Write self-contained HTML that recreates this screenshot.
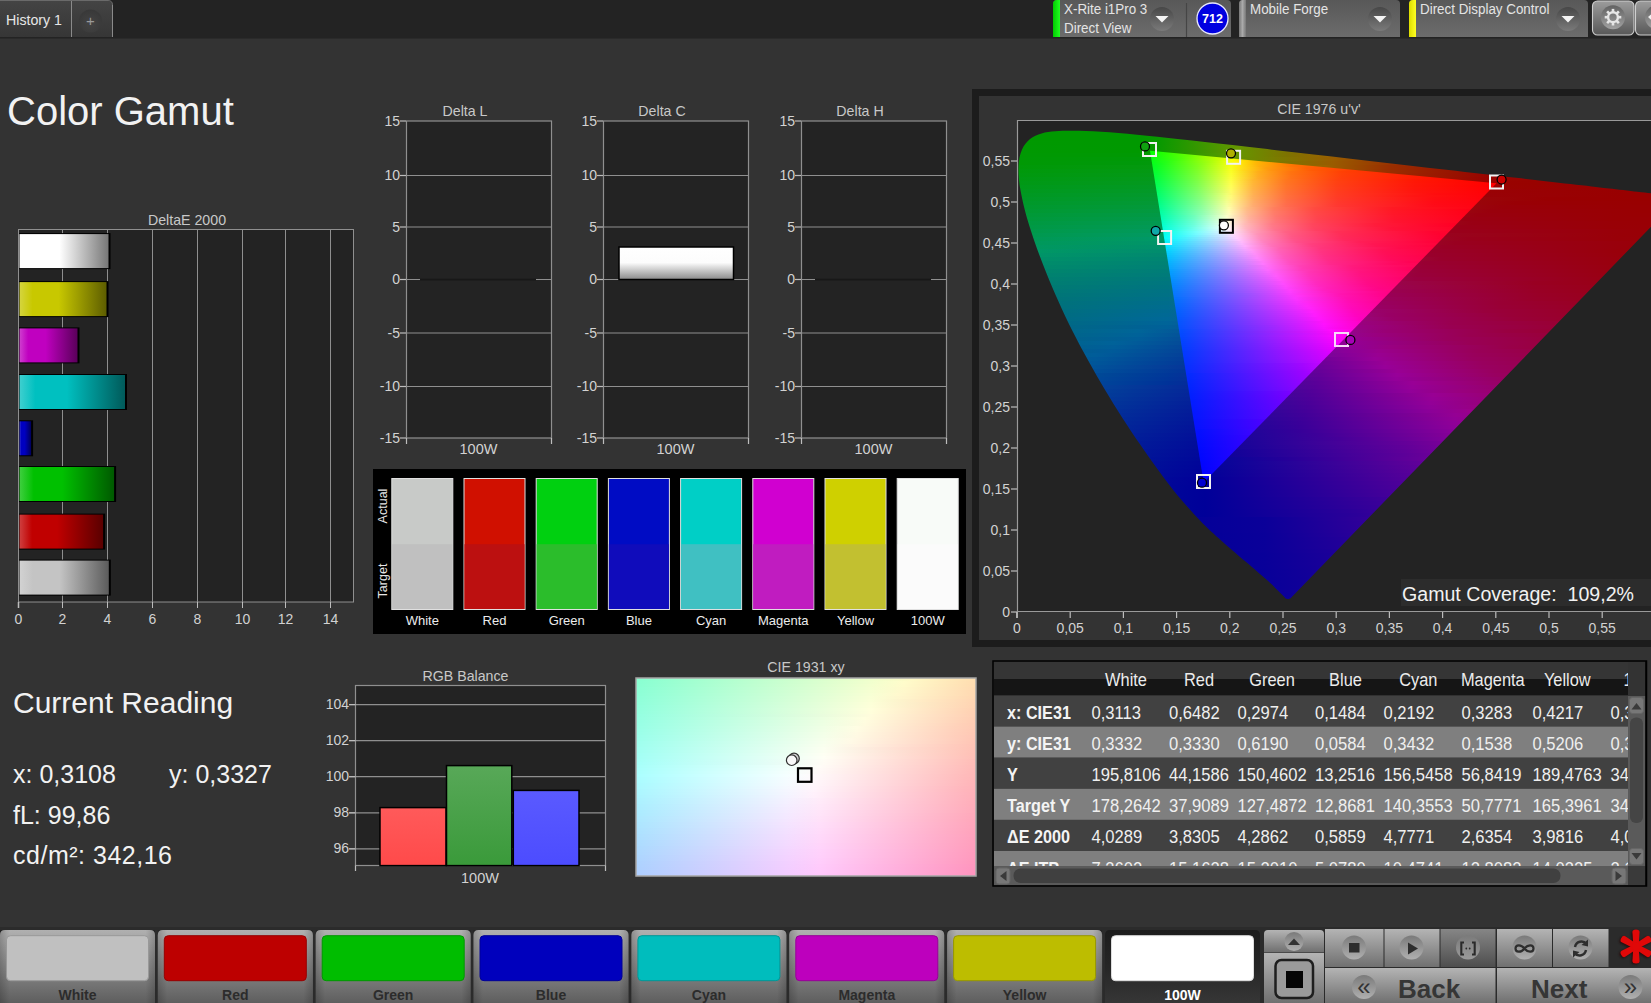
<!DOCTYPE html>
<html><head><meta charset="utf-8"><title>Color Gamut</title>
<style>
html,body{margin:0;padding:0;background:#333333;width:1651px;height:1003px;overflow:hidden;}
svg{display:block;font-family:"Liberation Sans", sans-serif;}
</style></head><body>
<svg width="1651" height="1003" viewBox="0 0 1651 1003">
<defs><linearGradient id="tabg" x1="0" y1="0" x2="0" y2="1"><stop offset="0" stop-color="#444"/><stop offset="1" stop-color="#363636"/></linearGradient><radialGradient id="plusg" cx="0.5" cy="0.6" r="0.6"><stop offset="0" stop-color="#444"/><stop offset="1" stop-color="#383838"/></radialGradient><linearGradient id="boxg" x1="0" y1="0" x2="0" y2="1"><stop offset="0" stop-color="#585858"/><stop offset="1" stop-color="#6c6c6c"/></linearGradient><linearGradient id="ddg" x1="0" y1="0" x2="0" y2="1"><stop offset="0" stop-color="#474747"/><stop offset="1" stop-color="#7a7a7a"/></linearGradient><linearGradient id="grs" x1="0" y1="0" x2="1" y2="0"><stop offset="0" stop-color="#0c0"/><stop offset="1" stop-color="#2f2"/></linearGradient><linearGradient id="gys" x1="0" y1="0" x2="1" y2="0"><stop offset="0" stop-color="#dd0"/><stop offset="1" stop-color="#ff2"/></linearGradient><linearGradient id="ggs" x1="0" y1="0" x2="1" y2="0"><stop offset="0" stop-color="#777"/><stop offset="0.5" stop-color="#aaa"/><stop offset="1" stop-color="#777"/></linearGradient><linearGradient id="gearg" x1="0" y1="0" x2="0" y2="1"><stop offset="0" stop-color="#9c9c9c"/><stop offset="1" stop-color="#585858"/></linearGradient><linearGradient id="gearc" x1="0" y1="0" x2="0" y2="1"><stop offset="0" stop-color="#626262"/><stop offset="1" stop-color="#a2a2a2"/></linearGradient><linearGradient id="db0" x1="0" y1="0" x2="1" y2="0"><stop offset="0" stop-color="#ffffff"/><stop offset="0.15" stop-color="#ffffff"/><stop offset="0.45" stop-color="#ffffff"/><stop offset="1" stop-color="#777777"/></linearGradient><linearGradient id="db1" x1="0" y1="0" x2="1" y2="0"><stop offset="0" stop-color="#d5d53f"/><stop offset="0.15" stop-color="#c8c800"/><stop offset="0.45" stop-color="#c8c800"/><stop offset="1" stop-color="#5e5e00"/></linearGradient><linearGradient id="db2" x1="0" y1="0" x2="1" y2="0"><stop offset="0" stop-color="#cf3fcf"/><stop offset="0.15" stop-color="#c000c0"/><stop offset="0.45" stop-color="#c000c0"/><stop offset="1" stop-color="#5a005a"/></linearGradient><linearGradient id="db3" x1="0" y1="0" x2="1" y2="0"><stop offset="0" stop-color="#3fcfcf"/><stop offset="0.15" stop-color="#00c0c0"/><stop offset="0.45" stop-color="#00c0c0"/><stop offset="1" stop-color="#005a5a"/></linearGradient><linearGradient id="db4" x1="0" y1="0" x2="1" y2="0"><stop offset="0" stop-color="#3f3fcf"/><stop offset="0.15" stop-color="#0000c0"/><stop offset="0.45" stop-color="#0000c0"/><stop offset="1" stop-color="#00005a"/></linearGradient><linearGradient id="db5" x1="0" y1="0" x2="1" y2="0"><stop offset="0" stop-color="#3fcf3f"/><stop offset="0.15" stop-color="#00c000"/><stop offset="0.45" stop-color="#00c000"/><stop offset="1" stop-color="#005a00"/></linearGradient><linearGradient id="db6" x1="0" y1="0" x2="1" y2="0"><stop offset="0" stop-color="#cf3f3f"/><stop offset="0.15" stop-color="#c00000"/><stop offset="0.45" stop-color="#c00000"/><stop offset="1" stop-color="#5a0000"/></linearGradient><linearGradient id="db7" x1="0" y1="0" x2="1" y2="0"><stop offset="0" stop-color="#d2d2d2"/><stop offset="0.15" stop-color="#c4c4c4"/><stop offset="0.45" stop-color="#c4c4c4"/><stop offset="1" stop-color="#5c5c5c"/></linearGradient><linearGradient id="cbar" x1="0" y1="0" x2="0" y2="1"><stop offset="0" stop-color="#ffffff"/><stop offset="0.48" stop-color="#fcfcfc"/><stop offset="1" stop-color="#8a8a8a"/></linearGradient><linearGradient id="rbR" x1="0" y1="0" x2="0" y2="1"><stop offset="0" stop-color="#ff5a5a"/><stop offset="1" stop-color="#ff4a4a"/></linearGradient><linearGradient id="rbG" x1="0" y1="0" x2="0" y2="1"><stop offset="0" stop-color="#58a858"/><stop offset="1" stop-color="#3a9a3a"/></linearGradient><linearGradient id="rbB" x1="0" y1="0" x2="0" y2="1"><stop offset="0" stop-color="#5a5aff"/><stop offset="1" stop-color="#4c4cff"/></linearGradient><linearGradient id="btng" x1="0" y1="0" x2="0" y2="1"><stop offset="0" stop-color="#b0b0b0"/><stop offset="0.55" stop-color="#858585"/><stop offset="1" stop-color="#5e5e5e"/></linearGradient><linearGradient id="btnsel" x1="0" y1="0" x2="0" y2="1"><stop offset="0" stop-color="#1c1c1c"/><stop offset="0.5" stop-color="#262626"/><stop offset="1" stop-color="#363636"/></linearGradient><linearGradient id="btnside" x1="0" y1="0" x2="1" y2="0"><stop offset="0" stop-color="#000" stop-opacity="0.18"/><stop offset="0.06" stop-color="#000" stop-opacity="0"/><stop offset="0.94" stop-color="#000" stop-opacity="0"/><stop offset="1" stop-color="#000" stop-opacity="0.18"/></linearGradient><linearGradient id="cbg" x1="0" y1="0" x2="0" y2="1"><stop offset="0" stop-color="#b4b4b4"/><stop offset="1" stop-color="#707070"/></linearGradient><linearGradient id="cbd" x1="0" y1="0" x2="0" y2="1"><stop offset="0" stop-color="#868686"/><stop offset="1" stop-color="#4e4e4e"/></linearGradient><linearGradient id="icg" x1="0" y1="0" x2="0" y2="1"><stop offset="0" stop-color="#7a7a7a"/><stop offset="1" stop-color="#b0b0b0"/></linearGradient><filter id="ash" x="-50%" y="-50%" width="200%" height="200%"><feGaussianBlur stdDeviation="1.2"/></filter></defs>
<rect x="0" y="0" width="1651" height="38.5" fill="#232323"/>
<path d="M0,1 H108 Q113,1 113,6 V37 H0 Z" fill="url(#tabg)"/>
<path d="M0,0.5 H108 Q112.5,0.5 112.5,5" fill="none" stroke="#6a6a6a" stroke-width="1"/>
<line x1="112.5" y1="5" x2="112.5" y2="37" stroke="#8a8a8a" stroke-width="1"/>
<line x1="71.5" y1="1" x2="71.5" y2="37" stroke="#8a8a8a" stroke-width="1"/>
<circle cx="90.5" cy="21" r="11.5" fill="url(#plusg)"/>
<text x="90.5" y="26.0" font-size="15" fill="#9a9a9a" text-anchor="middle" font-weight="normal" >+</text>
<text transform="translate(6.0,25.2) scale(1,1.08)" font-size="14.2" fill="#e6e6e6" text-anchor="start" font-weight="normal" >History 1</text>
<path d="M1053,37 V4 Q1053,0 1057,0 H1227 Q1231,0 1231,4 V37 Z" fill="url(#boxg)"/>
<path d="M1053,37 V4 Q1053,0 1057,0 H1060 V37 Z" fill="url(#grs)"/>
<text transform="translate(1064.0,13.5) scale(1,1.05)" font-size="13.4" fill="#e4e4e4" text-anchor="start" font-weight="normal" >X-Rite i1Pro 3</text>
<text transform="translate(1064.0,32.5) scale(1,1.05)" font-size="13.4" fill="#e4e4e4" text-anchor="start" font-weight="normal" >Direct View</text>
<line x1="1186.5" y1="3" x2="1186.5" y2="37" stroke="#454545" stroke-width="1.2"/>
<circle cx="1162" cy="19" r="12" fill="url(#ddg)"/>
<path d="M1155.5,16 L1168.5,16 L1162.0,22.5 Z" fill="#f4f4f4"/>
<circle cx="1212.5" cy="18.5" r="15.5" fill="#0000e0" stroke="#e8e8ff" stroke-width="1.3"/>
<text x="1212.5" y="23.0" font-size="12.5" fill="#ffffff" text-anchor="middle" font-weight="bold" >712</text>
<path d="M1239,37 V4 Q1239,0 1243,0 H1396 Q1400,0 1400,4 V37 Z" fill="url(#boxg)"/>
<path d="M1239,37 V4 Q1239,0 1243,0 H1246 V37 Z" fill="url(#ggs)"/>
<text transform="translate(1250.0,14.0) scale(1,1.05)" font-size="13.4" fill="#e4e4e4" text-anchor="start" font-weight="normal" >Mobile Forge</text>
<circle cx="1380" cy="19" r="12" fill="url(#ddg)"/>
<path d="M1373.5,16 L1386.5,16 L1380.0,22.5 Z" fill="#f4f4f4"/>
<path d="M1409,37 V4 Q1409,0 1413,0 H1584 Q1588,0 1588,4 V37 Z" fill="url(#boxg)"/>
<path d="M1409,37 V4 Q1409,0 1413,0 H1416 V37 Z" fill="url(#gys)"/>
<text transform="translate(1420.0,14.0) scale(1,1.05)" font-size="13.4" fill="#e4e4e4" text-anchor="start" font-weight="normal" >Direct Display Control</text>
<circle cx="1568" cy="19" r="12" fill="url(#ddg)"/>
<path d="M1561.5,16 L1574.5,16 L1568.0,22.5 Z" fill="#f4f4f4"/>
<rect x="1592.5" y="1" width="41.5" height="34" rx="5" fill="url(#gearg)" stroke="#cfcfcf" stroke-width="1.1"/>
<circle cx="1613" cy="17.3" r="12" fill="url(#gearc)"/>
<g transform="translate(1613,17.2)" fill="#e6e6e6"><rect x="-1.3" y="-8.3" width="2.6" height="3.5" transform="rotate(0)"/><rect x="-1.3" y="-8.3" width="2.6" height="3.5" transform="rotate(45)"/><rect x="-1.3" y="-8.3" width="2.6" height="3.5" transform="rotate(90)"/><rect x="-1.3" y="-8.3" width="2.6" height="3.5" transform="rotate(135)"/><rect x="-1.3" y="-8.3" width="2.6" height="3.5" transform="rotate(180)"/><rect x="-1.3" y="-8.3" width="2.6" height="3.5" transform="rotate(225)"/><rect x="-1.3" y="-8.3" width="2.6" height="3.5" transform="rotate(270)"/><rect x="-1.3" y="-8.3" width="2.6" height="3.5" transform="rotate(315)"/><circle r="4.9" fill="none" stroke="#e6e6e6" stroke-width="2.4"/></g>
<rect x="1635.5" y="1" width="30" height="34" rx="5" fill="url(#gearg)" stroke="#cfcfcf" stroke-width="1.1"/>
<circle cx="1657" cy="17.3" r="12" fill="url(#gearc)"/>
<path d="M1648,17 L1652,13.5 L1652,20.5 Z" fill="#f0f0f0"/>
<text x="7.0" y="124.5" font-size="40" fill="#f2f2f2" text-anchor="start" font-weight="normal" >Color Gamut</text>
<text x="187.0" y="224.5" font-size="14.2" fill="#c8c8c8" text-anchor="middle" font-weight="normal" >DeltaE 2000</text>
<rect x="18.5" y="229.5" width="335" height="372.5" fill="#232323" stroke="#8f8f8f" stroke-width="1"/>
<line x1="62.5" y1="230" x2="62.5" y2="602" stroke="#8f8f8f" stroke-width="1"/>
<line x1="107.5" y1="230" x2="107.5" y2="602" stroke="#8f8f8f" stroke-width="1"/>
<line x1="152.5" y1="230" x2="152.5" y2="602" stroke="#8f8f8f" stroke-width="1"/>
<line x1="197.5" y1="230" x2="197.5" y2="602" stroke="#8f8f8f" stroke-width="1"/>
<line x1="242.5" y1="230" x2="242.5" y2="602" stroke="#8f8f8f" stroke-width="1"/>
<line x1="285.5" y1="230" x2="285.5" y2="602" stroke="#8f8f8f" stroke-width="1"/>
<line x1="330.5" y1="230" x2="330.5" y2="602" stroke="#8f8f8f" stroke-width="1"/>
<line x1="18.5" y1="602" x2="18.5" y2="608" stroke="#bdbdbd" stroke-width="1.5"/>
<text x="18.5" y="624.0" font-size="14" fill="#d2d2d2" text-anchor="middle" font-weight="normal" >0</text>
<line x1="62.5" y1="602" x2="62.5" y2="608" stroke="#bdbdbd" stroke-width="1"/>
<text x="62.5" y="624.0" font-size="14" fill="#d2d2d2" text-anchor="middle" font-weight="normal" >2</text>
<line x1="107.5" y1="602" x2="107.5" y2="608" stroke="#bdbdbd" stroke-width="1"/>
<text x="107.5" y="624.0" font-size="14" fill="#d2d2d2" text-anchor="middle" font-weight="normal" >4</text>
<line x1="152.5" y1="602" x2="152.5" y2="608" stroke="#bdbdbd" stroke-width="1"/>
<text x="152.5" y="624.0" font-size="14" fill="#d2d2d2" text-anchor="middle" font-weight="normal" >6</text>
<line x1="197.5" y1="602" x2="197.5" y2="608" stroke="#bdbdbd" stroke-width="1"/>
<text x="197.5" y="624.0" font-size="14" fill="#d2d2d2" text-anchor="middle" font-weight="normal" >8</text>
<line x1="242.5" y1="602" x2="242.5" y2="608" stroke="#bdbdbd" stroke-width="1"/>
<text x="242.5" y="624.0" font-size="14" fill="#d2d2d2" text-anchor="middle" font-weight="normal" >10</text>
<line x1="285.5" y1="602" x2="285.5" y2="608" stroke="#bdbdbd" stroke-width="1"/>
<text x="285.5" y="624.0" font-size="14" fill="#d2d2d2" text-anchor="middle" font-weight="normal" >12</text>
<line x1="330.5" y1="602" x2="330.5" y2="608" stroke="#bdbdbd" stroke-width="1"/>
<text x="330.5" y="624.0" font-size="14" fill="#d2d2d2" text-anchor="middle" font-weight="normal" >14</text>
<rect x="19" y="233.1" width="91.5" height="36" fill="#000"/>
<rect x="19.5" y="234.1" width="89.0" height="34" fill="url(#db0)"/>
<rect x="19" y="281.1" width="89.5" height="36" fill="#000"/>
<rect x="19.5" y="282.1" width="87.0" height="34" fill="url(#db1)"/>
<rect x="19" y="327.4" width="60.5" height="36" fill="#000"/>
<rect x="19.5" y="328.4" width="58.0" height="34" fill="url(#db2)"/>
<rect x="19" y="374.0" width="108.0" height="36" fill="#000"/>
<rect x="19.5" y="375.0" width="105.5" height="34" fill="url(#db3)"/>
<rect x="19" y="420.3" width="14.1" height="36" fill="#000"/>
<rect x="19.5" y="421.3" width="11.6" height="34" fill="url(#db4)"/>
<rect x="19" y="466.0" width="97.1" height="36" fill="#000"/>
<rect x="19.5" y="467.0" width="94.6" height="34" fill="url(#db5)"/>
<rect x="19" y="513.6" width="86.1" height="36" fill="#000"/>
<rect x="19.5" y="514.6" width="83.6" height="34" fill="url(#db6)"/>
<rect x="19" y="559.6" width="91.8" height="36" fill="#000"/>
<rect x="19.5" y="560.6" width="89.3" height="34" fill="url(#db7)"/>
<text x="465.0" y="115.5" font-size="14.2" fill="#c8c8c8" text-anchor="middle" font-weight="normal" >Delta L</text>
<rect x="406.5" y="121" width="145" height="317" fill="#232323" stroke="#8f8f8f" stroke-width="1.2"/>
<line x1="400.0" y1="121.0" x2="406.0" y2="121.0" stroke="#bdbdbd" stroke-width="1.2"/>
<text x="400.0" y="125.6" font-size="14" fill="#d2d2d2" text-anchor="end" font-weight="normal" >15</text>
<line x1="406.0" y1="175.5" x2="551.0" y2="175.5" stroke="#8f8f8f" stroke-width="1.2"/>
<line x1="400.0" y1="175.5" x2="406.0" y2="175.5" stroke="#bdbdbd" stroke-width="1.2"/>
<text x="400.0" y="180.1" font-size="14" fill="#d2d2d2" text-anchor="end" font-weight="normal" >10</text>
<line x1="406.0" y1="227.0" x2="551.0" y2="227.0" stroke="#8f8f8f" stroke-width="1.2"/>
<line x1="400.0" y1="227.0" x2="406.0" y2="227.0" stroke="#bdbdbd" stroke-width="1.2"/>
<text x="400.0" y="231.6" font-size="14" fill="#d2d2d2" text-anchor="end" font-weight="normal" >5</text>
<line x1="406.0" y1="279.5" x2="551.0" y2="279.5" stroke="#8f8f8f" stroke-width="1.2"/>
<line x1="400.0" y1="279.5" x2="406.0" y2="279.5" stroke="#bdbdbd" stroke-width="1.2"/>
<text x="400.0" y="284.1" font-size="14" fill="#d2d2d2" text-anchor="end" font-weight="normal" >0</text>
<line x1="406.0" y1="333.0" x2="551.0" y2="333.0" stroke="#8f8f8f" stroke-width="1.2"/>
<line x1="400.0" y1="333.0" x2="406.0" y2="333.0" stroke="#bdbdbd" stroke-width="1.2"/>
<text x="400.0" y="337.6" font-size="14" fill="#d2d2d2" text-anchor="end" font-weight="normal" >-5</text>
<line x1="406.0" y1="386.5" x2="551.0" y2="386.5" stroke="#8f8f8f" stroke-width="1.2"/>
<line x1="400.0" y1="386.5" x2="406.0" y2="386.5" stroke="#bdbdbd" stroke-width="1.2"/>
<text x="400.0" y="391.1" font-size="14" fill="#d2d2d2" text-anchor="end" font-weight="normal" >-10</text>
<line x1="400.0" y1="438.0" x2="406.0" y2="438.0" stroke="#bdbdbd" stroke-width="1.2"/>
<text x="400.0" y="442.6" font-size="14" fill="#d2d2d2" text-anchor="end" font-weight="normal" >-15</text>
<line x1="406.5" y1="438" x2="406.5" y2="444" stroke="#bdbdbd" stroke-width="1.2"/>
<line x1="551.5" y1="438" x2="551.5" y2="444" stroke="#bdbdbd" stroke-width="1.2"/>
<text x="478.5" y="454.0" font-size="14.5" fill="#d2d2d2" text-anchor="middle" font-weight="normal" >100W</text>
<rect x="420.0" y="278.7" width="116" height="1.8" fill="#181818"/>
<text x="662.0" y="115.5" font-size="14.2" fill="#c8c8c8" text-anchor="middle" font-weight="normal" >Delta C</text>
<rect x="603.5" y="121" width="145" height="317" fill="#232323" stroke="#8f8f8f" stroke-width="1.2"/>
<line x1="597.0" y1="121.0" x2="603.0" y2="121.0" stroke="#bdbdbd" stroke-width="1.2"/>
<text x="597.0" y="125.6" font-size="14" fill="#d2d2d2" text-anchor="end" font-weight="normal" >15</text>
<line x1="603.0" y1="175.5" x2="748.0" y2="175.5" stroke="#8f8f8f" stroke-width="1.2"/>
<line x1="597.0" y1="175.5" x2="603.0" y2="175.5" stroke="#bdbdbd" stroke-width="1.2"/>
<text x="597.0" y="180.1" font-size="14" fill="#d2d2d2" text-anchor="end" font-weight="normal" >10</text>
<line x1="603.0" y1="227.0" x2="748.0" y2="227.0" stroke="#8f8f8f" stroke-width="1.2"/>
<line x1="597.0" y1="227.0" x2="603.0" y2="227.0" stroke="#bdbdbd" stroke-width="1.2"/>
<text x="597.0" y="231.6" font-size="14" fill="#d2d2d2" text-anchor="end" font-weight="normal" >5</text>
<line x1="603.0" y1="279.5" x2="748.0" y2="279.5" stroke="#8f8f8f" stroke-width="1.2"/>
<line x1="597.0" y1="279.5" x2="603.0" y2="279.5" stroke="#bdbdbd" stroke-width="1.2"/>
<text x="597.0" y="284.1" font-size="14" fill="#d2d2d2" text-anchor="end" font-weight="normal" >0</text>
<line x1="603.0" y1="333.0" x2="748.0" y2="333.0" stroke="#8f8f8f" stroke-width="1.2"/>
<line x1="597.0" y1="333.0" x2="603.0" y2="333.0" stroke="#bdbdbd" stroke-width="1.2"/>
<text x="597.0" y="337.6" font-size="14" fill="#d2d2d2" text-anchor="end" font-weight="normal" >-5</text>
<line x1="603.0" y1="386.5" x2="748.0" y2="386.5" stroke="#8f8f8f" stroke-width="1.2"/>
<line x1="597.0" y1="386.5" x2="603.0" y2="386.5" stroke="#bdbdbd" stroke-width="1.2"/>
<text x="597.0" y="391.1" font-size="14" fill="#d2d2d2" text-anchor="end" font-weight="normal" >-10</text>
<line x1="597.0" y1="438.0" x2="603.0" y2="438.0" stroke="#bdbdbd" stroke-width="1.2"/>
<text x="597.0" y="442.6" font-size="14" fill="#d2d2d2" text-anchor="end" font-weight="normal" >-15</text>
<line x1="603.5" y1="438" x2="603.5" y2="444" stroke="#bdbdbd" stroke-width="1.2"/>
<line x1="748.5" y1="438" x2="748.5" y2="444" stroke="#bdbdbd" stroke-width="1.2"/>
<text x="675.5" y="454.0" font-size="14.5" fill="#d2d2d2" text-anchor="middle" font-weight="normal" >100W</text>
<rect x="619" y="247" width="114.5" height="32.5" fill="url(#cbar)" stroke="#000" stroke-width="1.5"/>
<text x="860.0" y="115.5" font-size="14.2" fill="#c8c8c8" text-anchor="middle" font-weight="normal" >Delta H</text>
<rect x="801.5" y="121" width="145" height="317" fill="#232323" stroke="#8f8f8f" stroke-width="1.2"/>
<line x1="795.0" y1="121.0" x2="801.0" y2="121.0" stroke="#bdbdbd" stroke-width="1.2"/>
<text x="795.0" y="125.6" font-size="14" fill="#d2d2d2" text-anchor="end" font-weight="normal" >15</text>
<line x1="801.0" y1="175.5" x2="946.0" y2="175.5" stroke="#8f8f8f" stroke-width="1.2"/>
<line x1="795.0" y1="175.5" x2="801.0" y2="175.5" stroke="#bdbdbd" stroke-width="1.2"/>
<text x="795.0" y="180.1" font-size="14" fill="#d2d2d2" text-anchor="end" font-weight="normal" >10</text>
<line x1="801.0" y1="227.0" x2="946.0" y2="227.0" stroke="#8f8f8f" stroke-width="1.2"/>
<line x1="795.0" y1="227.0" x2="801.0" y2="227.0" stroke="#bdbdbd" stroke-width="1.2"/>
<text x="795.0" y="231.6" font-size="14" fill="#d2d2d2" text-anchor="end" font-weight="normal" >5</text>
<line x1="801.0" y1="279.5" x2="946.0" y2="279.5" stroke="#8f8f8f" stroke-width="1.2"/>
<line x1="795.0" y1="279.5" x2="801.0" y2="279.5" stroke="#bdbdbd" stroke-width="1.2"/>
<text x="795.0" y="284.1" font-size="14" fill="#d2d2d2" text-anchor="end" font-weight="normal" >0</text>
<line x1="801.0" y1="333.0" x2="946.0" y2="333.0" stroke="#8f8f8f" stroke-width="1.2"/>
<line x1="795.0" y1="333.0" x2="801.0" y2="333.0" stroke="#bdbdbd" stroke-width="1.2"/>
<text x="795.0" y="337.6" font-size="14" fill="#d2d2d2" text-anchor="end" font-weight="normal" >-5</text>
<line x1="801.0" y1="386.5" x2="946.0" y2="386.5" stroke="#8f8f8f" stroke-width="1.2"/>
<line x1="795.0" y1="386.5" x2="801.0" y2="386.5" stroke="#bdbdbd" stroke-width="1.2"/>
<text x="795.0" y="391.1" font-size="14" fill="#d2d2d2" text-anchor="end" font-weight="normal" >-10</text>
<line x1="795.0" y1="438.0" x2="801.0" y2="438.0" stroke="#bdbdbd" stroke-width="1.2"/>
<text x="795.0" y="442.6" font-size="14" fill="#d2d2d2" text-anchor="end" font-weight="normal" >-15</text>
<line x1="801.5" y1="438" x2="801.5" y2="444" stroke="#bdbdbd" stroke-width="1.2"/>
<line x1="946.5" y1="438" x2="946.5" y2="444" stroke="#bdbdbd" stroke-width="1.2"/>
<text x="873.5" y="454.0" font-size="14.5" fill="#d2d2d2" text-anchor="middle" font-weight="normal" >100W</text>
<rect x="815.0" y="278.7" width="116" height="1.8" fill="#181818"/>
<rect x="373" y="469" width="593" height="165" fill="#000"/>
<rect x="391.8" y="478.5" width="61" height="131" fill="#c8cac8" stroke="#e0e0e0" stroke-width="1"/>
<rect x="392.3" y="544.2" width="60" height="64.8" fill="#c0c0c0"/>
<text x="422.3" y="625.0" font-size="13" fill="#ececec" text-anchor="middle" font-weight="normal" >White</text>
<rect x="464.0" y="478.5" width="61" height="131" fill="#d01000" stroke="#e0e0e0" stroke-width="1"/>
<rect x="464.5" y="544.2" width="60" height="64.8" fill="#bc1010"/>
<text x="494.5" y="625.0" font-size="13" fill="#ececec" text-anchor="middle" font-weight="normal" >Red</text>
<rect x="536.2" y="478.5" width="61" height="131" fill="#00d010" stroke="#e0e0e0" stroke-width="1"/>
<rect x="536.7" y="544.2" width="60" height="64.8" fill="#2bbd2b"/>
<text x="566.7" y="625.0" font-size="13" fill="#ececec" text-anchor="middle" font-weight="normal" >Green</text>
<rect x="608.4" y="478.5" width="61" height="131" fill="#000cc4" stroke="#e0e0e0" stroke-width="1"/>
<rect x="608.9" y="544.2" width="60" height="64.8" fill="#100cbb"/>
<text x="638.9" y="625.0" font-size="13" fill="#ececec" text-anchor="middle" font-weight="normal" >Blue</text>
<rect x="680.6" y="478.5" width="61" height="131" fill="#00cfc6" stroke="#e0e0e0" stroke-width="1"/>
<rect x="681.1" y="544.2" width="60" height="64.8" fill="#40c0c2"/>
<text x="711.1" y="625.0" font-size="13" fill="#ececec" text-anchor="middle" font-weight="normal" >Cyan</text>
<rect x="752.8" y="478.5" width="61" height="131" fill="#d000d0" stroke="#e0e0e0" stroke-width="1"/>
<rect x="753.3" y="544.2" width="60" height="64.8" fill="#c01cc0"/>
<text x="783.3" y="625.0" font-size="13" fill="#ececec" text-anchor="middle" font-weight="normal" >Magenta</text>
<rect x="825.0" y="478.5" width="61" height="131" fill="#cfd000" stroke="#e0e0e0" stroke-width="1"/>
<rect x="825.5" y="544.2" width="60" height="64.8" fill="#c2c030"/>
<text x="855.5" y="625.0" font-size="13" fill="#ececec" text-anchor="middle" font-weight="normal" >Yellow</text>
<rect x="897.2" y="478.5" width="61" height="131" fill="#f8fbf8" stroke="#e0e0e0" stroke-width="1"/>
<rect x="897.7" y="544.2" width="60" height="64.8" fill="#fbfbfb"/>
<text x="927.7" y="625.0" font-size="13" fill="#ececec" text-anchor="middle" font-weight="normal" >100W</text>
<text transform="translate(387,506) rotate(-90)" font-size="12.5" fill="#e6e6e6" text-anchor="middle">Actual</text>
<text transform="translate(387,581) rotate(-90)" font-size="12.5" fill="#e6e6e6" text-anchor="middle">Target</text>
<rect x="972" y="89" width="690" height="558" fill="#1c1c1c"/>
<rect x="979" y="96" width="680" height="544" fill="#333333"/>
<text x="1319.0" y="113.5" font-size="14.2" fill="#c8c8c8" text-anchor="middle" font-weight="normal" >CIE 1976 u'v'</text>
<rect x="1017" y="120" width="650" height="492" fill="#232323"/>
<defs><clipPath id="loc"><path d="M1290.31,598.50 C1290.27,598.49 1290.19,598.43 1290.10,598.45 C1290.02,598.47 1289.93,598.58 1289.80,598.61 C1289.68,598.64 1289.49,598.56 1289.38,598.61 C1289.27,598.67 1289.27,598.87 1289.13,598.93 C1289.00,599.00 1288.82,598.99 1288.59,598.99 C1288.37,598.99 1288.07,598.96 1287.79,598.94 C1287.51,598.92 1287.29,599.00 1286.89,598.87 C1286.48,598.73 1285.91,598.57 1285.37,598.15 C1284.82,597.73 1284.36,597.13 1283.60,596.34 C1282.85,595.56 1282.01,594.64 1280.84,593.45 C1279.66,592.26 1278.22,590.89 1276.55,589.21 C1274.87,587.53 1273.09,585.56 1270.77,583.39 C1268.45,581.22 1265.78,578.95 1262.64,576.21 C1259.51,573.47 1256.01,570.39 1251.95,566.94 C1247.90,563.49 1243.43,559.91 1238.30,555.51 C1233.17,551.12 1227.59,546.45 1221.17,540.57 C1214.75,534.69 1208.02,528.97 1199.79,520.24 C1191.57,511.51 1181.79,500.84 1171.82,488.19 C1161.86,475.54 1151.13,460.74 1140.01,444.36 C1128.89,427.98 1116.36,408.82 1105.11,389.92 C1093.85,371.03 1082.17,350.23 1072.48,330.98 C1062.78,311.73 1054.10,291.81 1046.96,274.43 C1039.81,257.06 1034.01,240.59 1029.63,226.73 C1025.25,212.87 1022.53,201.30 1020.68,191.28 C1018.83,181.26 1018.31,173.55 1018.51,166.61 C1018.72,159.67 1020.01,154.27 1021.93,149.65 C1023.85,145.03 1026.78,141.60 1030.05,138.89 C1033.33,136.18 1037.39,134.65 1041.60,133.39 C1045.80,132.14 1050.52,131.79 1055.30,131.37 C1060.08,130.94 1065.25,130.92 1070.27,130.87 C1075.30,130.81 1080.27,130.90 1085.44,131.05 C1090.61,131.20 1095.81,131.46 1101.30,131.79 C1106.79,132.12 1112.42,132.54 1118.36,133.03 C1124.29,133.51 1130.42,134.08 1136.91,134.70 C1143.41,135.33 1150.17,136.02 1157.33,136.77 C1164.50,137.52 1171.98,138.33 1179.91,139.20 C1187.84,140.07 1196.13,141.00 1204.91,141.99 C1213.68,142.97 1222.86,144.02 1232.54,145.12 C1242.21,146.23 1252.35,147.40 1262.95,148.62 C1273.55,149.84 1284.64,151.12 1296.13,152.44 C1307.62,153.77 1319.62,155.15 1331.88,156.56 C1344.14,157.97 1356.90,159.43 1369.69,160.90 C1382.48,162.38 1395.86,163.93 1408.64,165.40 C1421.41,166.88 1433.94,168.32 1446.34,169.74 C1458.73,171.17 1471.37,172.63 1483.01,173.97 C1494.64,175.30 1505.74,176.57 1516.15,177.76 C1526.56,178.96 1536.42,180.09 1545.48,181.14 C1554.54,182.18 1562.84,183.15 1570.50,184.03 C1578.17,184.91 1585.05,185.70 1591.49,186.44 C1597.92,187.18 1601.46,187.58 1609.10,188.46 C1616.74,189.34 1629.54,190.82 1637.34,191.72 C1645.14,192.62 1650.77,193.27 1655.90,193.86 C1661.03,194.45 1664.03,194.80 1668.09,195.27 C1672.15,195.74 1678.23,196.44 1680.26,196.67 Z"/></clipPath><clipPath id="tri"><polygon points="1496.54,183.22 1150.00,150.75 1203.63,482.52"/></clipPath><clipPath id="plotclip"><rect x="1018" y="121" width="640" height="490"/></clipPath></defs><g clip-path="url(#plotclip)"><g clip-path="url(#loc)"><defs><linearGradient id="co0" gradientUnits="userSpaceOnUse" x1="1017" y1="0" x2="1651" y2="0"><stop offset="0.0000" stop-color="#009900"/><stop offset="0.1909" stop-color="#009900"/><stop offset="0.2256" stop-color="#089900"/><stop offset="0.3249" stop-color="#4f9900"/><stop offset="0.3596" stop-color="#689200"/><stop offset="0.4590" stop-color="#856c00"/><stop offset="0.5110" stop-color="#996000"/><stop offset="0.6341" stop-color="#992900"/><stop offset="0.8249" stop-color="#990200"/><stop offset="0.9779" stop-color="#990000"/><stop offset="0.9968" stop-color="#990000"/><stop offset="1.0000" stop-color="#990000"/></linearGradient><linearGradient id="co1" gradientUnits="userSpaceOnUse" x1="1017" y1="0" x2="1651" y2="0"><stop offset="0.0000" stop-color="#009900"/><stop offset="0.1909" stop-color="#009900"/><stop offset="0.2256" stop-color="#089900"/><stop offset="0.3249" stop-color="#509900"/><stop offset="0.3533" stop-color="#679500"/><stop offset="0.4338" stop-color="#7d7200"/><stop offset="0.5142" stop-color="#995c00"/><stop offset="0.6372" stop-color="#992700"/><stop offset="0.8281" stop-color="#990100"/><stop offset="0.9811" stop-color="#990000"/><stop offset="1.0000" stop-color="#990000"/></linearGradient><linearGradient id="co2" gradientUnits="userSpaceOnUse" x1="1017" y1="0" x2="1651" y2="0"><stop offset="0.0000" stop-color="#009900"/><stop offset="0.1909" stop-color="#009900"/><stop offset="0.2256" stop-color="#099900"/><stop offset="0.3249" stop-color="#519900"/><stop offset="0.3533" stop-color="#679500"/><stop offset="0.4338" stop-color="#7d7200"/><stop offset="0.5142" stop-color="#995b00"/><stop offset="0.6372" stop-color="#992600"/><stop offset="0.8281" stop-color="#990000"/><stop offset="0.9811" stop-color="#990000"/><stop offset="1.0000" stop-color="#990000"/></linearGradient><linearGradient id="co3" gradientUnits="userSpaceOnUse" x1="1017" y1="0" x2="1651" y2="0"><stop offset="0.0000" stop-color="#009900"/><stop offset="0.1909" stop-color="#009900"/><stop offset="0.2256" stop-color="#099900"/><stop offset="0.3249" stop-color="#519900"/><stop offset="0.3533" stop-color="#679400"/><stop offset="0.4338" stop-color="#7e7100"/><stop offset="0.4984" stop-color="#996300"/><stop offset="0.6215" stop-color="#992a00"/><stop offset="0.8123" stop-color="#990100"/><stop offset="0.9653" stop-color="#990000"/><stop offset="1.0000" stop-color="#990000"/></linearGradient><linearGradient id="co4" gradientUnits="userSpaceOnUse" x1="1017" y1="0" x2="1651" y2="0"><stop offset="0.0000" stop-color="#009901"/><stop offset="0.1909" stop-color="#009900"/><stop offset="0.2256" stop-color="#099900"/><stop offset="0.3486" stop-color="#669700"/><stop offset="0.4290" stop-color="#7d7200"/><stop offset="0.5095" stop-color="#995b00"/><stop offset="0.6325" stop-color="#992600"/><stop offset="0.7855" stop-color="#990400"/><stop offset="0.9763" stop-color="#990000"/><stop offset="1.0000" stop-color="#990000"/></linearGradient><linearGradient id="co5" gradientUnits="userSpaceOnUse" x1="1017" y1="0" x2="1651" y2="0"><stop offset="0.0000" stop-color="#009902"/><stop offset="0.1909" stop-color="#009900"/><stop offset="0.2256" stop-color="#0a9900"/><stop offset="0.3486" stop-color="#669600"/><stop offset="0.4290" stop-color="#7d7200"/><stop offset="0.4937" stop-color="#996400"/><stop offset="0.5931" stop-color="#993200"/><stop offset="0.7461" stop-color="#990900"/><stop offset="0.8691" stop-color="#990000"/><stop offset="0.9921" stop-color="#990000"/><stop offset="1.0000" stop-color="#990000"/></linearGradient><linearGradient id="co6" gradientUnits="userSpaceOnUse" x1="1017" y1="0" x2="1651" y2="0"><stop offset="0.0000" stop-color="#009902"/><stop offset="0.1909" stop-color="#009900"/><stop offset="0.2256" stop-color="#0a9900"/><stop offset="0.3486" stop-color="#669500"/><stop offset="0.4290" stop-color="#7e7200"/><stop offset="0.4937" stop-color="#996300"/><stop offset="0.5931" stop-color="#993100"/><stop offset="0.7461" stop-color="#990800"/><stop offset="0.8691" stop-color="#990000"/><stop offset="0.9921" stop-color="#990000"/><stop offset="1.0000" stop-color="#990000"/></linearGradient><linearGradient id="co7" gradientUnits="userSpaceOnUse" x1="1017" y1="0" x2="1651" y2="0"><stop offset="0.0000" stop-color="#009903"/><stop offset="0.1909" stop-color="#009903"/><stop offset="0.2192" stop-color="#069901"/><stop offset="0.3186" stop-color="#4f9900"/><stop offset="0.3470" stop-color="#669600"/><stop offset="0.4274" stop-color="#7e7200"/><stop offset="0.4921" stop-color="#996200"/><stop offset="0.5915" stop-color="#993100"/><stop offset="0.7445" stop-color="#990800"/><stop offset="0.8675" stop-color="#990000"/><stop offset="0.9905" stop-color="#990000"/><stop offset="1.0000" stop-color="#990000"/></linearGradient><linearGradient id="co8" gradientUnits="userSpaceOnUse" x1="1017" y1="0" x2="1651" y2="0"><stop offset="0.0000" stop-color="#009904"/><stop offset="0.1909" stop-color="#009907"/><stop offset="0.2256" stop-color="#029908"/><stop offset="0.2287" stop-color="#0c9902"/><stop offset="0.3281" stop-color="#589900"/><stop offset="0.3565" stop-color="#698f00"/><stop offset="0.4558" stop-color="#8a6b00"/><stop offset="0.4984" stop-color="#995d00"/><stop offset="0.6215" stop-color="#992500"/><stop offset="0.7744" stop-color="#990200"/><stop offset="0.9653" stop-color="#990000"/><stop offset="1.0000" stop-color="#990000"/></linearGradient><linearGradient id="co9" gradientUnits="userSpaceOnUse" x1="1017" y1="0" x2="1651" y2="0"><stop offset="0.0000" stop-color="#009904"/><stop offset="0.1909" stop-color="#00990a"/><stop offset="0.2334" stop-color="#03990c"/><stop offset="0.2350" stop-color="#119903"/><stop offset="0.3344" stop-color="#5f9902"/><stop offset="0.4338" stop-color="#827000"/><stop offset="0.4984" stop-color="#995b00"/><stop offset="0.6215" stop-color="#992400"/><stop offset="0.7744" stop-color="#990200"/><stop offset="0.9653" stop-color="#990000"/><stop offset="1.0000" stop-color="#990000"/></linearGradient><linearGradient id="co10" gradientUnits="userSpaceOnUse" x1="1017" y1="0" x2="1651" y2="0"><stop offset="0.0000" stop-color="#009907"/><stop offset="0.2382" stop-color="#049910"/><stop offset="0.2413" stop-color="#059910"/><stop offset="0.2429" stop-color="#169904"/><stop offset="0.3423" stop-color="#659703"/><stop offset="0.4227" stop-color="#7e7201"/><stop offset="0.4874" stop-color="#996100"/><stop offset="0.5868" stop-color="#992f00"/><stop offset="0.7397" stop-color="#990600"/><stop offset="0.9306" stop-color="#990000"/><stop offset="0.9953" stop-color="#990000"/><stop offset="1.0000" stop-color="#990000"/></linearGradient><linearGradient id="co11" gradientUnits="userSpaceOnUse" x1="1017" y1="0" x2="1651" y2="0"><stop offset="0.0000" stop-color="#00990b"/><stop offset="0.2382" stop-color="#049914"/><stop offset="0.2492" stop-color="#069914"/><stop offset="0.2508" stop-color="#1c9905"/><stop offset="0.3312" stop-color="#5e9904"/><stop offset="0.4306" stop-color="#827003"/><stop offset="0.4826" stop-color="#996302"/><stop offset="0.5820" stop-color="#993000"/><stop offset="0.7350" stop-color="#990600"/><stop offset="0.8880" stop-color="#990000"/><stop offset="0.9874" stop-color="#990000"/><stop offset="1.0000" stop-color="#990000"/></linearGradient><linearGradient id="co12" gradientUnits="userSpaceOnUse" x1="1017" y1="0" x2="1651" y2="0"><stop offset="0.0000" stop-color="#00990e"/><stop offset="0.2382" stop-color="#049918"/><stop offset="0.2571" stop-color="#079919"/><stop offset="0.2587" stop-color="#079919"/><stop offset="0.2603" stop-color="#239906"/><stop offset="0.3407" stop-color="#659705"/><stop offset="0.4211" stop-color="#7f7205"/><stop offset="0.4858" stop-color="#996004"/><stop offset="0.5852" stop-color="#992d01"/><stop offset="0.7382" stop-color="#990500"/><stop offset="0.9763" stop-color="#990000"/><stop offset="1.0000" stop-color="#990000"/></linearGradient><linearGradient id="co13" gradientUnits="userSpaceOnUse" x1="1017" y1="0" x2="1651" y2="0"><stop offset="0.0000" stop-color="#009912"/><stop offset="0.2382" stop-color="#04991c"/><stop offset="0.2666" stop-color="#09991d"/><stop offset="0.2681" stop-color="#299907"/><stop offset="0.3328" stop-color="#619907"/><stop offset="0.4322" stop-color="#846f06"/><stop offset="0.4842" stop-color="#995f06"/><stop offset="0.5836" stop-color="#992d02"/><stop offset="0.7366" stop-color="#990400"/><stop offset="0.9748" stop-color="#990000"/><stop offset="0.9984" stop-color="#990000"/><stop offset="1.0000" stop-color="#990000"/></linearGradient><linearGradient id="co14" gradientUnits="userSpaceOnUse" x1="1017" y1="0" x2="1651" y2="0"><stop offset="0.0000" stop-color="#009915"/><stop offset="0.2382" stop-color="#049920"/><stop offset="0.2729" stop-color="#0a9922"/><stop offset="0.2744" stop-color="#0a9922"/><stop offset="0.2760" stop-color="#309908"/><stop offset="0.3407" stop-color="#669508"/><stop offset="0.4211" stop-color="#807208"/><stop offset="0.4858" stop-color="#995d07"/><stop offset="0.5852" stop-color="#992b03"/><stop offset="0.7382" stop-color="#990300"/><stop offset="0.9763" stop-color="#990000"/><stop offset="1.0000" stop-color="#990000"/></linearGradient><linearGradient id="co15" gradientUnits="userSpaceOnUse" x1="1017" y1="0" x2="1651" y2="0"><stop offset="0.0000" stop-color="#009919"/><stop offset="0.2382" stop-color="#039925"/><stop offset="0.2808" stop-color="#0b9927"/><stop offset="0.2823" stop-color="#0c9927"/><stop offset="0.2839" stop-color="#37990a"/><stop offset="0.3360" stop-color="#65980a"/><stop offset="0.4164" stop-color="#7f730a"/><stop offset="0.4811" stop-color="#995e0a"/><stop offset="0.5804" stop-color="#992c05"/><stop offset="0.7334" stop-color="#990301"/><stop offset="0.9716" stop-color="#990000"/><stop offset="1.0000" stop-color="#990000"/></linearGradient><linearGradient id="co16" gradientUnits="userSpaceOnUse" x1="1017" y1="0" x2="1651" y2="0"><stop offset="0.0000" stop-color="#00991d"/><stop offset="0.2382" stop-color="#039929"/><stop offset="0.2902" stop-color="#0d992c"/><stop offset="0.2918" stop-color="#3e990b"/><stop offset="0.3344" stop-color="#64980b"/><stop offset="0.4148" stop-color="#7f730c"/><stop offset="0.4795" stop-color="#995e0c"/><stop offset="0.5789" stop-color="#992b06"/><stop offset="0.7319" stop-color="#990205"/><stop offset="0.9700" stop-color="#990000"/><stop offset="0.9984" stop-color="#990000"/><stop offset="1.0000" stop-color="#990000"/></linearGradient><linearGradient id="co17" gradientUnits="userSpaceOnUse" x1="1017" y1="0" x2="1651" y2="0"><stop offset="0.0000" stop-color="#009921"/><stop offset="0.2382" stop-color="#03992e"/><stop offset="0.2902" stop-color="#0d9931"/><stop offset="0.2997" stop-color="#0f9931"/><stop offset="0.3013" stop-color="#46990d"/><stop offset="0.3360" stop-color="#65960d"/><stop offset="0.4164" stop-color="#80720e"/><stop offset="0.4685" stop-color="#99650f"/><stop offset="0.5678" stop-color="#992e08"/><stop offset="0.7208" stop-color="#990207"/><stop offset="0.9590" stop-color="#990000"/><stop offset="0.9937" stop-color="#990000"/><stop offset="1.0000" stop-color="#990000"/></linearGradient><linearGradient id="co18" gradientUnits="userSpaceOnUse" x1="1017" y1="0" x2="1651" y2="0"><stop offset="0.0000" stop-color="#009925"/><stop offset="0.2382" stop-color="#039932"/><stop offset="0.3028" stop-color="#109937"/><stop offset="0.3076" stop-color="#119937"/><stop offset="0.3091" stop-color="#4e990e"/><stop offset="0.3375" stop-color="#66950f"/><stop offset="0.4180" stop-color="#827110"/><stop offset="0.4700" stop-color="#996211"/><stop offset="0.5694" stop-color="#992c0a"/><stop offset="0.6688" stop-color="#990e06"/><stop offset="0.6782" stop-color="#990c06"/><stop offset="0.6830" stop-color="#99070c"/><stop offset="0.8360" stop-color="#990002"/><stop offset="0.9890" stop-color="#990000"/><stop offset="1.0000" stop-color="#990000"/></linearGradient><linearGradient id="co19" gradientUnits="userSpaceOnUse" x1="1017" y1="0" x2="1651" y2="0"><stop offset="0.0000" stop-color="#009929"/><stop offset="0.2382" stop-color="#039937"/><stop offset="0.3028" stop-color="#10993c"/><stop offset="0.3155" stop-color="#13993d"/><stop offset="0.3170" stop-color="#569910"/><stop offset="0.3454" stop-color="#688f10"/><stop offset="0.4685" stop-color="#996113"/><stop offset="0.5678" stop-color="#992b0b"/><stop offset="0.6483" stop-color="#991208"/><stop offset="0.6593" stop-color="#990f07"/><stop offset="0.6625" stop-color="#990a10"/><stop offset="0.7855" stop-color="#990005"/><stop offset="0.9763" stop-color="#990001"/><stop offset="1.0000" stop-color="#990001"/></linearGradient><linearGradient id="co20" gradientUnits="userSpaceOnUse" x1="1017" y1="0" x2="1651" y2="0"><stop offset="0.0000" stop-color="#00992d"/><stop offset="0.2382" stop-color="#03993c"/><stop offset="0.3186" stop-color="#149942"/><stop offset="0.3233" stop-color="#169943"/><stop offset="0.3249" stop-color="#5f9912"/><stop offset="0.4243" stop-color="#866f15"/><stop offset="0.4669" stop-color="#996115"/><stop offset="0.5662" stop-color="#992b0d"/><stop offset="0.6309" stop-color="#99160a"/><stop offset="0.6404" stop-color="#991309"/><stop offset="0.6420" stop-color="#990d14"/><stop offset="0.7650" stop-color="#990009"/><stop offset="0.9558" stop-color="#990002"/><stop offset="0.9984" stop-color="#990002"/><stop offset="1.0000" stop-color="#990002"/></linearGradient><linearGradient id="co21" gradientUnits="userSpaceOnUse" x1="1017" y1="0" x2="1651" y2="0"><stop offset="0.0000" stop-color="#009931"/><stop offset="0.2382" stop-color="#039941"/><stop offset="0.3186" stop-color="#149948"/><stop offset="0.3312" stop-color="#189949"/><stop offset="0.3328" stop-color="#659614"/><stop offset="0.4132" stop-color="#827217"/><stop offset="0.4653" stop-color="#996018"/><stop offset="0.5647" stop-color="#992a0f"/><stop offset="0.6167" stop-color="#99190c"/><stop offset="0.6215" stop-color="#99170b"/><stop offset="0.6230" stop-color="#991019"/><stop offset="0.7461" stop-color="#99000c"/><stop offset="0.9842" stop-color="#990002"/><stop offset="1.0000" stop-color="#990002"/></linearGradient><linearGradient id="co22" gradientUnits="userSpaceOnUse" x1="1017" y1="0" x2="1651" y2="0"><stop offset="0.0000" stop-color="#009936"/><stop offset="0.2382" stop-color="#029947"/><stop offset="0.3375" stop-color="#1a994f"/><stop offset="0.3407" stop-color="#1b9950"/><stop offset="0.3423" stop-color="#688f16"/><stop offset="0.4653" stop-color="#995f1a"/><stop offset="0.5647" stop-color="#992910"/><stop offset="0.5994" stop-color="#991d0e"/><stop offset="0.6025" stop-color="#991c0e"/><stop offset="0.6041" stop-color="#99131d"/><stop offset="0.7271" stop-color="#99000f"/><stop offset="0.9653" stop-color="#990003"/><stop offset="1.0000" stop-color="#990003"/></linearGradient><linearGradient id="co23" gradientUnits="userSpaceOnUse" x1="1017" y1="0" x2="1651" y2="0"><stop offset="0.0000" stop-color="#00993a"/><stop offset="0.2382" stop-color="#02994c"/><stop offset="0.3375" stop-color="#1a9955"/><stop offset="0.3486" stop-color="#1e9957"/><stop offset="0.3502" stop-color="#6a8a18"/><stop offset="0.4495" stop-color="#98691e"/><stop offset="0.5489" stop-color="#992e13"/><stop offset="0.5773" stop-color="#992311"/><stop offset="0.5820" stop-color="#992110"/><stop offset="0.5836" stop-color="#991722"/><stop offset="0.7066" stop-color="#990013"/><stop offset="0.9448" stop-color="#990004"/><stop offset="0.9968" stop-color="#990004"/><stop offset="1.0000" stop-color="#990003"/></linearGradient><linearGradient id="co24" gradientUnits="userSpaceOnUse" x1="1017" y1="0" x2="1651" y2="0"><stop offset="0.0000" stop-color="#00993f"/><stop offset="0.2382" stop-color="#029952"/><stop offset="0.3375" stop-color="#1a995c"/><stop offset="0.3565" stop-color="#21995e"/><stop offset="0.3580" stop-color="#6d851a"/><stop offset="0.4574" stop-color="#996220"/><stop offset="0.5568" stop-color="#992914"/><stop offset="0.5631" stop-color="#992713"/><stop offset="0.5647" stop-color="#991b28"/><stop offset="0.7177" stop-color="#990014"/><stop offset="0.9558" stop-color="#990005"/><stop offset="0.9984" stop-color="#990004"/><stop offset="1.0000" stop-color="#990004"/></linearGradient><linearGradient id="co25" gradientUnits="userSpaceOnUse" x1="1017" y1="0" x2="1651" y2="0"><stop offset="0.0000" stop-color="#009943"/><stop offset="0.2382" stop-color="#029957"/><stop offset="0.3612" stop-color="#239965"/><stop offset="0.3644" stop-color="#249966"/><stop offset="0.3659" stop-color="#71811d"/><stop offset="0.4464" stop-color="#996924"/><stop offset="0.5268" stop-color="#993518"/><stop offset="0.5426" stop-color="#992e17"/><stop offset="0.5442" stop-color="#992d17"/><stop offset="0.5457" stop-color="#991f2e"/><stop offset="0.6987" stop-color="#990018"/><stop offset="0.9369" stop-color="#990006"/><stop offset="0.9890" stop-color="#990005"/><stop offset="1.0000" stop-color="#990005"/></linearGradient><linearGradient id="co26" gradientUnits="userSpaceOnUse" x1="1017" y1="0" x2="1651" y2="0"><stop offset="0.0000" stop-color="#009948"/><stop offset="0.2382" stop-color="#02995d"/><stop offset="0.3612" stop-color="#23996c"/><stop offset="0.3722" stop-color="#27986c"/><stop offset="0.3738" stop-color="#747e20"/><stop offset="0.4543" stop-color="#996125"/><stop offset="0.5189" stop-color="#99381b"/><stop offset="0.5252" stop-color="#99341a"/><stop offset="0.5268" stop-color="#992435"/><stop offset="0.6798" stop-color="#99001c"/><stop offset="0.9763" stop-color="#990006"/><stop offset="1.0000" stop-color="#990005"/></linearGradient><linearGradient id="co27" gradientUnits="userSpaceOnUse" x1="1017" y1="0" x2="1651" y2="0"><stop offset="0.0000" stop-color="#00994d"/><stop offset="0.2382" stop-color="#029963"/><stop offset="0.3612" stop-color="#23946e"/><stop offset="0.3801" stop-color="#2b9370"/><stop offset="0.3817" stop-color="#2c9370"/><stop offset="0.3833" stop-color="#797a23"/><stop offset="0.4479" stop-color="#996429"/><stop offset="0.5000" stop-color="#99401f"/><stop offset="0.5047" stop-color="#993d1f"/><stop offset="0.5063" stop-color="#992a3c"/><stop offset="0.6593" stop-color="#990320"/><stop offset="0.9558" stop-color="#990007"/><stop offset="0.9984" stop-color="#990006"/><stop offset="1.0000" stop-color="#990006"/></linearGradient><linearGradient id="co28" gradientUnits="userSpaceOnUse" x1="1017" y1="0" x2="1651" y2="0"><stop offset="0.0000" stop-color="#009952"/><stop offset="0.2382" stop-color="#019869"/><stop offset="0.3612" stop-color="#249070"/><stop offset="0.3896" stop-color="#308e73"/><stop offset="0.3912" stop-color="#7d7727"/><stop offset="0.4432" stop-color="#99662c"/><stop offset="0.4858" stop-color="#994724"/><stop offset="0.4874" stop-color="#993145"/><stop offset="0.6104" stop-color="#990b2a"/><stop offset="0.7098" stop-color="#99001c"/><stop offset="0.9479" stop-color="#990008"/><stop offset="1.0000" stop-color="#990007"/></linearGradient><linearGradient id="co29" gradientUnits="userSpaceOnUse" x1="1017" y1="0" x2="1651" y2="0"><stop offset="0.0000" stop-color="#009958"/><stop offset="0.2382" stop-color="#01946a"/><stop offset="0.3612" stop-color="#248c73"/><stop offset="0.3959" stop-color="#348a77"/><stop offset="0.3975" stop-color="#358a77"/><stop offset="0.3991" stop-color="#82742b"/><stop offset="0.4416" stop-color="#99662f"/><stop offset="0.4653" stop-color="#99532a"/><stop offset="0.4669" stop-color="#995229"/><stop offset="0.4685" stop-color="#99394e"/><stop offset="0.5915" stop-color="#990e30"/><stop offset="0.6909" stop-color="#990020"/><stop offset="0.9874" stop-color="#990008"/><stop offset="1.0000" stop-color="#990007"/></linearGradient><linearGradient id="co30" gradientUnits="userSpaceOnUse" x1="1017" y1="0" x2="1651" y2="0"><stop offset="0.0000" stop-color="#00995d"/><stop offset="0.2382" stop-color="#01906c"/><stop offset="0.3612" stop-color="#258976"/><stop offset="0.4038" stop-color="#39877b"/><stop offset="0.4054" stop-color="#3a877b"/><stop offset="0.4069" stop-color="#87712f"/><stop offset="0.4416" stop-color="#996432"/><stop offset="0.4479" stop-color="#995f30"/><stop offset="0.4495" stop-color="#994259"/><stop offset="0.5489" stop-color="#99183b"/><stop offset="0.6719" stop-color="#990025"/><stop offset="0.9685" stop-color="#990009"/><stop offset="0.9968" stop-color="#990008"/><stop offset="1.0000" stop-color="#990008"/></linearGradient><linearGradient id="co31" gradientUnits="userSpaceOnUse" x1="1017" y1="0" x2="1651" y2="0"><stop offset="0.0000" stop-color="#009963"/><stop offset="0.2382" stop-color="#018c6e"/><stop offset="0.3612" stop-color="#258678"/><stop offset="0.4132" stop-color="#408380"/><stop offset="0.4148" stop-color="#8d6f34"/><stop offset="0.4274" stop-color="#966c37"/><stop offset="0.4290" stop-color="#976b37"/><stop offset="0.4306" stop-color="#984d64"/><stop offset="0.5300" stop-color="#991c43"/><stop offset="0.6530" stop-color="#99002a"/><stop offset="0.9495" stop-color="#99000a"/><stop offset="0.9921" stop-color="#990009"/><stop offset="1.0000" stop-color="#990009"/></linearGradient><linearGradient id="co32" gradientUnits="userSpaceOnUse" x1="1017" y1="0" x2="1651" y2="0"><stop offset="0.0000" stop-color="#009666"/><stop offset="0.2382" stop-color="#018870"/><stop offset="0.3612" stop-color="#26837b"/><stop offset="0.4132" stop-color="#418084"/><stop offset="0.4180" stop-color="#448085"/><stop offset="0.4196" stop-color="#924d6a"/><stop offset="0.4543" stop-color="#993c5f"/><stop offset="0.5536" stop-color="#991440"/><stop offset="0.6530" stop-color="#99002c"/><stop offset="0.9495" stop-color="#99000b"/><stop offset="0.9921" stop-color="#99000a"/><stop offset="1.0000" stop-color="#990009"/></linearGradient><linearGradient id="co33" gradientUnits="userSpaceOnUse" x1="1017" y1="0" x2="1651" y2="0"><stop offset="0.0000" stop-color="#009267"/><stop offset="0.2382" stop-color="#008572"/><stop offset="0.3612" stop-color="#26807e"/><stop offset="0.4132" stop-color="#437e88"/><stop offset="0.4148" stop-color="#447e88"/><stop offset="0.4164" stop-color="#914d6f"/><stop offset="0.4448" stop-color="#994067"/><stop offset="0.5442" stop-color="#991545"/><stop offset="0.6672" stop-color="#99002c"/><stop offset="0.9637" stop-color="#99000b"/><stop offset="0.9984" stop-color="#99000a"/><stop offset="1.0000" stop-color="#99000a"/></linearGradient><linearGradient id="co34" gradientUnits="userSpaceOnUse" x1="1017" y1="0" x2="1651" y2="0"><stop offset="0.0000" stop-color="#008e68"/><stop offset="0.2382" stop-color="#008274"/><stop offset="0.3612" stop-color="#277d82"/><stop offset="0.4132" stop-color="#447b8c"/><stop offset="0.4148" stop-color="#924d75"/><stop offset="0.4432" stop-color="#99406d"/><stop offset="0.5426" stop-color="#991449"/><stop offset="0.6420" stop-color="#990033"/><stop offset="0.9385" stop-color="#99000e"/><stop offset="0.9905" stop-color="#99000b"/><stop offset="1.0000" stop-color="#99000b"/></linearGradient><linearGradient id="co35" gradientUnits="userSpaceOnUse" x1="1017" y1="0" x2="1651" y2="0"><stop offset="0.0000" stop-color="#008b69"/><stop offset="0.2382" stop-color="#008076"/><stop offset="0.3612" stop-color="#277b85"/><stop offset="0.4038" stop-color="#3f798e"/><stop offset="0.4101" stop-color="#437990"/><stop offset="0.4117" stop-color="#914d7b"/><stop offset="0.4401" stop-color="#994073"/><stop offset="0.5394" stop-color="#99144d"/><stop offset="0.6388" stop-color="#990036"/><stop offset="0.9353" stop-color="#990010"/><stop offset="1.0000" stop-color="#99000b"/></linearGradient><linearGradient id="co36" gradientUnits="userSpaceOnUse" x1="1017" y1="0" x2="1651" y2="0"><stop offset="0.0000" stop-color="#00876a"/><stop offset="0.2382" stop-color="#007d78"/><stop offset="0.3612" stop-color="#287989"/><stop offset="0.4038" stop-color="#407793"/><stop offset="0.4085" stop-color="#447794"/><stop offset="0.4101" stop-color="#914d82"/><stop offset="0.4385" stop-color="#993f78"/><stop offset="0.5379" stop-color="#991351"/><stop offset="0.6372" stop-color="#990039"/><stop offset="0.9338" stop-color="#990011"/><stop offset="0.9984" stop-color="#99000c"/><stop offset="1.0000" stop-color="#99000c"/></linearGradient><linearGradient id="co37" gradientUnits="userSpaceOnUse" x1="1017" y1="0" x2="1651" y2="0"><stop offset="0.0000" stop-color="#00846c"/><stop offset="0.2382" stop-color="#007b7a"/><stop offset="0.3612" stop-color="#29768c"/><stop offset="0.4038" stop-color="#427597"/><stop offset="0.4069" stop-color="#447598"/><stop offset="0.4085" stop-color="#924d88"/><stop offset="0.4511" stop-color="#993576"/><stop offset="0.5505" stop-color="#990e50"/><stop offset="0.6309" stop-color="#99003c"/><stop offset="0.9274" stop-color="#990013"/><stop offset="0.9921" stop-color="#99000e"/><stop offset="1.0000" stop-color="#99000d"/></linearGradient><linearGradient id="co38" gradientUnits="userSpaceOnUse" x1="1017" y1="0" x2="1651" y2="0"><stop offset="0.0000" stop-color="#00816d"/><stop offset="0.2382" stop-color="#00787c"/><stop offset="0.3612" stop-color="#297490"/><stop offset="0.4038" stop-color="#417099"/><stop offset="0.4054" stop-color="#8e498b"/><stop offset="0.4479" stop-color="#99367c"/><stop offset="0.5473" stop-color="#990e54"/><stop offset="0.6278" stop-color="#990040"/><stop offset="0.9243" stop-color="#990015"/><stop offset="0.9890" stop-color="#99000f"/><stop offset="1.0000" stop-color="#99000e"/></linearGradient><linearGradient id="co39" gradientUnits="userSpaceOnUse" x1="1017" y1="0" x2="1651" y2="0"><stop offset="0.0000" stop-color="#007f6e"/><stop offset="0.2382" stop-color="#00767f"/><stop offset="0.3612" stop-color="#2a7394"/><stop offset="0.3959" stop-color="#3b6c99"/><stop offset="0.4022" stop-color="#3d6a99"/><stop offset="0.4038" stop-color="#8a458e"/><stop offset="0.4558" stop-color="#992f7d"/><stop offset="0.5789" stop-color="#99054e"/><stop offset="0.8170" stop-color="#990022"/><stop offset="0.9700" stop-color="#990012"/><stop offset="0.9984" stop-color="#990010"/><stop offset="1.0000" stop-color="#990010"/></linearGradient><linearGradient id="co40" gradientUnits="userSpaceOnUse" x1="1017" y1="0" x2="1651" y2="0"><stop offset="0.0000" stop-color="#007c6f"/><stop offset="0.2382" stop-color="#007481"/><stop offset="0.3375" stop-color="#1f7192"/><stop offset="0.3896" stop-color="#366899"/><stop offset="0.3991" stop-color="#3a6599"/><stop offset="0.4006" stop-color="#874190"/><stop offset="0.4527" stop-color="#992f83"/><stop offset="0.5757" stop-color="#990452"/><stop offset="0.8139" stop-color="#990025"/><stop offset="0.9669" stop-color="#990014"/><stop offset="0.9953" stop-color="#990011"/><stop offset="1.0000" stop-color="#990011"/></linearGradient><linearGradient id="co41" gradientUnits="userSpaceOnUse" x1="1017" y1="0" x2="1651" y2="0"><stop offset="0.0000" stop-color="#007a71"/><stop offset="0.2382" stop-color="#007284"/><stop offset="0.3612" stop-color="#296b99"/><stop offset="0.3959" stop-color="#366099"/><stop offset="0.3975" stop-color="#376099"/><stop offset="0.3991" stop-color="#843e93"/><stop offset="0.4637" stop-color="#992882"/><stop offset="0.5868" stop-color="#990152"/><stop offset="0.8249" stop-color="#990025"/><stop offset="0.9779" stop-color="#990014"/><stop offset="0.9968" stop-color="#990013"/><stop offset="1.0000" stop-color="#990012"/></linearGradient><linearGradient id="co42" gradientUnits="userSpaceOnUse" x1="1017" y1="0" x2="1651" y2="0"><stop offset="0.0000" stop-color="#007772"/><stop offset="0.2382" stop-color="#007186"/><stop offset="0.3375" stop-color="#1f6d99"/><stop offset="0.3896" stop-color="#325d99"/><stop offset="0.3959" stop-color="#345b99"/><stop offset="0.3975" stop-color="#813a96"/><stop offset="0.4621" stop-color="#992787"/><stop offset="0.5852" stop-color="#990056"/><stop offset="0.8233" stop-color="#990027"/><stop offset="0.9763" stop-color="#990016"/><stop offset="1.0000" stop-color="#990014"/></linearGradient><linearGradient id="co43" gradientUnits="userSpaceOnUse" x1="1017" y1="0" x2="1651" y2="0"><stop offset="0.0000" stop-color="#007573"/><stop offset="0.2382" stop-color="#006f89"/><stop offset="0.3375" stop-color="#1e6799"/><stop offset="0.3896" stop-color="#305899"/><stop offset="0.3927" stop-color="#315799"/><stop offset="0.3943" stop-color="#7e3899"/><stop offset="0.4748" stop-color="#991f85"/><stop offset="0.5741" stop-color="#99015c"/><stop offset="0.8123" stop-color="#99002a"/><stop offset="0.9653" stop-color="#990018"/><stop offset="1.0000" stop-color="#990015"/></linearGradient><linearGradient id="co44" gradientUnits="userSpaceOnUse" x1="1017" y1="0" x2="1651" y2="0"><stop offset="0.0000" stop-color="#007375"/><stop offset="0.2382" stop-color="#006d8c"/><stop offset="0.3186" stop-color="#176799"/><stop offset="0.3833" stop-color="#2c5599"/><stop offset="0.3912" stop-color="#2f5299"/><stop offset="0.3927" stop-color="#793599"/><stop offset="0.4732" stop-color="#991e8a"/><stop offset="0.5726" stop-color="#990060"/><stop offset="0.7634" stop-color="#990034"/><stop offset="0.9543" stop-color="#99001b"/><stop offset="0.9968" stop-color="#990017"/><stop offset="1.0000" stop-color="#990016"/></linearGradient><linearGradient id="co45" gradientUnits="userSpaceOnUse" x1="1017" y1="0" x2="1651" y2="0"><stop offset="0.0000" stop-color="#007276"/><stop offset="0.2382" stop-color="#006c8f"/><stop offset="0.3186" stop-color="#166299"/><stop offset="0.3833" stop-color="#2b5099"/><stop offset="0.3880" stop-color="#2c4f99"/><stop offset="0.3896" stop-color="#733299"/><stop offset="0.4700" stop-color="#951c8d"/><stop offset="0.5694" stop-color="#990064"/><stop offset="0.7603" stop-color="#990036"/><stop offset="0.9984" stop-color="#990018"/><stop offset="1.0000" stop-color="#990018"/></linearGradient><linearGradient id="co46" gradientUnits="userSpaceOnUse" x1="1017" y1="0" x2="1651" y2="0"><stop offset="0.0000" stop-color="#007078"/><stop offset="0.2382" stop-color="#006a92"/><stop offset="0.3186" stop-color="#155d99"/><stop offset="0.3833" stop-color="#294c99"/><stop offset="0.3864" stop-color="#2a4b99"/><stop offset="0.3880" stop-color="#6e3099"/><stop offset="0.4685" stop-color="#931a90"/><stop offset="0.5489" stop-color="#99026f"/><stop offset="0.7397" stop-color="#99003c"/><stop offset="0.9779" stop-color="#99001b"/><stop offset="0.9968" stop-color="#990019"/><stop offset="1.0000" stop-color="#990019"/></linearGradient><linearGradient id="co47" gradientUnits="userSpaceOnUse" x1="1017" y1="0" x2="1651" y2="0"><stop offset="0.0000" stop-color="#006e79"/><stop offset="0.2382" stop-color="#006995"/><stop offset="0.3612" stop-color="#214d99"/><stop offset="0.3849" stop-color="#294799"/><stop offset="0.3864" stop-color="#6a2d99"/><stop offset="0.4669" stop-color="#901893"/><stop offset="0.5189" stop-color="#990980"/><stop offset="0.5836" stop-color="#990066"/><stop offset="0.7744" stop-color="#990038"/><stop offset="0.9653" stop-color="#99001e"/><stop offset="1.0000" stop-color="#99001a"/></linearGradient><linearGradient id="co48" gradientUnits="userSpaceOnUse" x1="1017" y1="0" x2="1651" y2="0"><stop offset="0.0000" stop-color="#006d7b"/><stop offset="0.2382" stop-color="#006898"/><stop offset="0.3612" stop-color="#204999"/><stop offset="0.3801" stop-color="#264499"/><stop offset="0.3817" stop-color="#264499"/><stop offset="0.3833" stop-color="#652b99"/><stop offset="0.4637" stop-color="#8d1796"/><stop offset="0.5158" stop-color="#990886"/><stop offset="0.5962" stop-color="#990065"/><stop offset="0.7871" stop-color="#990038"/><stop offset="0.9779" stop-color="#99001e"/><stop offset="0.9968" stop-color="#99001c"/><stop offset="1.0000" stop-color="#99001c"/></linearGradient><linearGradient id="co49" gradientUnits="userSpaceOnUse" x1="1017" y1="0" x2="1651" y2="0"><stop offset="0.0000" stop-color="#006b7c"/><stop offset="0.2382" stop-color="#006499"/><stop offset="0.3612" stop-color="#1f4599"/><stop offset="0.3801" stop-color="#244199"/><stop offset="0.3817" stop-color="#602999"/><stop offset="0.4811" stop-color="#901094"/><stop offset="0.5331" stop-color="#990282"/><stop offset="0.6861" stop-color="#99004f"/><stop offset="0.9826" stop-color="#99001f"/><stop offset="0.9984" stop-color="#99001d"/><stop offset="1.0000" stop-color="#99001d"/></linearGradient><linearGradient id="co50" gradientUnits="userSpaceOnUse" x1="1017" y1="0" x2="1651" y2="0"><stop offset="0.0000" stop-color="#006a7e"/><stop offset="0.2382" stop-color="#006099"/><stop offset="0.3612" stop-color="#1e4299"/><stop offset="0.3770" stop-color="#223e99"/><stop offset="0.3785" stop-color="#233d99"/><stop offset="0.3801" stop-color="#5c2799"/><stop offset="0.4795" stop-color="#8e0e97"/><stop offset="0.5315" stop-color="#990187"/><stop offset="0.6845" stop-color="#990052"/><stop offset="0.9811" stop-color="#990021"/><stop offset="1.0000" stop-color="#99001f"/></linearGradient><linearGradient id="co51" gradientUnits="userSpaceOnUse" x1="1017" y1="0" x2="1651" y2="0"><stop offset="0.0000" stop-color="#006880"/><stop offset="0.1909" stop-color="#006598"/><stop offset="0.2713" stop-color="#045499"/><stop offset="0.3707" stop-color="#203c99"/><stop offset="0.3754" stop-color="#213b99"/><stop offset="0.3770" stop-color="#582599"/><stop offset="0.5000" stop-color="#920795"/><stop offset="0.5804" stop-color="#990075"/><stop offset="0.7713" stop-color="#990041"/><stop offset="0.9621" stop-color="#990024"/><stop offset="0.9968" stop-color="#990020"/><stop offset="1.0000" stop-color="#990020"/></linearGradient><linearGradient id="co52" gradientUnits="userSpaceOnUse" x1="1017" y1="0" x2="1651" y2="0"><stop offset="0.0000" stop-color="#006781"/><stop offset="0.1909" stop-color="#006299"/><stop offset="0.2713" stop-color="#045099"/><stop offset="0.3707" stop-color="#1f3899"/><stop offset="0.3738" stop-color="#1f3899"/><stop offset="0.3754" stop-color="#542399"/><stop offset="0.4984" stop-color="#900698"/><stop offset="0.5631" stop-color="#990080"/><stop offset="0.7161" stop-color="#990050"/><stop offset="0.9543" stop-color="#990027"/><stop offset="0.9968" stop-color="#990022"/><stop offset="1.0000" stop-color="#990022"/></linearGradient><linearGradient id="co53" gradientUnits="userSpaceOnUse" x1="1017" y1="0" x2="1651" y2="0"><stop offset="0.0000" stop-color="#006683"/><stop offset="0.1909" stop-color="#005e99"/><stop offset="0.2713" stop-color="#044c99"/><stop offset="0.3707" stop-color="#1e3599"/><stop offset="0.3722" stop-color="#502299"/><stop offset="0.5252" stop-color="#960094"/><stop offset="0.6782" stop-color="#99005c"/><stop offset="0.9164" stop-color="#99002e"/><stop offset="0.9968" stop-color="#990023"/><stop offset="1.0000" stop-color="#990023"/></linearGradient><linearGradient id="co54" gradientUnits="userSpaceOnUse" x1="1017" y1="0" x2="1651" y2="0"><stop offset="0.0000" stop-color="#006585"/><stop offset="0.1530" stop-color="#006299"/><stop offset="0.2760" stop-color="#044899"/><stop offset="0.3565" stop-color="#193599"/><stop offset="0.3691" stop-color="#1c3299"/><stop offset="0.3707" stop-color="#4d2099"/><stop offset="0.5237" stop-color="#940097"/><stop offset="0.7145" stop-color="#990055"/><stop offset="0.9527" stop-color="#99002a"/><stop offset="0.9953" stop-color="#990025"/><stop offset="1.0000" stop-color="#990025"/></linearGradient><linearGradient id="co55" gradientUnits="userSpaceOnUse" x1="1017" y1="0" x2="1651" y2="0"><stop offset="0.0000" stop-color="#006486"/><stop offset="0.1530" stop-color="#005e99"/><stop offset="0.2760" stop-color="#044499"/><stop offset="0.3565" stop-color="#183299"/><stop offset="0.3675" stop-color="#1b3099"/><stop offset="0.3691" stop-color="#491e99"/><stop offset="0.5221" stop-color="#900099"/><stop offset="0.5868" stop-color="#990082"/><stop offset="0.7776" stop-color="#990049"/><stop offset="0.9685" stop-color="#99002a"/><stop offset="0.9968" stop-color="#990026"/><stop offset="1.0000" stop-color="#990026"/></linearGradient><linearGradient id="co56" gradientUnits="userSpaceOnUse" x1="1017" y1="0" x2="1651" y2="0"><stop offset="0.0000" stop-color="#006288"/><stop offset="0.1530" stop-color="#005a99"/><stop offset="0.2760" stop-color="#044199"/><stop offset="0.3565" stop-color="#172f99"/><stop offset="0.3644" stop-color="#192e99"/><stop offset="0.3659" stop-color="#451d99"/><stop offset="0.5189" stop-color="#8a0099"/><stop offset="0.5710" stop-color="#99008d"/><stop offset="0.7240" stop-color="#990058"/><stop offset="0.9621" stop-color="#99002c"/><stop offset="0.9968" stop-color="#990028"/><stop offset="1.0000" stop-color="#990028"/></linearGradient><linearGradient id="co57" gradientUnits="userSpaceOnUse" x1="1017" y1="0" x2="1651" y2="0"><stop offset="0.0000" stop-color="#00618a"/><stop offset="0.1230" stop-color="#005d99"/><stop offset="0.2760" stop-color="#043e99"/><stop offset="0.3565" stop-color="#172d99"/><stop offset="0.3628" stop-color="#182b99"/><stop offset="0.3644" stop-color="#421b99"/><stop offset="0.5174" stop-color="#860099"/><stop offset="0.5694" stop-color="#990092"/><stop offset="0.7224" stop-color="#99005b"/><stop offset="0.9606" stop-color="#99002e"/><stop offset="0.9953" stop-color="#99002a"/><stop offset="1.0000" stop-color="#990029"/></linearGradient><linearGradient id="co58" gradientUnits="userSpaceOnUse" x1="1017" y1="0" x2="1651" y2="0"><stop offset="0.0000" stop-color="#00608c"/><stop offset="0.1230" stop-color="#005999"/><stop offset="0.2760" stop-color="#033b99"/><stop offset="0.3565" stop-color="#162a99"/><stop offset="0.3596" stop-color="#172999"/><stop offset="0.3612" stop-color="#3f1a99"/><stop offset="0.4842" stop-color="#720099"/><stop offset="0.5647" stop-color="#980097"/><stop offset="0.7177" stop-color="#99005f"/><stop offset="0.9558" stop-color="#990031"/><stop offset="0.9984" stop-color="#99002b"/><stop offset="1.0000" stop-color="#99002b"/></linearGradient><linearGradient id="co59" gradientUnits="userSpaceOnUse" x1="1017" y1="0" x2="1651" y2="0"><stop offset="0.0000" stop-color="#005f8e"/><stop offset="0.1230" stop-color="#005699"/><stop offset="0.2760" stop-color="#033899"/><stop offset="0.3565" stop-color="#152799"/><stop offset="0.3580" stop-color="#162799"/><stop offset="0.3596" stop-color="#3c1899"/><stop offset="0.4826" stop-color="#6e0099"/><stop offset="0.5820" stop-color="#990095"/><stop offset="0.7350" stop-color="#99005e"/><stop offset="0.9732" stop-color="#990030"/><stop offset="0.9968" stop-color="#99002d"/><stop offset="1.0000" stop-color="#99002c"/></linearGradient><linearGradient id="co60" gradientUnits="userSpaceOnUse" x1="1017" y1="0" x2="1651" y2="0"><stop offset="0.0000" stop-color="#005f90"/><stop offset="0.0994" stop-color="#005799"/><stop offset="0.2902" stop-color="#063299"/><stop offset="0.3549" stop-color="#142599"/><stop offset="0.3565" stop-color="#152599"/><stop offset="0.3580" stop-color="#391799"/><stop offset="0.4811" stop-color="#6a0099"/><stop offset="0.5804" stop-color="#980099"/><stop offset="0.7334" stop-color="#990061"/><stop offset="0.9716" stop-color="#990032"/><stop offset="1.0000" stop-color="#99002e"/></linearGradient><linearGradient id="co61" gradientUnits="userSpaceOnUse" x1="1017" y1="0" x2="1651" y2="0"><stop offset="0.0000" stop-color="#005e92"/><stop offset="0.1230" stop-color="#004f99"/><stop offset="0.2760" stop-color="#023399"/><stop offset="0.3407" stop-color="#112699"/><stop offset="0.3533" stop-color="#132399"/><stop offset="0.3549" stop-color="#361699"/><stop offset="0.4779" stop-color="#660099"/><stop offset="0.6009" stop-color="#990094"/><stop offset="0.7539" stop-color="#99005e"/><stop offset="0.9921" stop-color="#990031"/><stop offset="1.0000" stop-color="#990030"/></linearGradient><linearGradient id="co62" gradientUnits="userSpaceOnUse" x1="1017" y1="0" x2="1651" y2="0"><stop offset="0.0000" stop-color="#005d94"/><stop offset="0.2382" stop-color="#003799"/><stop offset="0.3375" stop-color="#0f2499"/><stop offset="0.3502" stop-color="#122299"/><stop offset="0.3517" stop-color="#122199"/><stop offset="0.3533" stop-color="#341599"/><stop offset="0.4763" stop-color="#620099"/><stop offset="0.5994" stop-color="#980099"/><stop offset="0.7524" stop-color="#990061"/><stop offset="0.9905" stop-color="#990033"/><stop offset="1.0000" stop-color="#990031"/></linearGradient><linearGradient id="co63" gradientUnits="userSpaceOnUse" x1="1017" y1="0" x2="1651" y2="0"><stop offset="0.0000" stop-color="#005c97"/><stop offset="0.2382" stop-color="#003599"/><stop offset="0.3375" stop-color="#0f2299"/><stop offset="0.3502" stop-color="#121f99"/><stop offset="0.3517" stop-color="#311399"/><stop offset="0.4748" stop-color="#5e0099"/><stop offset="0.5978" stop-color="#940099"/><stop offset="0.7886" stop-color="#99005b"/><stop offset="0.9795" stop-color="#990036"/><stop offset="0.9984" stop-color="#990033"/><stop offset="1.0000" stop-color="#990033"/></linearGradient><linearGradient id="co64" gradientUnits="userSpaceOnUse" x1="1017" y1="0" x2="1651" y2="0"><stop offset="0.0000" stop-color="#005b99"/><stop offset="0.2382" stop-color="#003299"/><stop offset="0.3375" stop-color="#0e2099"/><stop offset="0.3470" stop-color="#101e99"/><stop offset="0.3486" stop-color="#2e1299"/><stop offset="0.4716" stop-color="#5a0099"/><stop offset="0.6246" stop-color="#990096"/><stop offset="0.7776" stop-color="#990060"/><stop offset="0.9685" stop-color="#990039"/><stop offset="0.9968" stop-color="#990035"/><stop offset="1.0000" stop-color="#990035"/></linearGradient><linearGradient id="co65" gradientUnits="userSpaceOnUse" x1="1017" y1="0" x2="1651" y2="0"><stop offset="0.0000" stop-color="#005899"/><stop offset="0.2965" stop-color="#062599"/><stop offset="0.3391" stop-color="#0e1d99"/><stop offset="0.3454" stop-color="#101c99"/><stop offset="0.3470" stop-color="#2c1199"/><stop offset="0.4700" stop-color="#570099"/><stop offset="0.6230" stop-color="#960098"/><stop offset="0.8139" stop-color="#99005a"/><stop offset="0.9669" stop-color="#99003c"/><stop offset="0.9953" stop-color="#990037"/><stop offset="1.0000" stop-color="#990036"/></linearGradient><linearGradient id="co66" gradientUnits="userSpaceOnUse" x1="1017" y1="0" x2="1651" y2="0"><stop offset="0.0000" stop-color="#005599"/><stop offset="0.2965" stop-color="#052399"/><stop offset="0.3391" stop-color="#0e1b99"/><stop offset="0.3423" stop-color="#0e1b99"/><stop offset="0.3438" stop-color="#291099"/><stop offset="0.4669" stop-color="#530099"/><stop offset="0.6199" stop-color="#920099"/><stop offset="0.7003" stop-color="#99007e"/><stop offset="0.8912" stop-color="#99004b"/><stop offset="0.9905" stop-color="#99003a"/><stop offset="1.0000" stop-color="#990038"/></linearGradient><linearGradient id="co67" gradientUnits="userSpaceOnUse" x1="1017" y1="0" x2="1651" y2="0"><stop offset="0.0000" stop-color="#005399"/><stop offset="0.2965" stop-color="#052199"/><stop offset="0.3391" stop-color="#0d1999"/><stop offset="0.3407" stop-color="#0e1999"/><stop offset="0.3423" stop-color="#270f99"/><stop offset="0.4653" stop-color="#500099"/><stop offset="0.6562" stop-color="#990094"/><stop offset="0.8091" stop-color="#990060"/><stop offset="1.0000" stop-color="#99003a"/></linearGradient><linearGradient id="co68" gradientUnits="userSpaceOnUse" x1="1017" y1="0" x2="1651" y2="0"><stop offset="0.0000" stop-color="#005099"/><stop offset="0.2965" stop-color="#051f99"/><stop offset="0.3391" stop-color="#0d1799"/><stop offset="0.3407" stop-color="#250e99"/><stop offset="0.4637" stop-color="#4d0099"/><stop offset="0.6546" stop-color="#960096"/><stop offset="0.8454" stop-color="#99005a"/><stop offset="0.9984" stop-color="#99003c"/><stop offset="1.0000" stop-color="#99003c"/></linearGradient><linearGradient id="co69" gradientUnits="userSpaceOnUse" x1="1017" y1="0" x2="1651" y2="0"><stop offset="0.0000" stop-color="#004d99"/><stop offset="0.2965" stop-color="#041d99"/><stop offset="0.3312" stop-color="#0b1799"/><stop offset="0.3360" stop-color="#0c1699"/><stop offset="0.3375" stop-color="#220e99"/><stop offset="0.4606" stop-color="#4a0099"/><stop offset="0.6514" stop-color="#930098"/><stop offset="0.7744" stop-color="#99006f"/><stop offset="0.9653" stop-color="#990043"/><stop offset="1.0000" stop-color="#99003e"/></linearGradient><linearGradient id="co70" gradientUnits="userSpaceOnUse" x1="1017" y1="0" x2="1651" y2="0"><stop offset="0.0000" stop-color="#004b99"/><stop offset="0.2965" stop-color="#041b99"/><stop offset="0.3312" stop-color="#0b1599"/><stop offset="0.3344" stop-color="#0b1499"/><stop offset="0.3360" stop-color="#200d99"/><stop offset="0.4590" stop-color="#470099"/><stop offset="0.6498" stop-color="#8f0099"/><stop offset="0.7303" stop-color="#990081"/><stop offset="0.9211" stop-color="#99004e"/><stop offset="0.9858" stop-color="#990042"/><stop offset="0.9984" stop-color="#990040"/><stop offset="1.0000" stop-color="#99003f"/></linearGradient><linearGradient id="co71" gradientUnits="userSpaceOnUse" x1="1017" y1="0" x2="1651" y2="0"><stop offset="0.0000" stop-color="#004899"/><stop offset="0.2965" stop-color="#041999"/><stop offset="0.3312" stop-color="#0a1399"/><stop offset="0.3328" stop-color="#1e0c99"/><stop offset="0.4558" stop-color="#440099"/><stop offset="0.6467" stop-color="#8a0099"/><stop offset="0.7114" stop-color="#99008c"/><stop offset="0.9022" stop-color="#990054"/><stop offset="0.9826" stop-color="#990044"/><stop offset="0.9984" stop-color="#990042"/><stop offset="1.0000" stop-color="#990041"/></linearGradient><linearGradient id="co72" gradientUnits="userSpaceOnUse" x1="1017" y1="0" x2="1651" y2="0"><stop offset="0.0000" stop-color="#004699"/><stop offset="0.2965" stop-color="#041799"/><stop offset="0.3249" stop-color="#091399"/><stop offset="0.3297" stop-color="#0a1299"/><stop offset="0.3312" stop-color="#1c0b99"/><stop offset="0.4543" stop-color="#410099"/><stop offset="0.6924" stop-color="#950094"/><stop offset="0.9306" stop-color="#990050"/><stop offset="0.9953" stop-color="#990044"/><stop offset="1.0000" stop-color="#990043"/></linearGradient><linearGradient id="co73" gradientUnits="userSpaceOnUse" x1="1017" y1="0" x2="1651" y2="0"><stop offset="0.0000" stop-color="#004399"/><stop offset="0.2965" stop-color="#031699"/><stop offset="0.3249" stop-color="#081199"/><stop offset="0.3281" stop-color="#091099"/><stop offset="0.3297" stop-color="#1a0a99"/><stop offset="0.4527" stop-color="#3e0099"/><stop offset="0.6909" stop-color="#920096"/><stop offset="0.7902" stop-color="#990077"/><stop offset="0.9811" stop-color="#990049"/><stop offset="1.0000" stop-color="#990045"/></linearGradient><linearGradient id="co74" gradientUnits="userSpaceOnUse" x1="1017" y1="0" x2="1651" y2="0"><stop offset="0.0000" stop-color="#004199"/><stop offset="0.2965" stop-color="#031499"/><stop offset="0.3249" stop-color="#080f99"/><stop offset="0.3265" stop-color="#180999"/><stop offset="0.4495" stop-color="#3b0099"/><stop offset="0.6877" stop-color="#8f0098"/><stop offset="0.7681" stop-color="#990082"/><stop offset="0.9590" stop-color="#99004f"/><stop offset="0.9937" stop-color="#990048"/><stop offset="1.0000" stop-color="#990047"/></linearGradient><linearGradient id="co75" gradientUnits="userSpaceOnUse" x1="1017" y1="0" x2="1651" y2="0"><stop offset="0.0000" stop-color="#003f99"/><stop offset="0.2965" stop-color="#031299"/><stop offset="0.3202" stop-color="#070e99"/><stop offset="0.3233" stop-color="#080e99"/><stop offset="0.3249" stop-color="#160899"/><stop offset="0.4479" stop-color="#390099"/><stop offset="0.6861" stop-color="#8c0099"/><stop offset="0.7666" stop-color="#990086"/><stop offset="0.9574" stop-color="#990052"/><stop offset="1.0000" stop-color="#990049"/></linearGradient><linearGradient id="co76" gradientUnits="userSpaceOnUse" x1="1017" y1="0" x2="1651" y2="0"><stop offset="0.0000" stop-color="#003d99"/><stop offset="0.2965" stop-color="#031199"/><stop offset="0.3202" stop-color="#070d99"/><stop offset="0.3218" stop-color="#140899"/><stop offset="0.4448" stop-color="#360099"/><stop offset="0.6830" stop-color="#870099"/><stop offset="0.7634" stop-color="#99008b"/><stop offset="0.9543" stop-color="#990054"/><stop offset="0.9968" stop-color="#99004c"/><stop offset="1.0000" stop-color="#99004b"/></linearGradient><linearGradient id="co77" gradientUnits="userSpaceOnUse" x1="1017" y1="0" x2="1651" y2="0"><stop offset="0.0000" stop-color="#003a99"/><stop offset="0.2965" stop-color="#030f99"/><stop offset="0.3155" stop-color="#060c99"/><stop offset="0.3186" stop-color="#060c99"/><stop offset="0.3202" stop-color="#120799"/><stop offset="0.4732" stop-color="#3d0099"/><stop offset="0.7114" stop-color="#8d0097"/><stop offset="0.7918" stop-color="#990084"/><stop offset="0.9826" stop-color="#990051"/><stop offset="0.9984" stop-color="#99004e"/><stop offset="1.0000" stop-color="#99004d"/></linearGradient><linearGradient id="co78" gradientUnits="userSpaceOnUse" x1="1017" y1="0" x2="1651" y2="0"><stop offset="0.0000" stop-color="#003899"/><stop offset="0.2965" stop-color="#020e99"/><stop offset="0.3155" stop-color="#050b99"/><stop offset="0.3170" stop-color="#060a99"/><stop offset="0.3186" stop-color="#110699"/><stop offset="0.5095" stop-color="#460099"/><stop offset="0.7003" stop-color="#870099"/><stop offset="0.7997" stop-color="#990085"/><stop offset="0.9905" stop-color="#990051"/><stop offset="1.0000" stop-color="#990050"/></linearGradient><linearGradient id="co79" gradientUnits="userSpaceOnUse" x1="1017" y1="0" x2="1651" y2="0"><stop offset="0.0000" stop-color="#003699"/><stop offset="0.2965" stop-color="#020c99"/><stop offset="0.3123" stop-color="#050a99"/><stop offset="0.3186" stop-color="#100599"/><stop offset="0.6151" stop-color="#650099"/><stop offset="0.7382" stop-color="#8e0095"/><stop offset="0.8186" stop-color="#990081"/><stop offset="0.9716" stop-color="#990058"/><stop offset="1.0000" stop-color="#990052"/></linearGradient><linearGradient id="co80" gradientUnits="userSpaceOnUse" x1="1017" y1="0" x2="1651" y2="0"><stop offset="0.0000" stop-color="#003599"/><stop offset="0.2965" stop-color="#020b99"/><stop offset="0.3123" stop-color="#040899"/><stop offset="0.3155" stop-color="#0e0599"/><stop offset="0.6120" stop-color="#610099"/><stop offset="0.7350" stop-color="#8b0097"/><stop offset="0.8155" stop-color="#990086"/><stop offset="0.9685" stop-color="#99005b"/><stop offset="0.9968" stop-color="#990055"/><stop offset="1.0000" stop-color="#990054"/></linearGradient><linearGradient id="co81" gradientUnits="userSpaceOnUse" x1="1017" y1="0" x2="1651" y2="0"><stop offset="0.0000" stop-color="#003399"/><stop offset="0.2965" stop-color="#020999"/><stop offset="0.3091" stop-color="#040799"/><stop offset="0.3186" stop-color="#0d0399"/><stop offset="0.6151" stop-color="#600099"/><stop offset="0.7382" stop-color="#8a0097"/><stop offset="0.8375" stop-color="#990082"/><stop offset="0.9905" stop-color="#990058"/><stop offset="1.0000" stop-color="#990056"/></linearGradient><linearGradient id="co82" gradientUnits="userSpaceOnUse" x1="1017" y1="0" x2="1651" y2="0"><stop offset="0.0000" stop-color="#003199"/><stop offset="0.2965" stop-color="#020899"/><stop offset="0.3076" stop-color="#030699"/><stop offset="0.3139" stop-color="#0b0399"/><stop offset="0.6104" stop-color="#5c0099"/><stop offset="0.7634" stop-color="#8d0094"/><stop offset="0.8438" stop-color="#990083"/><stop offset="0.9968" stop-color="#990059"/><stop offset="1.0000" stop-color="#990058"/></linearGradient><linearGradient id="co83" gradientUnits="userSpaceOnUse" x1="1017" y1="0" x2="1651" y2="0"><stop offset="0.0000" stop-color="#002f99"/><stop offset="0.2965" stop-color="#010799"/><stop offset="0.4196" stop-color="#240099"/><stop offset="0.7161" stop-color="#7d0099"/><stop offset="0.8391" stop-color="#990088"/><stop offset="0.9921" stop-color="#99005d"/><stop offset="1.0000" stop-color="#99005b"/></linearGradient><linearGradient id="co84" gradientUnits="userSpaceOnUse" x1="1017" y1="0" x2="1651" y2="0"><stop offset="0.0000" stop-color="#002d99"/><stop offset="0.2965" stop-color="#010599"/><stop offset="0.6672" stop-color="#690099"/><stop offset="0.7902" stop-color="#8e0092"/><stop offset="0.8707" stop-color="#990081"/><stop offset="0.9937" stop-color="#99005f"/><stop offset="1.0000" stop-color="#99005d"/></linearGradient><linearGradient id="co85" gradientUnits="userSpaceOnUse" x1="1017" y1="0" x2="1651" y2="0"><stop offset="0.0000" stop-color="#002c99"/><stop offset="0.2965" stop-color="#010499"/><stop offset="0.6672" stop-color="#660099"/><stop offset="0.7902" stop-color="#8b0093"/><stop offset="0.8707" stop-color="#990084"/><stop offset="0.9937" stop-color="#990061"/><stop offset="1.0000" stop-color="#990060"/></linearGradient><linearGradient id="co86" gradientUnits="userSpaceOnUse" x1="1017" y1="0" x2="1651" y2="0"><stop offset="0.0000" stop-color="#002a99"/><stop offset="0.2965" stop-color="#010399"/><stop offset="0.6672" stop-color="#640099"/><stop offset="0.7902" stop-color="#890095"/><stop offset="0.8896" stop-color="#990081"/><stop offset="0.9890" stop-color="#990065"/><stop offset="1.0000" stop-color="#990062"/></linearGradient><linearGradient id="co87" gradientUnits="userSpaceOnUse" x1="1017" y1="0" x2="1651" y2="0"><stop offset="0.0000" stop-color="#002899"/><stop offset="0.2965" stop-color="#010299"/><stop offset="0.6672" stop-color="#610099"/><stop offset="0.7902" stop-color="#870096"/><stop offset="0.8896" stop-color="#990084"/><stop offset="0.9890" stop-color="#990067"/><stop offset="1.0000" stop-color="#990065"/></linearGradient><linearGradient id="co88" gradientUnits="userSpaceOnUse" x1="1017" y1="0" x2="1651" y2="0"><stop offset="0.0000" stop-color="#002799"/><stop offset="0.2965" stop-color="#010099"/><stop offset="0.6672" stop-color="#5f0099"/><stop offset="0.8202" stop-color="#8b0092"/><stop offset="0.9196" stop-color="#99007e"/><stop offset="1.0000" stop-color="#990067"/></linearGradient><linearGradient id="co89" gradientUnits="userSpaceOnUse" x1="1017" y1="0" x2="1651" y2="0"><stop offset="0.0000" stop-color="#002599"/><stop offset="0.2965" stop-color="#010099"/><stop offset="0.6672" stop-color="#5c0099"/><stop offset="0.8202" stop-color="#890093"/><stop offset="0.9196" stop-color="#990081"/><stop offset="1.0000" stop-color="#99006a"/></linearGradient><linearGradient id="co90" gradientUnits="userSpaceOnUse" x1="1017" y1="0" x2="1651" y2="0"><stop offset="0.0000" stop-color="#002499"/><stop offset="0.2965" stop-color="#000099"/><stop offset="0.6672" stop-color="#5a0099"/><stop offset="0.8202" stop-color="#870094"/><stop offset="0.9196" stop-color="#990085"/><stop offset="1.0000" stop-color="#99006d"/></linearGradient><linearGradient id="co91" gradientUnits="userSpaceOnUse" x1="1017" y1="0" x2="1651" y2="0"><stop offset="0.0000" stop-color="#002299"/><stop offset="0.2965" stop-color="#000099"/><stop offset="0.6672" stop-color="#580099"/><stop offset="0.8202" stop-color="#850096"/><stop offset="0.9432" stop-color="#990080"/><stop offset="0.9953" stop-color="#990071"/><stop offset="1.0000" stop-color="#99006f"/></linearGradient><linearGradient id="co92" gradientUnits="userSpaceOnUse" x1="1017" y1="0" x2="1651" y2="0"><stop offset="0.0000" stop-color="#002199"/><stop offset="0.2965" stop-color="#000099"/><stop offset="0.6672" stop-color="#560099"/><stop offset="0.8202" stop-color="#830097"/><stop offset="0.9432" stop-color="#990083"/><stop offset="0.9953" stop-color="#990073"/><stop offset="1.0000" stop-color="#990072"/></linearGradient><linearGradient id="co93" gradientUnits="userSpaceOnUse" x1="1017" y1="0" x2="1651" y2="0"><stop offset="0.0000" stop-color="#001f99"/><stop offset="0.2965" stop-color="#000099"/><stop offset="0.5931" stop-color="#400099"/><stop offset="0.8312" stop-color="#830096"/><stop offset="0.9543" stop-color="#990083"/><stop offset="0.9968" stop-color="#990076"/><stop offset="1.0000" stop-color="#990075"/></linearGradient><linearGradient id="co94" gradientUnits="userSpaceOnUse" x1="1017" y1="0" x2="1651" y2="0"><stop offset="0.0000" stop-color="#001e99"/><stop offset="0.2965" stop-color="#000099"/><stop offset="0.5931" stop-color="#3e0099"/><stop offset="0.8312" stop-color="#810097"/><stop offset="0.9543" stop-color="#990086"/><stop offset="0.9968" stop-color="#990079"/><stop offset="1.0000" stop-color="#990078"/></linearGradient><linearGradient id="co95" gradientUnits="userSpaceOnUse" x1="1017" y1="0" x2="1651" y2="0"><stop offset="0.0000" stop-color="#001d99"/><stop offset="0.2965" stop-color="#000099"/><stop offset="0.5931" stop-color="#3c0099"/><stop offset="0.8312" stop-color="#7f0098"/><stop offset="0.9842" stop-color="#990080"/><stop offset="1.0000" stop-color="#99007b"/></linearGradient><linearGradient id="co96" gradientUnits="userSpaceOnUse" x1="1017" y1="0" x2="1651" y2="0"><stop offset="0.0000" stop-color="#001c99"/><stop offset="0.2965" stop-color="#000099"/><stop offset="0.5347" stop-color="#2d0099"/><stop offset="0.8312" stop-color="#7d0099"/><stop offset="0.9842" stop-color="#990083"/><stop offset="1.0000" stop-color="#99007e"/></linearGradient><linearGradient id="co97" gradientUnits="userSpaceOnUse" x1="1017" y1="0" x2="1651" y2="0"><stop offset="0.0000" stop-color="#001b99"/><stop offset="0.2965" stop-color="#000099"/><stop offset="0.5347" stop-color="#2b0099"/><stop offset="0.8312" stop-color="#7a0099"/><stop offset="0.9842" stop-color="#990087"/><stop offset="1.0000" stop-color="#990081"/></linearGradient><linearGradient id="co98" gradientUnits="userSpaceOnUse" x1="1017" y1="0" x2="1651" y2="0"><stop offset="0.0000" stop-color="#001a99"/><stop offset="0.2382" stop-color="#000099"/><stop offset="0.3912" stop-color="#0b0099"/><stop offset="0.7618" stop-color="#630099"/><stop offset="0.8849" stop-color="#830094"/><stop offset="0.9842" stop-color="#970088"/><stop offset="1.0000" stop-color="#990085"/></linearGradient><linearGradient id="co99" gradientUnits="userSpaceOnUse" x1="1017" y1="0" x2="1651" y2="0"><stop offset="0.0000" stop-color="#001999"/><stop offset="0.2382" stop-color="#000099"/><stop offset="0.3912" stop-color="#0b0099"/><stop offset="0.7618" stop-color="#600099"/><stop offset="0.9148" stop-color="#860091"/><stop offset="0.9953" stop-color="#970088"/><stop offset="1.0000" stop-color="#980087"/></linearGradient><linearGradient id="co100" gradientUnits="userSpaceOnUse" x1="1017" y1="0" x2="1651" y2="0"><stop offset="0.0000" stop-color="#001899"/><stop offset="0.2382" stop-color="#000099"/><stop offset="0.3912" stop-color="#0b0099"/><stop offset="0.7618" stop-color="#5e0099"/><stop offset="0.9148" stop-color="#840092"/><stop offset="0.9953" stop-color="#950089"/><stop offset="1.0000" stop-color="#960088"/></linearGradient><linearGradient id="co101" gradientUnits="userSpaceOnUse" x1="1017" y1="0" x2="1651" y2="0"><stop offset="0.0000" stop-color="#001799"/><stop offset="0.2382" stop-color="#000099"/><stop offset="0.3912" stop-color="#0b0099"/><stop offset="0.7618" stop-color="#5c0099"/><stop offset="0.9148" stop-color="#820093"/><stop offset="0.9953" stop-color="#920089"/><stop offset="1.0000" stop-color="#930089"/></linearGradient><linearGradient id="co102" gradientUnits="userSpaceOnUse" x1="1017" y1="0" x2="1651" y2="0"><stop offset="0.0000" stop-color="#001699"/><stop offset="0.2382" stop-color="#000099"/><stop offset="0.3912" stop-color="#0a0099"/><stop offset="0.7618" stop-color="#5a0099"/><stop offset="0.9148" stop-color="#800093"/><stop offset="0.9953" stop-color="#90008a"/><stop offset="1.0000" stop-color="#91008a"/></linearGradient><linearGradient id="co103" gradientUnits="userSpaceOnUse" x1="1017" y1="0" x2="1651" y2="0"><stop offset="0.0000" stop-color="#001699"/><stop offset="0.2382" stop-color="#000099"/><stop offset="0.3912" stop-color="#0a0099"/><stop offset="0.6877" stop-color="#450099"/><stop offset="0.9259" stop-color="#800093"/><stop offset="0.9905" stop-color="#8d008c"/><stop offset="1.0000" stop-color="#8e008b"/></linearGradient><linearGradient id="co104" gradientUnits="userSpaceOnUse" x1="1017" y1="0" x2="1651" y2="0"><stop offset="0.0000" stop-color="#001599"/><stop offset="0.2382" stop-color="#000099"/><stop offset="0.3912" stop-color="#0a0099"/><stop offset="0.6877" stop-color="#430099"/><stop offset="0.9259" stop-color="#7e0094"/><stop offset="0.9905" stop-color="#8a008c"/><stop offset="1.0000" stop-color="#8c008b"/></linearGradient><linearGradient id="co105" gradientUnits="userSpaceOnUse" x1="1017" y1="0" x2="1651" y2="0"><stop offset="0.0000" stop-color="#001499"/><stop offset="0.2382" stop-color="#000099"/><stop offset="0.3912" stop-color="#0a0099"/><stop offset="0.6877" stop-color="#420099"/><stop offset="0.9259" stop-color="#7d0095"/><stop offset="0.9905" stop-color="#88008d"/><stop offset="1.0000" stop-color="#8a008c"/></linearGradient><linearGradient id="co106" gradientUnits="userSpaceOnUse" x1="1017" y1="0" x2="1651" y2="0"><stop offset="0.0000" stop-color="#001399"/><stop offset="0.2382" stop-color="#000099"/><stop offset="0.3912" stop-color="#0a0099"/><stop offset="0.6293" stop-color="#330099"/><stop offset="0.9259" stop-color="#7b0096"/><stop offset="0.9905" stop-color="#86008e"/><stop offset="1.0000" stop-color="#88008d"/></linearGradient><linearGradient id="co107" gradientUnits="userSpaceOnUse" x1="1017" y1="0" x2="1651" y2="0"><stop offset="0.0000" stop-color="#001299"/><stop offset="0.2382" stop-color="#000099"/><stop offset="0.3912" stop-color="#090099"/><stop offset="0.6293" stop-color="#310099"/><stop offset="0.9259" stop-color="#790097"/><stop offset="0.9905" stop-color="#84008f"/><stop offset="1.0000" stop-color="#86008e"/></linearGradient><linearGradient id="co108" gradientUnits="userSpaceOnUse" x1="1017" y1="0" x2="1651" y2="0"><stop offset="0.0000" stop-color="#001299"/><stop offset="0.2382" stop-color="#000099"/><stop offset="0.3912" stop-color="#090099"/><stop offset="0.6293" stop-color="#300099"/><stop offset="0.9259" stop-color="#780098"/><stop offset="0.9905" stop-color="#820090"/><stop offset="1.0000" stop-color="#84008f"/></linearGradient><linearGradient id="co109" gradientUnits="userSpaceOnUse" x1="1017" y1="0" x2="1651" y2="0"><stop offset="0.0000" stop-color="#001199"/><stop offset="0.2382" stop-color="#000099"/><stop offset="0.3912" stop-color="#090099"/><stop offset="0.6293" stop-color="#2f0099"/><stop offset="0.9259" stop-color="#760099"/><stop offset="0.9905" stop-color="#800091"/><stop offset="1.0000" stop-color="#820090"/></linearGradient><linearGradient id="co110" gradientUnits="userSpaceOnUse" x1="1017" y1="0" x2="1651" y2="0"><stop offset="0.0000" stop-color="#001099"/><stop offset="0.2382" stop-color="#000099"/><stop offset="0.3912" stop-color="#090099"/><stop offset="0.6293" stop-color="#2d0099"/><stop offset="0.9259" stop-color="#740099"/><stop offset="0.9905" stop-color="#7e0092"/><stop offset="1.0000" stop-color="#800090"/></linearGradient><linearGradient id="co111" gradientUnits="userSpaceOnUse" x1="1017" y1="0" x2="1651" y2="0"><stop offset="0.0000" stop-color="#000f99"/><stop offset="0.1909" stop-color="#000099"/><stop offset="0.3817" stop-color="#070099"/><stop offset="0.6199" stop-color="#2a0099"/><stop offset="0.9164" stop-color="#6f0099"/><stop offset="0.9968" stop-color="#7e0092"/><stop offset="1.0000" stop-color="#7e0091"/></linearGradient><linearGradient id="co112" gradientUnits="userSpaceOnUse" x1="1017" y1="0" x2="1651" y2="0"><stop offset="0.0000" stop-color="#000f99"/><stop offset="0.1909" stop-color="#000099"/><stop offset="0.3817" stop-color="#070099"/><stop offset="0.6199" stop-color="#290099"/><stop offset="0.9164" stop-color="#6c0099"/><stop offset="0.9968" stop-color="#7c0092"/><stop offset="1.0000" stop-color="#7c0092"/></linearGradient><linearGradient id="co113" gradientUnits="userSpaceOnUse" x1="1017" y1="0" x2="1651" y2="0"><stop offset="0.0000" stop-color="#000e99"/><stop offset="0.1909" stop-color="#000099"/><stop offset="0.3817" stop-color="#070099"/><stop offset="0.6199" stop-color="#270099"/><stop offset="0.9905" stop-color="#790094"/><stop offset="1.0000" stop-color="#7b0093"/></linearGradient><linearGradient id="co114" gradientUnits="userSpaceOnUse" x1="1017" y1="0" x2="1651" y2="0"><stop offset="0.0000" stop-color="#000d99"/><stop offset="0.1909" stop-color="#000099"/><stop offset="0.3817" stop-color="#070099"/><stop offset="0.6199" stop-color="#260099"/><stop offset="0.9905" stop-color="#770095"/><stop offset="1.0000" stop-color="#790094"/></linearGradient><linearGradient id="co115" gradientUnits="userSpaceOnUse" x1="1017" y1="0" x2="1651" y2="0"><stop offset="0.0000" stop-color="#000c99"/><stop offset="0.1909" stop-color="#000099"/><stop offset="0.3817" stop-color="#070099"/><stop offset="0.6199" stop-color="#250099"/><stop offset="0.9905" stop-color="#760096"/><stop offset="1.0000" stop-color="#770095"/></linearGradient><linearGradient id="co116" gradientUnits="userSpaceOnUse" x1="1017" y1="0" x2="1651" y2="0"><stop offset="0.0000" stop-color="#000c99"/><stop offset="0.1909" stop-color="#000099"/><stop offset="0.3817" stop-color="#070099"/><stop offset="0.6782" stop-color="#2f0099"/><stop offset="0.9748" stop-color="#720099"/><stop offset="0.9984" stop-color="#750096"/><stop offset="1.0000" stop-color="#760096"/></linearGradient><linearGradient id="co117" gradientUnits="userSpaceOnUse" x1="1017" y1="0" x2="1651" y2="0"><stop offset="0.0000" stop-color="#000b99"/><stop offset="0.1909" stop-color="#000099"/><stop offset="0.3817" stop-color="#060099"/><stop offset="0.6782" stop-color="#2d0099"/><stop offset="0.9748" stop-color="#700099"/><stop offset="0.9984" stop-color="#740097"/><stop offset="1.0000" stop-color="#740096"/></linearGradient><linearGradient id="co118" gradientUnits="userSpaceOnUse" x1="1017" y1="0" x2="1651" y2="0"><stop offset="0.0000" stop-color="#000a99"/><stop offset="0.1909" stop-color="#000099"/><stop offset="0.3817" stop-color="#060099"/><stop offset="0.6782" stop-color="#2c0099"/><stop offset="0.9748" stop-color="#6e0099"/><stop offset="0.9984" stop-color="#720097"/><stop offset="1.0000" stop-color="#730097"/></linearGradient></defs><rect x="1017" y="125" width="634" height="4" fill="url(#co0)"/><rect x="1017" y="129" width="634" height="4" fill="url(#co1)"/><rect x="1017" y="133" width="634" height="4" fill="url(#co2)"/><rect x="1017" y="137" width="634" height="4" fill="url(#co3)"/><rect x="1017" y="141" width="634" height="4" fill="url(#co4)"/><rect x="1017" y="145" width="634" height="4" fill="url(#co5)"/><rect x="1017" y="149" width="634" height="4" fill="url(#co6)"/><rect x="1017" y="153" width="634" height="4" fill="url(#co7)"/><rect x="1017" y="157" width="634" height="4" fill="url(#co8)"/><rect x="1017" y="161" width="634" height="4" fill="url(#co9)"/><rect x="1017" y="165" width="634" height="4" fill="url(#co10)"/><rect x="1017" y="169" width="634" height="4" fill="url(#co11)"/><rect x="1017" y="173" width="634" height="4" fill="url(#co12)"/><rect x="1017" y="177" width="634" height="4" fill="url(#co13)"/><rect x="1017" y="181" width="634" height="4" fill="url(#co14)"/><rect x="1017" y="185" width="634" height="4" fill="url(#co15)"/><rect x="1017" y="189" width="634" height="4" fill="url(#co16)"/><rect x="1017" y="193" width="634" height="4" fill="url(#co17)"/><rect x="1017" y="197" width="634" height="4" fill="url(#co18)"/><rect x="1017" y="201" width="634" height="4" fill="url(#co19)"/><rect x="1017" y="205" width="634" height="4" fill="url(#co20)"/><rect x="1017" y="209" width="634" height="4" fill="url(#co21)"/><rect x="1017" y="213" width="634" height="4" fill="url(#co22)"/><rect x="1017" y="217" width="634" height="4" fill="url(#co23)"/><rect x="1017" y="221" width="634" height="4" fill="url(#co24)"/><rect x="1017" y="225" width="634" height="4" fill="url(#co25)"/><rect x="1017" y="229" width="634" height="4" fill="url(#co26)"/><rect x="1017" y="233" width="634" height="4" fill="url(#co27)"/><rect x="1017" y="237" width="634" height="4" fill="url(#co28)"/><rect x="1017" y="241" width="634" height="4" fill="url(#co29)"/><rect x="1017" y="245" width="634" height="4" fill="url(#co30)"/><rect x="1017" y="249" width="634" height="4" fill="url(#co31)"/><rect x="1017" y="253" width="634" height="4" fill="url(#co32)"/><rect x="1017" y="257" width="634" height="4" fill="url(#co33)"/><rect x="1017" y="261" width="634" height="4" fill="url(#co34)"/><rect x="1017" y="265" width="634" height="4" fill="url(#co35)"/><rect x="1017" y="269" width="634" height="4" fill="url(#co36)"/><rect x="1017" y="273" width="634" height="4" fill="url(#co37)"/><rect x="1017" y="277" width="634" height="4" fill="url(#co38)"/><rect x="1017" y="281" width="634" height="4" fill="url(#co39)"/><rect x="1017" y="285" width="634" height="4" fill="url(#co40)"/><rect x="1017" y="289" width="634" height="4" fill="url(#co41)"/><rect x="1017" y="293" width="634" height="4" fill="url(#co42)"/><rect x="1017" y="297" width="634" height="4" fill="url(#co43)"/><rect x="1017" y="301" width="634" height="4" fill="url(#co44)"/><rect x="1017" y="305" width="634" height="4" fill="url(#co45)"/><rect x="1017" y="309" width="634" height="4" fill="url(#co46)"/><rect x="1017" y="313" width="634" height="4" fill="url(#co47)"/><rect x="1017" y="317" width="634" height="4" fill="url(#co48)"/><rect x="1017" y="321" width="634" height="4" fill="url(#co49)"/><rect x="1017" y="325" width="634" height="4" fill="url(#co50)"/><rect x="1017" y="329" width="634" height="4" fill="url(#co51)"/><rect x="1017" y="333" width="634" height="4" fill="url(#co52)"/><rect x="1017" y="337" width="634" height="4" fill="url(#co53)"/><rect x="1017" y="341" width="634" height="4" fill="url(#co54)"/><rect x="1017" y="345" width="634" height="4" fill="url(#co55)"/><rect x="1017" y="349" width="634" height="4" fill="url(#co56)"/><rect x="1017" y="353" width="634" height="4" fill="url(#co57)"/><rect x="1017" y="357" width="634" height="4" fill="url(#co58)"/><rect x="1017" y="361" width="634" height="4" fill="url(#co59)"/><rect x="1017" y="365" width="634" height="4" fill="url(#co60)"/><rect x="1017" y="369" width="634" height="4" fill="url(#co61)"/><rect x="1017" y="373" width="634" height="4" fill="url(#co62)"/><rect x="1017" y="377" width="634" height="4" fill="url(#co63)"/><rect x="1017" y="381" width="634" height="4" fill="url(#co64)"/><rect x="1017" y="385" width="634" height="4" fill="url(#co65)"/><rect x="1017" y="389" width="634" height="4" fill="url(#co66)"/><rect x="1017" y="393" width="634" height="4" fill="url(#co67)"/><rect x="1017" y="397" width="634" height="4" fill="url(#co68)"/><rect x="1017" y="401" width="634" height="4" fill="url(#co69)"/><rect x="1017" y="405" width="634" height="4" fill="url(#co70)"/><rect x="1017" y="409" width="634" height="4" fill="url(#co71)"/><rect x="1017" y="413" width="634" height="4" fill="url(#co72)"/><rect x="1017" y="417" width="634" height="4" fill="url(#co73)"/><rect x="1017" y="421" width="634" height="4" fill="url(#co74)"/><rect x="1017" y="425" width="634" height="4" fill="url(#co75)"/><rect x="1017" y="429" width="634" height="4" fill="url(#co76)"/><rect x="1017" y="433" width="634" height="4" fill="url(#co77)"/><rect x="1017" y="437" width="634" height="4" fill="url(#co78)"/><rect x="1017" y="441" width="634" height="4" fill="url(#co79)"/><rect x="1017" y="445" width="634" height="4" fill="url(#co80)"/><rect x="1017" y="449" width="634" height="4" fill="url(#co81)"/><rect x="1017" y="453" width="634" height="4" fill="url(#co82)"/><rect x="1017" y="457" width="634" height="4" fill="url(#co83)"/><rect x="1017" y="461" width="634" height="4" fill="url(#co84)"/><rect x="1017" y="465" width="634" height="4" fill="url(#co85)"/><rect x="1017" y="469" width="634" height="4" fill="url(#co86)"/><rect x="1017" y="473" width="634" height="4" fill="url(#co87)"/><rect x="1017" y="477" width="634" height="4" fill="url(#co88)"/><rect x="1017" y="481" width="634" height="4" fill="url(#co89)"/><rect x="1017" y="485" width="634" height="4" fill="url(#co90)"/><rect x="1017" y="489" width="634" height="4" fill="url(#co91)"/><rect x="1017" y="493" width="634" height="4" fill="url(#co92)"/><rect x="1017" y="497" width="634" height="4" fill="url(#co93)"/><rect x="1017" y="501" width="634" height="4" fill="url(#co94)"/><rect x="1017" y="505" width="634" height="4" fill="url(#co95)"/><rect x="1017" y="509" width="634" height="4" fill="url(#co96)"/><rect x="1017" y="513" width="634" height="4" fill="url(#co97)"/><rect x="1017" y="517" width="634" height="4" fill="url(#co98)"/><rect x="1017" y="521" width="634" height="4" fill="url(#co99)"/><rect x="1017" y="525" width="634" height="4" fill="url(#co100)"/><rect x="1017" y="529" width="634" height="4" fill="url(#co101)"/><rect x="1017" y="533" width="634" height="4" fill="url(#co102)"/><rect x="1017" y="537" width="634" height="4" fill="url(#co103)"/><rect x="1017" y="541" width="634" height="4" fill="url(#co104)"/><rect x="1017" y="545" width="634" height="4" fill="url(#co105)"/><rect x="1017" y="549" width="634" height="4" fill="url(#co106)"/><rect x="1017" y="553" width="634" height="4" fill="url(#co107)"/><rect x="1017" y="557" width="634" height="4" fill="url(#co108)"/><rect x="1017" y="561" width="634" height="4" fill="url(#co109)"/><rect x="1017" y="565" width="634" height="4" fill="url(#co110)"/><rect x="1017" y="569" width="634" height="4" fill="url(#co111)"/><rect x="1017" y="573" width="634" height="4" fill="url(#co112)"/><rect x="1017" y="577" width="634" height="4" fill="url(#co113)"/><rect x="1017" y="581" width="634" height="4" fill="url(#co114)"/><rect x="1017" y="585" width="634" height="4" fill="url(#co115)"/><rect x="1017" y="589" width="634" height="4" fill="url(#co116)"/><rect x="1017" y="593" width="634" height="4" fill="url(#co117)"/><rect x="1017" y="597" width="634" height="3" fill="url(#co118)"/></g><g clip-path="url(#tri)"><defs><linearGradient id="ci0" gradientUnits="userSpaceOnUse" x1="1149" y1="0" x2="1498" y2="0"><stop offset="0.0000" stop-color="#00ff00"/><stop offset="0.1175" stop-color="#6aff00"/><stop offset="0.2350" stop-color="#f2ff00"/><stop offset="0.2493" stop-color="#fff900"/><stop offset="0.3123" stop-color="#ffb700"/><stop offset="0.4069" stop-color="#ff7b00"/><stop offset="0.5530" stop-color="#ff4700"/><stop offset="0.8309" stop-color="#ff1700"/><stop offset="0.9771" stop-color="#ff0800"/><stop offset="1.0000" stop-color="#ff0600"/></linearGradient><linearGradient id="ci1" gradientUnits="userSpaceOnUse" x1="1149" y1="0" x2="1498" y2="0"><stop offset="0.0000" stop-color="#00ff03"/><stop offset="0.1175" stop-color="#6aff00"/><stop offset="0.2350" stop-color="#f3ff00"/><stop offset="0.2493" stop-color="#fff800"/><stop offset="0.3123" stop-color="#ffb700"/><stop offset="0.4069" stop-color="#ff7b00"/><stop offset="0.5530" stop-color="#ff4700"/><stop offset="0.8309" stop-color="#ff1600"/><stop offset="0.9771" stop-color="#ff0800"/><stop offset="1.0000" stop-color="#ff0600"/></linearGradient><linearGradient id="ci2" gradientUnits="userSpaceOnUse" x1="1149" y1="0" x2="1498" y2="0"><stop offset="0.0000" stop-color="#00ff07"/><stop offset="0.1175" stop-color="#6aff00"/><stop offset="0.2350" stop-color="#f4ff00"/><stop offset="0.2493" stop-color="#fff700"/><stop offset="0.3123" stop-color="#ffb600"/><stop offset="0.4069" stop-color="#ff7a00"/><stop offset="0.5530" stop-color="#ff4600"/><stop offset="0.8309" stop-color="#ff1600"/><stop offset="0.9771" stop-color="#ff0800"/><stop offset="1.0000" stop-color="#ff0600"/></linearGradient><linearGradient id="ci3" gradientUnits="userSpaceOnUse" x1="1149" y1="0" x2="1498" y2="0"><stop offset="0.0000" stop-color="#00ff0c"/><stop offset="0.1175" stop-color="#69ff04"/><stop offset="0.2350" stop-color="#f4ff00"/><stop offset="0.2493" stop-color="#fff600"/><stop offset="0.3123" stop-color="#ffb500"/><stop offset="0.4069" stop-color="#ff7900"/><stop offset="0.5530" stop-color="#ff4500"/><stop offset="0.8309" stop-color="#ff1500"/><stop offset="0.9771" stop-color="#ff0700"/><stop offset="1.0000" stop-color="#ff0500"/></linearGradient><linearGradient id="ci4" gradientUnits="userSpaceOnUse" x1="1149" y1="0" x2="1498" y2="0"><stop offset="0.0000" stop-color="#00ff10"/><stop offset="0.0946" stop-color="#52ff0a"/><stop offset="0.2120" stop-color="#d7ff01"/><stop offset="0.2464" stop-color="#fff900"/><stop offset="0.3095" stop-color="#ffb700"/><stop offset="0.4040" stop-color="#ff7a00"/><stop offset="0.5501" stop-color="#ff4600"/><stop offset="0.8281" stop-color="#ff1500"/><stop offset="0.9742" stop-color="#ff0700"/><stop offset="0.9971" stop-color="#ff0500"/><stop offset="1.0000" stop-color="#ff0500"/></linearGradient><linearGradient id="ci5" gradientUnits="userSpaceOnUse" x1="1149" y1="0" x2="1498" y2="0"><stop offset="0.0000" stop-color="#00ff15"/><stop offset="0.0774" stop-color="#40ff10"/><stop offset="0.1948" stop-color="#c1ff08"/><stop offset="0.2378" stop-color="#faff04"/><stop offset="0.3009" stop-color="#ffbd00"/><stop offset="0.3954" stop-color="#ff7d00"/><stop offset="0.5415" stop-color="#ff4700"/><stop offset="0.7650" stop-color="#ff1d00"/><stop offset="0.9885" stop-color="#ff0500"/><stop offset="1.0000" stop-color="#ff0400"/></linearGradient><linearGradient id="ci6" gradientUnits="userSpaceOnUse" x1="1149" y1="0" x2="1498" y2="0"><stop offset="0.0000" stop-color="#00ff19"/><stop offset="0.0516" stop-color="#28ff17"/><stop offset="0.1691" stop-color="#a2ff0f"/><stop offset="0.2321" stop-color="#f2ff0b"/><stop offset="0.2464" stop-color="#fff809"/><stop offset="0.3095" stop-color="#ffb503"/><stop offset="0.4040" stop-color="#ff7800"/><stop offset="0.5501" stop-color="#ff4400"/><stop offset="0.8281" stop-color="#ff1400"/><stop offset="0.9742" stop-color="#ff0600"/><stop offset="0.9971" stop-color="#ff0400"/><stop offset="1.0000" stop-color="#ff0400"/></linearGradient><linearGradient id="ci7" gradientUnits="userSpaceOnUse" x1="1149" y1="0" x2="1498" y2="0"><stop offset="0.0000" stop-color="#00ff1e"/><stop offset="0.0344" stop-color="#17ff1c"/><stop offset="0.1519" stop-color="#8eff16"/><stop offset="0.2292" stop-color="#efff11"/><stop offset="0.2436" stop-color="#fffb0f"/><stop offset="0.3066" stop-color="#ffb707"/><stop offset="0.4011" stop-color="#ff7900"/><stop offset="0.5473" stop-color="#ff4400"/><stop offset="0.8252" stop-color="#ff1400"/><stop offset="0.9713" stop-color="#ff0600"/><stop offset="1.0000" stop-color="#ff0400"/></linearGradient><linearGradient id="ci8" gradientUnits="userSpaceOnUse" x1="1149" y1="0" x2="1498" y2="0"><stop offset="0.0000" stop-color="#00ff23"/><stop offset="0.0229" stop-color="#0cff22"/><stop offset="0.1404" stop-color="#81ff1c"/><stop offset="0.2350" stop-color="#f8ff16"/><stop offset="0.2521" stop-color="#ffef14"/><stop offset="0.3152" stop-color="#ffaf0b"/><stop offset="0.4097" stop-color="#ff7403"/><stop offset="0.5559" stop-color="#ff4100"/><stop offset="0.8338" stop-color="#ff1300"/><stop offset="0.9799" stop-color="#ff0500"/><stop offset="1.0000" stop-color="#ff0300"/></linearGradient><linearGradient id="ci9" gradientUnits="userSpaceOnUse" x1="1149" y1="0" x2="1498" y2="0"><stop offset="0.0000" stop-color="#00ff27"/><stop offset="0.0229" stop-color="#0cff26"/><stop offset="0.1404" stop-color="#81ff21"/><stop offset="0.2350" stop-color="#f8ff1c"/><stop offset="0.2579" stop-color="#ffe718"/><stop offset="0.3352" stop-color="#ff9f0d"/><stop offset="0.4527" stop-color="#ff6104"/><stop offset="0.6332" stop-color="#ff3000"/><stop offset="0.9799" stop-color="#ff0400"/><stop offset="1.0000" stop-color="#ff0300"/></linearGradient><linearGradient id="ci10" gradientUnits="userSpaceOnUse" x1="1149" y1="0" x2="1498" y2="0"><stop offset="0.0000" stop-color="#00ff2c"/><stop offset="0.0229" stop-color="#0bff2b"/><stop offset="0.1404" stop-color="#81ff27"/><stop offset="0.2350" stop-color="#f9ff22"/><stop offset="0.2693" stop-color="#ffd91b"/><stop offset="0.3467" stop-color="#ff9610"/><stop offset="0.4642" stop-color="#ff5c06"/><stop offset="0.6447" stop-color="#ff2d00"/><stop offset="0.9914" stop-color="#ff0300"/><stop offset="1.0000" stop-color="#ff0200"/></linearGradient><linearGradient id="ci11" gradientUnits="userSpaceOnUse" x1="1149" y1="0" x2="1498" y2="0"><stop offset="0.0000" stop-color="#00ff31"/><stop offset="0.0229" stop-color="#0aff30"/><stop offset="0.1404" stop-color="#81ff2c"/><stop offset="0.2350" stop-color="#faff28"/><stop offset="0.3123" stop-color="#ffae19"/><stop offset="0.4069" stop-color="#ff730e"/><stop offset="0.5530" stop-color="#ff4004"/><stop offset="0.8309" stop-color="#ff1200"/><stop offset="0.9771" stop-color="#ff0400"/><stop offset="1.0000" stop-color="#ff0200"/></linearGradient><linearGradient id="ci12" gradientUnits="userSpaceOnUse" x1="1149" y1="0" x2="1498" y2="0"><stop offset="0.0000" stop-color="#00ff36"/><stop offset="0.0229" stop-color="#09ff35"/><stop offset="0.1404" stop-color="#81ff32"/><stop offset="0.2350" stop-color="#fbff2f"/><stop offset="0.3123" stop-color="#ffae1e"/><stop offset="0.4069" stop-color="#ff7211"/><stop offset="0.5530" stop-color="#ff4007"/><stop offset="0.8309" stop-color="#ff1100"/><stop offset="0.9771" stop-color="#ff0300"/><stop offset="1.0000" stop-color="#ff0200"/></linearGradient><linearGradient id="ci13" gradientUnits="userSpaceOnUse" x1="1149" y1="0" x2="1498" y2="0"><stop offset="0.0000" stop-color="#00ff3b"/><stop offset="0.0229" stop-color="#09ff3a"/><stop offset="0.1404" stop-color="#81ff38"/><stop offset="0.2350" stop-color="#fbff35"/><stop offset="0.3123" stop-color="#ffad22"/><stop offset="0.4069" stop-color="#ff7215"/><stop offset="0.5530" stop-color="#ff3f09"/><stop offset="0.8309" stop-color="#ff1100"/><stop offset="0.9771" stop-color="#ff0300"/><stop offset="1.0000" stop-color="#ff0100"/></linearGradient><linearGradient id="ci14" gradientUnits="userSpaceOnUse" x1="1149" y1="0" x2="1498" y2="0"><stop offset="0.0000" stop-color="#00ff40"/><stop offset="0.0229" stop-color="#08ff3f"/><stop offset="0.1404" stop-color="#81ff3d"/><stop offset="0.2350" stop-color="#fcff3c"/><stop offset="0.3123" stop-color="#ffac27"/><stop offset="0.4069" stop-color="#ff7118"/><stop offset="0.5530" stop-color="#ff3e0c"/><stop offset="0.8309" stop-color="#ff1000"/><stop offset="0.9771" stop-color="#ff0200"/><stop offset="1.0000" stop-color="#ff0100"/></linearGradient><linearGradient id="ci15" gradientUnits="userSpaceOnUse" x1="1149" y1="0" x2="1498" y2="0"><stop offset="0.0000" stop-color="#00ff45"/><stop offset="0.0229" stop-color="#07ff44"/><stop offset="0.1404" stop-color="#80ff43"/><stop offset="0.2350" stop-color="#fdff42"/><stop offset="0.2980" stop-color="#ffb72f"/><stop offset="0.3926" stop-color="#ff771e"/><stop offset="0.5387" stop-color="#ff410f"/><stop offset="0.7622" stop-color="#ff1804"/><stop offset="0.9857" stop-color="#ff0100"/><stop offset="1.0000" stop-color="#ff0000"/></linearGradient><linearGradient id="ci16" gradientUnits="userSpaceOnUse" x1="1149" y1="0" x2="1498" y2="0"><stop offset="0.0000" stop-color="#00ff4a"/><stop offset="0.0229" stop-color="#06ff4a"/><stop offset="0.1404" stop-color="#80ff49"/><stop offset="0.2350" stop-color="#feff49"/><stop offset="0.2980" stop-color="#ffb734"/><stop offset="0.3926" stop-color="#ff7621"/><stop offset="0.5387" stop-color="#ff4112"/><stop offset="0.7622" stop-color="#ff1706"/><stop offset="0.9857" stop-color="#ff0100"/><stop offset="1.0000" stop-color="#ff0000"/></linearGradient><linearGradient id="ci17" gradientUnits="userSpaceOnUse" x1="1149" y1="0" x2="1498" y2="0"><stop offset="0.0000" stop-color="#00ff4f"/><stop offset="0.0229" stop-color="#06ff4f"/><stop offset="0.1404" stop-color="#80ff4f"/><stop offset="0.2350" stop-color="#feff50"/><stop offset="0.2980" stop-color="#ffb639"/><stop offset="0.3926" stop-color="#ff7525"/><stop offset="0.5387" stop-color="#ff4014"/><stop offset="0.7622" stop-color="#ff1708"/><stop offset="0.9857" stop-color="#ff0101"/><stop offset="1.0000" stop-color="#ff0000"/></linearGradient><linearGradient id="ci18" gradientUnits="userSpaceOnUse" x1="1149" y1="0" x2="1498" y2="0"><stop offset="0.0000" stop-color="#00ff54"/><stop offset="0.0229" stop-color="#05ff54"/><stop offset="0.1404" stop-color="#80ff55"/><stop offset="0.2350" stop-color="#ffff56"/><stop offset="0.2980" stop-color="#ffb53e"/><stop offset="0.3926" stop-color="#ff7529"/><stop offset="0.5387" stop-color="#ff3f17"/><stop offset="0.7622" stop-color="#ff1609"/><stop offset="0.9857" stop-color="#ff0002"/><stop offset="1.0000" stop-color="#ff0002"/></linearGradient><linearGradient id="ci19" gradientUnits="userSpaceOnUse" x1="1149" y1="0" x2="1498" y2="0"><stop offset="0.0000" stop-color="#00ff59"/><stop offset="0.0229" stop-color="#04ff5a"/><stop offset="0.1404" stop-color="#80ff5c"/><stop offset="0.2350" stop-color="#fffe5d"/><stop offset="0.2980" stop-color="#ffb443"/><stop offset="0.3926" stop-color="#ff742c"/><stop offset="0.5387" stop-color="#ff3f1a"/><stop offset="0.7622" stop-color="#ff160b"/><stop offset="0.9857" stop-color="#ff0004"/><stop offset="1.0000" stop-color="#ff0003"/></linearGradient><linearGradient id="ci20" gradientUnits="userSpaceOnUse" x1="1149" y1="0" x2="1498" y2="0"><stop offset="0.0000" stop-color="#00ff5f"/><stop offset="0.0229" stop-color="#03ff5f"/><stop offset="0.1404" stop-color="#80ff62"/><stop offset="0.2350" stop-color="#fffd64"/><stop offset="0.2980" stop-color="#ffb348"/><stop offset="0.3926" stop-color="#ff7330"/><stop offset="0.5387" stop-color="#ff3e1c"/><stop offset="0.7622" stop-color="#ff150d"/><stop offset="0.9857" stop-color="#ff0005"/><stop offset="1.0000" stop-color="#ff0005"/></linearGradient><linearGradient id="ci21" gradientUnits="userSpaceOnUse" x1="1149" y1="0" x2="1498" y2="0"><stop offset="0.0000" stop-color="#00ff64"/><stop offset="0.0229" stop-color="#02ff65"/><stop offset="0.1404" stop-color="#80ff68"/><stop offset="0.2350" stop-color="#fffc6a"/><stop offset="0.2980" stop-color="#ffb24d"/><stop offset="0.3926" stop-color="#ff7234"/><stop offset="0.5387" stop-color="#ff3d1f"/><stop offset="0.7622" stop-color="#ff150f"/><stop offset="0.9857" stop-color="#ff0006"/><stop offset="1.0000" stop-color="#ff0006"/></linearGradient><linearGradient id="ci22" gradientUnits="userSpaceOnUse" x1="1149" y1="0" x2="1498" y2="0"><stop offset="0.0000" stop-color="#00ff6a"/><stop offset="0.0287" stop-color="#07ff6b"/><stop offset="0.1461" stop-color="#87ff6f"/><stop offset="0.2235" stop-color="#f1ff72"/><stop offset="0.2378" stop-color="#fff76f"/><stop offset="0.3009" stop-color="#ffaf51"/><stop offset="0.3954" stop-color="#ff7037"/><stop offset="0.5415" stop-color="#ff3c21"/><stop offset="0.8195" stop-color="#ff0d0e"/><stop offset="1.0000" stop-color="#ff0007"/></linearGradient><linearGradient id="ci23" gradientUnits="userSpaceOnUse" x1="1149" y1="0" x2="1498" y2="0"><stop offset="0.0000" stop-color="#00ff6f"/><stop offset="0.0287" stop-color="#06ff70"/><stop offset="0.1461" stop-color="#87ff75"/><stop offset="0.2235" stop-color="#f2ff7a"/><stop offset="0.2350" stop-color="#fffb78"/><stop offset="0.2980" stop-color="#ffb058"/><stop offset="0.3926" stop-color="#ff713c"/><stop offset="0.5387" stop-color="#ff3c24"/><stop offset="0.7622" stop-color="#ff1413"/><stop offset="0.9857" stop-color="#ff0009"/><stop offset="1.0000" stop-color="#ff0009"/></linearGradient><linearGradient id="ci24" gradientUnits="userSpaceOnUse" x1="1149" y1="0" x2="1498" y2="0"><stop offset="0.0000" stop-color="#00ff75"/><stop offset="0.0287" stop-color="#05ff76"/><stop offset="0.1461" stop-color="#86ff7c"/><stop offset="0.2235" stop-color="#f2ff81"/><stop offset="0.2350" stop-color="#fffa7f"/><stop offset="0.2980" stop-color="#ffb05d"/><stop offset="0.3926" stop-color="#ff703f"/><stop offset="0.5387" stop-color="#ff3b27"/><stop offset="0.8166" stop-color="#ff0d12"/><stop offset="0.9971" stop-color="#ff000a"/><stop offset="1.0000" stop-color="#ff000a"/></linearGradient><linearGradient id="ci25" gradientUnits="userSpaceOnUse" x1="1149" y1="0" x2="1498" y2="0"><stop offset="0.0000" stop-color="#00ff7a"/><stop offset="0.0287" stop-color="#04ff7c"/><stop offset="0.1461" stop-color="#86ff83"/><stop offset="0.2235" stop-color="#f3ff88"/><stop offset="0.2378" stop-color="#fff584"/><stop offset="0.3009" stop-color="#ffac61"/><stop offset="0.3954" stop-color="#ff6d43"/><stop offset="0.5415" stop-color="#ff3a29"/><stop offset="0.8195" stop-color="#ff0c13"/><stop offset="1.0000" stop-color="#ff000c"/></linearGradient><linearGradient id="ci26" gradientUnits="userSpaceOnUse" x1="1149" y1="0" x2="1498" y2="0"><stop offset="0.0000" stop-color="#00ff80"/><stop offset="0.0287" stop-color="#03ff82"/><stop offset="0.1461" stop-color="#86ff8a"/><stop offset="0.2235" stop-color="#f4ff90"/><stop offset="0.2378" stop-color="#fff48b"/><stop offset="0.3009" stop-color="#ffab66"/><stop offset="0.3954" stop-color="#ff6d46"/><stop offset="0.5415" stop-color="#ff392c"/><stop offset="0.8195" stop-color="#ff0b15"/><stop offset="1.0000" stop-color="#ff000d"/></linearGradient><linearGradient id="ci27" gradientUnits="userSpaceOnUse" x1="1149" y1="0" x2="1498" y2="0"><stop offset="0.0000" stop-color="#00ff86"/><stop offset="0.0287" stop-color="#02ff88"/><stop offset="0.1461" stop-color="#86ff90"/><stop offset="0.2235" stop-color="#f5ff98"/><stop offset="0.2350" stop-color="#fff794"/><stop offset="0.2980" stop-color="#ffad6d"/><stop offset="0.3926" stop-color="#ff6d4b"/><stop offset="0.5387" stop-color="#ff392f"/><stop offset="0.8166" stop-color="#ff0b17"/><stop offset="0.9971" stop-color="#ff000e"/><stop offset="1.0000" stop-color="#ff000e"/></linearGradient><linearGradient id="ci28" gradientUnits="userSpaceOnUse" x1="1149" y1="0" x2="1498" y2="0"><stop offset="0.0000" stop-color="#00ff8c"/><stop offset="0.0287" stop-color="#02ff8e"/><stop offset="0.1461" stop-color="#86ff98"/><stop offset="0.2235" stop-color="#f5ffa0"/><stop offset="0.2350" stop-color="#fff69b"/><stop offset="0.2980" stop-color="#ffac72"/><stop offset="0.3926" stop-color="#ff6c4f"/><stop offset="0.5387" stop-color="#ff3832"/><stop offset="0.8166" stop-color="#ff0b19"/><stop offset="0.9971" stop-color="#ff0010"/><stop offset="1.0000" stop-color="#ff0010"/></linearGradient><linearGradient id="ci29" gradientUnits="userSpaceOnUse" x1="1149" y1="0" x2="1498" y2="0"><stop offset="0.0000" stop-color="#00ff92"/><stop offset="0.0344" stop-color="#06ff94"/><stop offset="0.1519" stop-color="#8eff9f"/><stop offset="0.2292" stop-color="#fffea8"/><stop offset="0.2808" stop-color="#ffbc81"/><stop offset="0.3582" stop-color="#ff7e5e"/><stop offset="0.4756" stop-color="#ff4a3f"/><stop offset="0.6991" stop-color="#ff1923"/><stop offset="0.9771" stop-color="#ff0012"/><stop offset="1.0000" stop-color="#ff0011"/></linearGradient><linearGradient id="ci30" gradientUnits="userSpaceOnUse" x1="1149" y1="0" x2="1498" y2="0"><stop offset="0.0000" stop-color="#00ff98"/><stop offset="0.0344" stop-color="#05ff9b"/><stop offset="0.1519" stop-color="#8effa7"/><stop offset="0.2292" stop-color="#fffeb0"/><stop offset="0.2808" stop-color="#ffbb87"/><stop offset="0.3582" stop-color="#ff7d62"/><stop offset="0.4756" stop-color="#ff4942"/><stop offset="0.6991" stop-color="#ff1825"/><stop offset="0.9226" stop-color="#ff0016"/><stop offset="1.0000" stop-color="#ff0013"/></linearGradient><linearGradient id="ci31" gradientUnits="userSpaceOnUse" x1="1149" y1="0" x2="1498" y2="0"><stop offset="0.0000" stop-color="#00ff9e"/><stop offset="0.0344" stop-color="#05ffa1"/><stop offset="0.1519" stop-color="#8effae"/><stop offset="0.2292" stop-color="#fffdb7"/><stop offset="0.2808" stop-color="#ffba8d"/><stop offset="0.3582" stop-color="#ff7d67"/><stop offset="0.4756" stop-color="#ff4846"/><stop offset="0.6991" stop-color="#ff1827"/><stop offset="0.9226" stop-color="#ff0018"/><stop offset="1.0000" stop-color="#ff0014"/></linearGradient><linearGradient id="ci32" gradientUnits="userSpaceOnUse" x1="1149" y1="0" x2="1498" y2="0"><stop offset="0.0000" stop-color="#00ffa4"/><stop offset="0.0344" stop-color="#04ffa7"/><stop offset="0.1519" stop-color="#8effb5"/><stop offset="0.2292" stop-color="#fffcbf"/><stop offset="0.2808" stop-color="#ffb993"/><stop offset="0.3582" stop-color="#ff7c6b"/><stop offset="0.4756" stop-color="#ff4849"/><stop offset="0.6991" stop-color="#ff1729"/><stop offset="0.9226" stop-color="#ff0019"/><stop offset="1.0000" stop-color="#ff0015"/></linearGradient><linearGradient id="ci33" gradientUnits="userSpaceOnUse" x1="1149" y1="0" x2="1498" y2="0"><stop offset="0.0000" stop-color="#00ffaa"/><stop offset="0.0344" stop-color="#03ffae"/><stop offset="0.1289" stop-color="#6fffba"/><stop offset="0.2235" stop-color="#faffc9"/><stop offset="0.2865" stop-color="#ffb295"/><stop offset="0.3639" stop-color="#ff776d"/><stop offset="0.4814" stop-color="#ff454b"/><stop offset="0.7049" stop-color="#ff162b"/><stop offset="0.9284" stop-color="#ff001a"/><stop offset="0.9914" stop-color="#ff0017"/><stop offset="1.0000" stop-color="#ff0017"/></linearGradient><linearGradient id="ci34" gradientUnits="userSpaceOnUse" x1="1149" y1="0" x2="1498" y2="0"><stop offset="0.0000" stop-color="#00ffb1"/><stop offset="0.0344" stop-color="#02ffb4"/><stop offset="0.1289" stop-color="#6fffc1"/><stop offset="0.2235" stop-color="#faffd2"/><stop offset="0.2865" stop-color="#ffb19b"/><stop offset="0.3639" stop-color="#ff7672"/><stop offset="0.4814" stop-color="#ff444e"/><stop offset="0.7049" stop-color="#ff152d"/><stop offset="0.9284" stop-color="#ff001c"/><stop offset="0.9914" stop-color="#ff0019"/><stop offset="1.0000" stop-color="#ff0018"/></linearGradient><linearGradient id="ci35" gradientUnits="userSpaceOnUse" x1="1149" y1="0" x2="1498" y2="0"><stop offset="0.0000" stop-color="#00ffb7"/><stop offset="0.0344" stop-color="#01ffbb"/><stop offset="0.1289" stop-color="#6fffc9"/><stop offset="0.2235" stop-color="#fbffda"/><stop offset="0.2865" stop-color="#ffb0a1"/><stop offset="0.3639" stop-color="#ff7676"/><stop offset="0.4814" stop-color="#ff4351"/><stop offset="0.7049" stop-color="#ff142f"/><stop offset="0.9284" stop-color="#ff001e"/><stop offset="0.9914" stop-color="#ff001a"/><stop offset="1.0000" stop-color="#ff001a"/></linearGradient><linearGradient id="ci36" gradientUnits="userSpaceOnUse" x1="1149" y1="0" x2="1498" y2="0"><stop offset="0.0000" stop-color="#00ffbd"/><stop offset="0.0344" stop-color="#00ffc2"/><stop offset="0.1289" stop-color="#6effd1"/><stop offset="0.2235" stop-color="#fcffe3"/><stop offset="0.2865" stop-color="#ffafa7"/><stop offset="0.3639" stop-color="#ff757a"/><stop offset="0.4814" stop-color="#ff4354"/><stop offset="0.7049" stop-color="#ff1431"/><stop offset="0.9284" stop-color="#ff001f"/><stop offset="0.9914" stop-color="#ff001c"/><stop offset="1.0000" stop-color="#ff001b"/></linearGradient><linearGradient id="ci37" gradientUnits="userSpaceOnUse" x1="1149" y1="0" x2="1498" y2="0"><stop offset="0.0000" stop-color="#00ffc4"/><stop offset="0.0344" stop-color="#00ffc9"/><stop offset="0.1289" stop-color="#6effd8"/><stop offset="0.2235" stop-color="#fdffec"/><stop offset="0.2751" stop-color="#ffbab6"/><stop offset="0.3524" stop-color="#ff7a84"/><stop offset="0.4699" stop-color="#ff455b"/><stop offset="0.6504" stop-color="#ff1c39"/><stop offset="0.8739" stop-color="#ff0124"/><stop offset="0.9914" stop-color="#ff001d"/><stop offset="1.0000" stop-color="#ff001d"/></linearGradient><linearGradient id="ci38" gradientUnits="userSpaceOnUse" x1="1149" y1="0" x2="1498" y2="0"><stop offset="0.0000" stop-color="#00ffcb"/><stop offset="0.0344" stop-color="#00ffd0"/><stop offset="0.1289" stop-color="#6effe0"/><stop offset="0.2235" stop-color="#fefff6"/><stop offset="0.2751" stop-color="#ffb9bd"/><stop offset="0.3524" stop-color="#ff7a89"/><stop offset="0.4699" stop-color="#ff455e"/><stop offset="0.6504" stop-color="#ff1b3c"/><stop offset="0.8739" stop-color="#ff0026"/><stop offset="0.9914" stop-color="#ff001e"/><stop offset="1.0000" stop-color="#ff001e"/></linearGradient><linearGradient id="ci39" gradientUnits="userSpaceOnUse" x1="1149" y1="0" x2="1498" y2="0"><stop offset="0.0000" stop-color="#00ffd1"/><stop offset="0.0344" stop-color="#00ffd7"/><stop offset="0.1117" stop-color="#57ffe5"/><stop offset="0.2063" stop-color="#e1fffa"/><stop offset="0.2264" stop-color="#fffafb"/><stop offset="0.2779" stop-color="#ffb5c0"/><stop offset="0.3553" stop-color="#ff778c"/><stop offset="0.4728" stop-color="#ff4360"/><stop offset="0.6963" stop-color="#ff1338"/><stop offset="0.9198" stop-color="#ff0024"/><stop offset="0.9971" stop-color="#ff0020"/><stop offset="1.0000" stop-color="#ff001f"/></linearGradient><linearGradient id="ci40" gradientUnits="userSpaceOnUse" x1="1149" y1="0" x2="1498" y2="0"><stop offset="0.0000" stop-color="#00ffd8"/><stop offset="0.0430" stop-color="#05ffdf"/><stop offset="0.1375" stop-color="#79fff2"/><stop offset="0.2149" stop-color="#eaf8ff"/><stop offset="0.2321" stop-color="#fff0fb"/><stop offset="0.2837" stop-color="#ffaec2"/><stop offset="0.3610" stop-color="#ff728e"/><stop offset="0.4785" stop-color="#ff4062"/><stop offset="0.7020" stop-color="#ff123a"/><stop offset="0.9255" stop-color="#ff0026"/><stop offset="0.9885" stop-color="#ff0022"/><stop offset="1.0000" stop-color="#ff0021"/></linearGradient><linearGradient id="ci41" gradientUnits="userSpaceOnUse" x1="1149" y1="0" x2="1498" y2="0"><stop offset="0.0000" stop-color="#00ffdf"/><stop offset="0.0430" stop-color="#04ffe7"/><stop offset="0.1375" stop-color="#79fffb"/><stop offset="0.2321" stop-color="#fbebff"/><stop offset="0.2951" stop-color="#ffa2be"/><stop offset="0.3897" stop-color="#ff6285"/><stop offset="0.5358" stop-color="#ff3057"/><stop offset="0.8138" stop-color="#ff0430"/><stop offset="0.9943" stop-color="#ff0023"/><stop offset="1.0000" stop-color="#ff0022"/></linearGradient><linearGradient id="ci42" gradientUnits="userSpaceOnUse" x1="1149" y1="0" x2="1498" y2="0"><stop offset="0.0000" stop-color="#00ffe6"/><stop offset="0.0430" stop-color="#03ffee"/><stop offset="0.1375" stop-color="#77fbff"/><stop offset="0.2321" stop-color="#f3e2ff"/><stop offset="0.2464" stop-color="#ffd8f7"/><stop offset="0.3095" stop-color="#ff94b8"/><stop offset="0.4040" stop-color="#ff5b83"/><stop offset="0.5501" stop-color="#ff2c57"/><stop offset="0.8281" stop-color="#ff0230"/><stop offset="0.9742" stop-color="#ff0025"/><stop offset="0.9971" stop-color="#ff0024"/><stop offset="1.0000" stop-color="#ff0024"/></linearGradient><linearGradient id="ci43" gradientUnits="userSpaceOnUse" x1="1149" y1="0" x2="1498" y2="0"><stop offset="0.0000" stop-color="#00ffed"/><stop offset="0.0430" stop-color="#02fff6"/><stop offset="0.1203" stop-color="#5df7ff"/><stop offset="0.2378" stop-color="#f3d9ff"/><stop offset="0.2521" stop-color="#ffcff8"/><stop offset="0.3152" stop-color="#ff8fba"/><stop offset="0.4097" stop-color="#ff5784"/><stop offset="0.5559" stop-color="#ff2a58"/><stop offset="0.8338" stop-color="#ff0132"/><stop offset="0.9799" stop-color="#ff0027"/><stop offset="1.0000" stop-color="#ff0025"/></linearGradient><linearGradient id="ci44" gradientUnits="userSpaceOnUse" x1="1149" y1="0" x2="1498" y2="0"><stop offset="0.0000" stop-color="#00fff4"/><stop offset="0.0430" stop-color="#01fffd"/><stop offset="0.2235" stop-color="#d9d5ff"/><stop offset="0.2521" stop-color="#ffceff"/><stop offset="0.3152" stop-color="#ff8ebf"/><stop offset="0.4097" stop-color="#ff5688"/><stop offset="0.5559" stop-color="#ff295b"/><stop offset="0.8338" stop-color="#ff0133"/><stop offset="0.9799" stop-color="#ff0028"/><stop offset="1.0000" stop-color="#ff0027"/></linearGradient><linearGradient id="ci45" gradientUnits="userSpaceOnUse" x1="1149" y1="0" x2="1498" y2="0"><stop offset="0.0000" stop-color="#00fffc"/><stop offset="0.0430" stop-color="#00f9ff"/><stop offset="0.2235" stop-color="#d3ceff"/><stop offset="0.2579" stop-color="#ffc5ff"/><stop offset="0.3209" stop-color="#ff88c0"/><stop offset="0.4155" stop-color="#ff538a"/><stop offset="0.5616" stop-color="#ff275d"/><stop offset="0.8395" stop-color="#ff0035"/><stop offset="0.9857" stop-color="#ff0029"/><stop offset="1.0000" stop-color="#ff0028"/></linearGradient><linearGradient id="ci46" gradientUnits="userSpaceOnUse" x1="1149" y1="0" x2="1498" y2="0"><stop offset="0.0000" stop-color="#00fbff"/><stop offset="0.0430" stop-color="#00f2ff"/><stop offset="0.2665" stop-color="#ffbafc"/><stop offset="0.3295" stop-color="#ff81bf"/><stop offset="0.4241" stop-color="#ff4e8a"/><stop offset="0.6046" stop-color="#ff1e57"/><stop offset="0.8281" stop-color="#ff0038"/><stop offset="0.9742" stop-color="#ff002b"/><stop offset="0.9971" stop-color="#ff002a"/><stop offset="1.0000" stop-color="#ff002a"/></linearGradient><linearGradient id="ci47" gradientUnits="userSpaceOnUse" x1="1149" y1="0" x2="1498" y2="0"><stop offset="0.0000" stop-color="#00f4ff"/><stop offset="0.0430" stop-color="#00ebff"/><stop offset="0.2235" stop-color="#c7c1ff"/><stop offset="0.2665" stop-color="#fbb6ff"/><stop offset="0.3438" stop-color="#ff76ba"/><stop offset="0.4613" stop-color="#ff407f"/><stop offset="0.6418" stop-color="#ff1652"/><stop offset="0.8653" stop-color="#ff0036"/><stop offset="0.9828" stop-color="#ff002c"/><stop offset="1.0000" stop-color="#ff002b"/></linearGradient><linearGradient id="ci48" gradientUnits="userSpaceOnUse" x1="1149" y1="0" x2="1498" y2="0"><stop offset="0.0000" stop-color="#00edff"/><stop offset="0.0430" stop-color="#00e4ff"/><stop offset="0.2235" stop-color="#c2bbff"/><stop offset="0.2751" stop-color="#ffaeff"/><stop offset="0.3524" stop-color="#ff70b9"/><stop offset="0.4699" stop-color="#ff3c80"/><stop offset="0.6504" stop-color="#ff1453"/><stop offset="0.8309" stop-color="#ff003b"/><stop offset="0.9771" stop-color="#ff002e"/><stop offset="1.0000" stop-color="#ff002d"/></linearGradient><linearGradient id="ci49" gradientUnits="userSpaceOnUse" x1="1149" y1="0" x2="1498" y2="0"><stop offset="0.0000" stop-color="#00e7ff"/><stop offset="0.0516" stop-color="#05dcff"/><stop offset="0.2751" stop-color="#f8a8ff"/><stop offset="0.2980" stop-color="#ff97ec"/><stop offset="0.3754" stop-color="#ff62b0"/><stop offset="0.4928" stop-color="#ff357b"/><stop offset="0.7163" stop-color="#ff0b4b"/><stop offset="0.8968" stop-color="#ff0036"/><stop offset="0.9914" stop-color="#ff002f"/><stop offset="1.0000" stop-color="#ff002e"/></linearGradient><linearGradient id="ci50" gradientUnits="userSpaceOnUse" x1="1149" y1="0" x2="1498" y2="0"><stop offset="0.0000" stop-color="#00e1ff"/><stop offset="0.0516" stop-color="#04d6ff"/><stop offset="0.2751" stop-color="#f1a3ff"/><stop offset="0.2923" stop-color="#ff9bf9"/><stop offset="0.3696" stop-color="#ff64b8"/><stop offset="0.4871" stop-color="#ff3681"/><stop offset="0.6676" stop-color="#ff1155"/><stop offset="0.8481" stop-color="#ff003d"/><stop offset="0.9943" stop-color="#ff0030"/><stop offset="1.0000" stop-color="#ff002f"/></linearGradient><linearGradient id="ci51" gradientUnits="userSpaceOnUse" x1="1149" y1="0" x2="1498" y2="0"><stop offset="0.0000" stop-color="#00dbff"/><stop offset="0.0516" stop-color="#03d0ff"/><stop offset="0.2751" stop-color="#eb9eff"/><stop offset="0.2980" stop-color="#ff94f9"/><stop offset="0.3754" stop-color="#ff60b9"/><stop offset="0.4928" stop-color="#ff3382"/><stop offset="0.6734" stop-color="#ff0f56"/><stop offset="0.8539" stop-color="#ff003e"/><stop offset="1.0000" stop-color="#ff0031"/></linearGradient><linearGradient id="ci52" gradientUnits="userSpaceOnUse" x1="1149" y1="0" x2="1498" y2="0"><stop offset="0.0000" stop-color="#00d5ff"/><stop offset="0.0516" stop-color="#02caff"/><stop offset="0.2751" stop-color="#e599ff"/><stop offset="0.3037" stop-color="#ff8ef9"/><stop offset="0.3811" stop-color="#ff5cba"/><stop offset="0.4986" stop-color="#ff3183"/><stop offset="0.6791" stop-color="#ff0e57"/><stop offset="0.8596" stop-color="#ff003f"/><stop offset="0.9771" stop-color="#ff0034"/><stop offset="1.0000" stop-color="#ff0032"/></linearGradient><linearGradient id="ci53" gradientUnits="userSpaceOnUse" x1="1149" y1="0" x2="1498" y2="0"><stop offset="0.0000" stop-color="#00cfff"/><stop offset="0.0516" stop-color="#01c5ff"/><stop offset="0.2751" stop-color="#e094ff"/><stop offset="0.3095" stop-color="#ff89f9"/><stop offset="0.3868" stop-color="#ff58bb"/><stop offset="0.5043" stop-color="#ff2e85"/><stop offset="0.6848" stop-color="#ff0c59"/><stop offset="0.8309" stop-color="#ff0044"/><stop offset="0.9771" stop-color="#ff0036"/><stop offset="1.0000" stop-color="#ff0034"/></linearGradient><linearGradient id="ci54" gradientUnits="userSpaceOnUse" x1="1149" y1="0" x2="1498" y2="0"><stop offset="0.0000" stop-color="#00caff"/><stop offset="0.0516" stop-color="#00c0ff"/><stop offset="0.2751" stop-color="#da8fff"/><stop offset="0.3095" stop-color="#ff87ff"/><stop offset="0.3868" stop-color="#ff57bf"/><stop offset="0.5043" stop-color="#ff2e88"/><stop offset="0.6848" stop-color="#ff0c5b"/><stop offset="0.8309" stop-color="#ff0046"/><stop offset="0.9771" stop-color="#ff0037"/><stop offset="1.0000" stop-color="#ff0035"/></linearGradient><linearGradient id="ci55" gradientUnits="userSpaceOnUse" x1="1149" y1="0" x2="1498" y2="0"><stop offset="0.0000" stop-color="#00c5ff"/><stop offset="0.0516" stop-color="#00bbff"/><stop offset="0.2751" stop-color="#d58bff"/><stop offset="0.3181" stop-color="#ff80fc"/><stop offset="0.3954" stop-color="#ff52bf"/><stop offset="0.5129" stop-color="#ff2b88"/><stop offset="0.6934" stop-color="#ff0a5c"/><stop offset="0.8395" stop-color="#ff0047"/><stop offset="0.9857" stop-color="#ff0038"/><stop offset="1.0000" stop-color="#ff0037"/></linearGradient><linearGradient id="ci56" gradientUnits="userSpaceOnUse" x1="1149" y1="0" x2="1498" y2="0"><stop offset="0.0000" stop-color="#00c0ff"/><stop offset="0.0516" stop-color="#00b6ff"/><stop offset="0.2751" stop-color="#d087ff"/><stop offset="0.3266" stop-color="#ff78fa"/><stop offset="0.4040" stop-color="#ff4dbe"/><stop offset="0.5215" stop-color="#ff2889"/><stop offset="0.7450" stop-color="#ff0355"/><stop offset="0.9685" stop-color="#ff003b"/><stop offset="0.9971" stop-color="#ff0039"/><stop offset="1.0000" stop-color="#ff0038"/></linearGradient><linearGradient id="ci57" gradientUnits="userSpaceOnUse" x1="1149" y1="0" x2="1498" y2="0"><stop offset="0.0000" stop-color="#00bbff"/><stop offset="0.0516" stop-color="#00b1ff"/><stop offset="0.2751" stop-color="#cb83ff"/><stop offset="0.3266" stop-color="#ff77ff"/><stop offset="0.4040" stop-color="#ff4dc2"/><stop offset="0.5215" stop-color="#ff278c"/><stop offset="0.7020" stop-color="#ff085f"/><stop offset="0.8825" stop-color="#ff0045"/><stop offset="1.0000" stop-color="#ff003a"/></linearGradient><linearGradient id="ci58" gradientUnits="userSpaceOnUse" x1="1149" y1="0" x2="1498" y2="0"><stop offset="0.0000" stop-color="#00b7ff"/><stop offset="0.0516" stop-color="#00adff"/><stop offset="0.2751" stop-color="#c67fff"/><stop offset="0.3381" stop-color="#ff6efa"/><stop offset="0.4327" stop-color="#ff40b6"/><stop offset="0.5788" stop-color="#ff1a7d"/><stop offset="0.8023" stop-color="#ff0051"/><stop offset="0.9828" stop-color="#ff003d"/><stop offset="1.0000" stop-color="#ff003b"/></linearGradient><linearGradient id="ci59" gradientUnits="userSpaceOnUse" x1="1149" y1="0" x2="1498" y2="0"><stop offset="0.0000" stop-color="#00b2ff"/><stop offset="0.0516" stop-color="#00a9ff"/><stop offset="0.2321" stop-color="#9a84ff"/><stop offset="0.3266" stop-color="#f370ff"/><stop offset="0.3467" stop-color="#ff68f7"/><stop offset="0.4413" stop-color="#ff3cb5"/><stop offset="0.5874" stop-color="#ff177d"/><stop offset="0.7679" stop-color="#ff0058"/><stop offset="0.9914" stop-color="#ff003e"/><stop offset="1.0000" stop-color="#ff003d"/></linearGradient><linearGradient id="ci60" gradientUnits="userSpaceOnUse" x1="1149" y1="0" x2="1498" y2="0"><stop offset="0.0000" stop-color="#00aeff"/><stop offset="0.0630" stop-color="#05a2ff"/><stop offset="0.3410" stop-color="#fc69ff"/><stop offset="0.4355" stop-color="#ff3dbc"/><stop offset="0.5817" stop-color="#ff1882"/><stop offset="0.7622" stop-color="#ff005b"/><stop offset="0.9857" stop-color="#ff0040"/><stop offset="1.0000" stop-color="#ff003e"/></linearGradient><linearGradient id="ci61" gradientUnits="userSpaceOnUse" x1="1149" y1="0" x2="1498" y2="0"><stop offset="0.0000" stop-color="#00aaff"/><stop offset="0.0630" stop-color="#049eff"/><stop offset="0.3410" stop-color="#f666ff"/><stop offset="0.3639" stop-color="#ff5cf3"/><stop offset="0.4585" stop-color="#ff35b4"/><stop offset="0.6046" stop-color="#ff137e"/><stop offset="0.7851" stop-color="#ff0059"/><stop offset="0.9656" stop-color="#ff0043"/><stop offset="1.0000" stop-color="#ff0040"/></linearGradient><linearGradient id="ci62" gradientUnits="userSpaceOnUse" x1="1149" y1="0" x2="1498" y2="0"><stop offset="0.0000" stop-color="#00a6ff"/><stop offset="0.0630" stop-color="#049aff"/><stop offset="0.3410" stop-color="#f162ff"/><stop offset="0.3639" stop-color="#ff5bf8"/><stop offset="0.4585" stop-color="#ff34b8"/><stop offset="0.6046" stop-color="#ff1281"/><stop offset="0.7851" stop-color="#ff005b"/><stop offset="0.9656" stop-color="#ff0045"/><stop offset="1.0000" stop-color="#ff0041"/></linearGradient><linearGradient id="ci63" gradientUnits="userSpaceOnUse" x1="1149" y1="0" x2="1498" y2="0"><stop offset="0.0000" stop-color="#00a2ff"/><stop offset="0.0630" stop-color="#0397ff"/><stop offset="0.3410" stop-color="#ec5fff"/><stop offset="0.3639" stop-color="#ff5afd"/><stop offset="0.4585" stop-color="#ff33bc"/><stop offset="0.6046" stop-color="#ff1283"/><stop offset="0.7851" stop-color="#ff005d"/><stop offset="0.9656" stop-color="#ff0046"/><stop offset="1.0000" stop-color="#ff0043"/></linearGradient><linearGradient id="ci64" gradientUnits="userSpaceOnUse" x1="1149" y1="0" x2="1498" y2="0"><stop offset="0.0000" stop-color="#009eff"/><stop offset="0.0630" stop-color="#0293ff"/><stop offset="0.3410" stop-color="#e75cff"/><stop offset="0.3696" stop-color="#ff55fd"/><stop offset="0.4642" stop-color="#ff30bd"/><stop offset="0.6103" stop-color="#ff1085"/><stop offset="0.7564" stop-color="#ff0064"/><stop offset="0.9799" stop-color="#ff0046"/><stop offset="1.0000" stop-color="#ff0044"/></linearGradient><linearGradient id="ci65" gradientUnits="userSpaceOnUse" x1="1149" y1="0" x2="1498" y2="0"><stop offset="0.0000" stop-color="#009bff"/><stop offset="0.0630" stop-color="#018fff"/><stop offset="0.3410" stop-color="#e359ff"/><stop offset="0.3754" stop-color="#ff52fd"/><stop offset="0.4699" stop-color="#ff2ebd"/><stop offset="0.6160" stop-color="#ff0e86"/><stop offset="0.7622" stop-color="#ff0065"/><stop offset="0.9857" stop-color="#ff0047"/><stop offset="1.0000" stop-color="#ff0046"/></linearGradient><linearGradient id="ci66" gradientUnits="userSpaceOnUse" x1="1149" y1="0" x2="1498" y2="0"><stop offset="0.0000" stop-color="#0097ff"/><stop offset="0.0630" stop-color="#018cff"/><stop offset="0.3410" stop-color="#de57ff"/><stop offset="0.3840" stop-color="#ff4cfb"/><stop offset="0.4785" stop-color="#ff2abd"/><stop offset="0.6246" stop-color="#ff0c86"/><stop offset="0.7708" stop-color="#ff0066"/><stop offset="0.9943" stop-color="#ff0048"/><stop offset="1.0000" stop-color="#ff0047"/></linearGradient><linearGradient id="ci67" gradientUnits="userSpaceOnUse" x1="1149" y1="0" x2="1498" y2="0"><stop offset="0.0000" stop-color="#0094ff"/><stop offset="0.0630" stop-color="#0089ff"/><stop offset="0.3410" stop-color="#da54ff"/><stop offset="0.3840" stop-color="#fe4bff"/><stop offset="0.4785" stop-color="#ff29c0"/><stop offset="0.6246" stop-color="#ff0b88"/><stop offset="0.7708" stop-color="#ff0068"/><stop offset="0.9943" stop-color="#ff0049"/><stop offset="1.0000" stop-color="#ff0049"/></linearGradient><linearGradient id="ci68" gradientUnits="userSpaceOnUse" x1="1149" y1="0" x2="1498" y2="0"><stop offset="0.0000" stop-color="#0090ff"/><stop offset="0.0630" stop-color="#0085ff"/><stop offset="0.3410" stop-color="#d651ff"/><stop offset="0.3926" stop-color="#ff46fd"/><stop offset="0.4871" stop-color="#ff26c0"/><stop offset="0.6332" stop-color="#ff0989"/><stop offset="0.7794" stop-color="#ff0068"/><stop offset="0.9599" stop-color="#ff004f"/><stop offset="0.9943" stop-color="#ff004b"/><stop offset="1.0000" stop-color="#ff004a"/></linearGradient><linearGradient id="ci69" gradientUnits="userSpaceOnUse" x1="1149" y1="0" x2="1498" y2="0"><stop offset="0.0000" stop-color="#008dff"/><stop offset="0.0630" stop-color="#0082ff"/><stop offset="0.3410" stop-color="#d14fff"/><stop offset="0.3926" stop-color="#fc44ff"/><stop offset="0.5100" stop-color="#ff20b8"/><stop offset="0.6562" stop-color="#ff0685"/><stop offset="0.9341" stop-color="#ff0053"/><stop offset="0.9971" stop-color="#ff004c"/><stop offset="1.0000" stop-color="#ff004c"/></linearGradient><linearGradient id="ci70" gradientUnits="userSpaceOnUse" x1="1149" y1="0" x2="1498" y2="0"><stop offset="0.0000" stop-color="#008aff"/><stop offset="0.0630" stop-color="#007fff"/><stop offset="0.3410" stop-color="#ce4cff"/><stop offset="0.4040" stop-color="#ff3ffd"/><stop offset="0.4986" stop-color="#ff21c1"/><stop offset="0.6447" stop-color="#ff068b"/><stop offset="0.8682" stop-color="#ff005e"/><stop offset="0.9857" stop-color="#ff004f"/><stop offset="1.0000" stop-color="#ff004d"/></linearGradient><linearGradient id="ci71" gradientUnits="userSpaceOnUse" x1="1149" y1="0" x2="1498" y2="0"><stop offset="0.0000" stop-color="#0087ff"/><stop offset="0.0630" stop-color="#007cff"/><stop offset="0.3410" stop-color="#ca4aff"/><stop offset="0.4040" stop-color="#fc3eff"/><stop offset="0.5215" stop-color="#ff1bba"/><stop offset="0.7020" stop-color="#ff007f"/><stop offset="0.9799" stop-color="#ff0051"/><stop offset="1.0000" stop-color="#ff004f"/></linearGradient><linearGradient id="ci72" gradientUnits="userSpaceOnUse" x1="1149" y1="0" x2="1498" y2="0"><stop offset="0.0000" stop-color="#0084ff"/><stop offset="0.0630" stop-color="#0079ff"/><stop offset="0.2865" stop-color="#9c52ff"/><stop offset="0.4040" stop-color="#f83bff"/><stop offset="0.4327" stop-color="#ff33f0"/><stop offset="0.5501" stop-color="#ff14b0"/><stop offset="0.6963" stop-color="#ff0082"/><stop offset="0.9742" stop-color="#ff0053"/><stop offset="0.9971" stop-color="#ff0051"/><stop offset="1.0000" stop-color="#ff0051"/></linearGradient><linearGradient id="ci73" gradientUnits="userSpaceOnUse" x1="1149" y1="0" x2="1498" y2="0"><stop offset="0.0000" stop-color="#0081ff"/><stop offset="0.0630" stop-color="#0077ff"/><stop offset="0.2865" stop-color="#9950ff"/><stop offset="0.4040" stop-color="#f339ff"/><stop offset="0.4269" stop-color="#ff34f9"/><stop offset="0.5444" stop-color="#ff15b6"/><stop offset="0.6905" stop-color="#ff0086"/><stop offset="0.9685" stop-color="#ff0056"/><stop offset="0.9971" stop-color="#ff0052"/><stop offset="1.0000" stop-color="#ff0052"/></linearGradient><linearGradient id="ci74" gradientUnits="userSpaceOnUse" x1="1149" y1="0" x2="1498" y2="0"><stop offset="0.0000" stop-color="#007eff"/><stop offset="0.0774" stop-color="#0572ff"/><stop offset="0.3553" stop-color="#ca41ff"/><stop offset="0.4183" stop-color="#fa35ff"/><stop offset="0.5645" stop-color="#ff10b1"/><stop offset="0.7106" stop-color="#ff0083"/><stop offset="0.9885" stop-color="#ff0055"/><stop offset="1.0000" stop-color="#ff0054"/></linearGradient><linearGradient id="ci75" gradientUnits="userSpaceOnUse" x1="1149" y1="0" x2="1498" y2="0"><stop offset="0.0000" stop-color="#007bff"/><stop offset="0.0774" stop-color="#046fff"/><stop offset="0.4241" stop-color="#fa32ff"/><stop offset="0.5702" stop-color="#ff0eb2"/><stop offset="0.7163" stop-color="#ff0084"/><stop offset="0.9943" stop-color="#ff0056"/><stop offset="1.0000" stop-color="#ff0055"/></linearGradient><linearGradient id="ci76" gradientUnits="userSpaceOnUse" x1="1149" y1="0" x2="1498" y2="0"><stop offset="0.0000" stop-color="#0079ff"/><stop offset="0.0774" stop-color="#046dff"/><stop offset="0.4241" stop-color="#f630ff"/><stop offset="0.4527" stop-color="#ff28f3"/><stop offset="0.5702" stop-color="#ff0db5"/><stop offset="0.6877" stop-color="#ff008e"/><stop offset="0.9656" stop-color="#ff005b"/><stop offset="1.0000" stop-color="#ff0057"/></linearGradient><linearGradient id="ci77" gradientUnits="userSpaceOnUse" x1="1149" y1="0" x2="1498" y2="0"><stop offset="0.0000" stop-color="#0076ff"/><stop offset="0.0774" stop-color="#036aff"/><stop offset="0.4241" stop-color="#f22eff"/><stop offset="0.4527" stop-color="#ff27f7"/><stop offset="0.5702" stop-color="#ff0db8"/><stop offset="0.6877" stop-color="#ff0090"/><stop offset="0.9656" stop-color="#ff005d"/><stop offset="1.0000" stop-color="#ff0058"/></linearGradient><linearGradient id="ci78" gradientUnits="userSpaceOnUse" x1="1149" y1="0" x2="1498" y2="0"><stop offset="0.0000" stop-color="#0074ff"/><stop offset="0.0774" stop-color="#0268ff"/><stop offset="0.4241" stop-color="#ed2cff"/><stop offset="0.4527" stop-color="#ff26fb"/><stop offset="0.5702" stop-color="#ff0cbb"/><stop offset="0.6877" stop-color="#ff0093"/><stop offset="0.9656" stop-color="#ff005e"/><stop offset="1.0000" stop-color="#ff005a"/></linearGradient><linearGradient id="ci79" gradientUnits="userSpaceOnUse" x1="1149" y1="0" x2="1498" y2="0"><stop offset="0.0000" stop-color="#0071ff"/><stop offset="0.0774" stop-color="#0265ff"/><stop offset="0.4241" stop-color="#ea2bff"/><stop offset="0.4585" stop-color="#ff24fc"/><stop offset="0.5759" stop-color="#ff0abb"/><stop offset="0.6934" stop-color="#ff0094"/><stop offset="0.9713" stop-color="#ff005f"/><stop offset="1.0000" stop-color="#ff005b"/></linearGradient><linearGradient id="ci80" gradientUnits="userSpaceOnUse" x1="1149" y1="0" x2="1498" y2="0"><stop offset="0.0000" stop-color="#006fff"/><stop offset="0.0774" stop-color="#0163ff"/><stop offset="0.4241" stop-color="#e629ff"/><stop offset="0.4670" stop-color="#ff20fa"/><stop offset="0.5845" stop-color="#ff08bb"/><stop offset="0.7307" stop-color="#ff008c"/><stop offset="0.9542" stop-color="#ff0063"/><stop offset="0.9971" stop-color="#ff005d"/><stop offset="1.0000" stop-color="#ff005d"/></linearGradient><linearGradient id="ci81" gradientUnits="userSpaceOnUse" x1="1149" y1="0" x2="1498" y2="0"><stop offset="0.0000" stop-color="#006dff"/><stop offset="0.0774" stop-color="#0161ff"/><stop offset="0.4241" stop-color="#e227ff"/><stop offset="0.4670" stop-color="#ff1ffe"/><stop offset="0.5845" stop-color="#ff07be"/><stop offset="0.7307" stop-color="#ff008f"/><stop offset="0.9542" stop-color="#ff0065"/><stop offset="0.9971" stop-color="#ff005f"/><stop offset="1.0000" stop-color="#ff005f"/></linearGradient><linearGradient id="ci82" gradientUnits="userSpaceOnUse" x1="1149" y1="0" x2="1498" y2="0"><stop offset="0.0000" stop-color="#006aff"/><stop offset="0.0774" stop-color="#005fff"/><stop offset="0.4241" stop-color="#de26ff"/><stop offset="0.4756" stop-color="#ff1cfc"/><stop offset="0.5931" stop-color="#ff05bd"/><stop offset="0.7736" stop-color="#ff0087"/><stop offset="0.9971" stop-color="#ff0060"/><stop offset="1.0000" stop-color="#ff0060"/></linearGradient><linearGradient id="ci83" gradientUnits="userSpaceOnUse" x1="1149" y1="0" x2="1498" y2="0"><stop offset="0.0000" stop-color="#0068ff"/><stop offset="0.0774" stop-color="#005dff"/><stop offset="0.4241" stop-color="#db24ff"/><stop offset="0.4756" stop-color="#fe1bff"/><stop offset="0.5931" stop-color="#ff04c0"/><stop offset="0.7736" stop-color="#ff0089"/><stop offset="0.9971" stop-color="#ff0062"/><stop offset="1.0000" stop-color="#ff0062"/></linearGradient><linearGradient id="ci84" gradientUnits="userSpaceOnUse" x1="1149" y1="0" x2="1498" y2="0"><stop offset="0.0000" stop-color="#0066ff"/><stop offset="0.0774" stop-color="#005aff"/><stop offset="0.4241" stop-color="#d723ff"/><stop offset="0.4871" stop-color="#ff17fc"/><stop offset="0.6046" stop-color="#ff02bf"/><stop offset="0.7851" stop-color="#ff0088"/><stop offset="0.9656" stop-color="#ff0068"/><stop offset="1.0000" stop-color="#ff0063"/></linearGradient><linearGradient id="ci85" gradientUnits="userSpaceOnUse" x1="1149" y1="0" x2="1498" y2="0"><stop offset="0.0000" stop-color="#0064ff"/><stop offset="0.0774" stop-color="#0058ff"/><stop offset="0.4241" stop-color="#d421ff"/><stop offset="0.4871" stop-color="#fe16ff"/><stop offset="0.6046" stop-color="#ff01c1"/><stop offset="0.7851" stop-color="#ff008a"/><stop offset="0.9656" stop-color="#ff006a"/><stop offset="1.0000" stop-color="#ff0065"/></linearGradient><linearGradient id="ci86" gradientUnits="userSpaceOnUse" x1="1149" y1="0" x2="1498" y2="0"><stop offset="0.0000" stop-color="#0062ff"/><stop offset="0.0774" stop-color="#0056ff"/><stop offset="0.4241" stop-color="#d120ff"/><stop offset="0.5014" stop-color="#ff12fa"/><stop offset="0.6189" stop-color="#ff00bf"/><stop offset="0.7994" stop-color="#ff0089"/><stop offset="0.9799" stop-color="#ff0069"/><stop offset="1.0000" stop-color="#ff0066"/></linearGradient><linearGradient id="ci87" gradientUnits="userSpaceOnUse" x1="1149" y1="0" x2="1498" y2="0"><stop offset="0.0000" stop-color="#0060ff"/><stop offset="0.0774" stop-color="#0055ff"/><stop offset="0.4241" stop-color="#ce1eff"/><stop offset="0.5014" stop-color="#ff11fe"/><stop offset="0.6189" stop-color="#ff00c1"/><stop offset="0.7994" stop-color="#ff008b"/><stop offset="0.9799" stop-color="#ff006b"/><stop offset="1.0000" stop-color="#ff0068"/></linearGradient><linearGradient id="ci88" gradientUnits="userSpaceOnUse" x1="1149" y1="0" x2="1498" y2="0"><stop offset="0.0000" stop-color="#005eff"/><stop offset="0.0774" stop-color="#0053ff"/><stop offset="0.3553" stop-color="#a028ff"/><stop offset="0.5014" stop-color="#fc10ff"/><stop offset="0.6189" stop-color="#ff00c4"/><stop offset="0.7994" stop-color="#ff008d"/><stop offset="0.9799" stop-color="#ff006c"/><stop offset="1.0000" stop-color="#ff006a"/></linearGradient><linearGradient id="ci89" gradientUnits="userSpaceOnUse" x1="1149" y1="0" x2="1498" y2="0"><stop offset="0.0000" stop-color="#005cff"/><stop offset="0.0774" stop-color="#0051ff"/><stop offset="0.3553" stop-color="#9d27ff"/><stop offset="0.5014" stop-color="#f90fff"/><stop offset="0.5530" stop-color="#ff06e6"/><stop offset="0.6991" stop-color="#ff00aa"/><stop offset="0.9226" stop-color="#ff0077"/><stop offset="1.0000" stop-color="#ff006b"/></linearGradient><linearGradient id="ci90" gradientUnits="userSpaceOnUse" x1="1149" y1="0" x2="1498" y2="0"><stop offset="0.0000" stop-color="#005aff"/><stop offset="0.0946" stop-color="#054dff"/><stop offset="0.4413" stop-color="#cf18ff"/><stop offset="0.5186" stop-color="#ff0bfe"/><stop offset="0.6361" stop-color="#ff00c3"/><stop offset="0.8166" stop-color="#ff008e"/><stop offset="0.9971" stop-color="#ff006d"/><stop offset="1.0000" stop-color="#ff006d"/></linearGradient><linearGradient id="ci91" gradientUnits="userSpaceOnUse" x1="1149" y1="0" x2="1498" y2="0"><stop offset="0.0000" stop-color="#0058ff"/><stop offset="0.0946" stop-color="#054bff"/><stop offset="0.5272" stop-color="#ff08fc"/><stop offset="0.6447" stop-color="#ff00c2"/><stop offset="0.8252" stop-color="#ff008e"/><stop offset="0.9713" stop-color="#ff0073"/><stop offset="1.0000" stop-color="#ff006e"/></linearGradient><linearGradient id="ci92" gradientUnits="userSpaceOnUse" x1="1149" y1="0" x2="1498" y2="0"><stop offset="0.0000" stop-color="#0056ff"/><stop offset="0.0946" stop-color="#0449ff"/><stop offset="0.4413" stop-color="#c915ff"/><stop offset="0.5358" stop-color="#ff06fa"/><stop offset="0.6819" stop-color="#ff00b8"/><stop offset="0.9054" stop-color="#ff007f"/><stop offset="1.0000" stop-color="#ff0070"/></linearGradient><linearGradient id="ci93" gradientUnits="userSpaceOnUse" x1="1149" y1="0" x2="1498" y2="0"><stop offset="0.0000" stop-color="#0054ff"/><stop offset="0.0946" stop-color="#0448ff"/><stop offset="0.5272" stop-color="#fb06ff"/><stop offset="0.7077" stop-color="#ff00b1"/><stop offset="0.9312" stop-color="#ff007d"/><stop offset="0.9943" stop-color="#ff0072"/><stop offset="1.0000" stop-color="#ff0072"/></linearGradient><linearGradient id="ci94" gradientUnits="userSpaceOnUse" x1="1149" y1="0" x2="1498" y2="0"><stop offset="0.0000" stop-color="#0053ff"/><stop offset="0.0946" stop-color="#0346ff"/><stop offset="0.5272" stop-color="#f705ff"/><stop offset="0.5616" stop-color="#ff00f2"/><stop offset="0.7077" stop-color="#ff00b4"/><stop offset="0.9312" stop-color="#ff007e"/><stop offset="0.9943" stop-color="#ff0074"/><stop offset="1.0000" stop-color="#ff0073"/></linearGradient><linearGradient id="ci95" gradientUnits="userSpaceOnUse" x1="1149" y1="0" x2="1498" y2="0"><stop offset="0.0000" stop-color="#0051ff"/><stop offset="0.0946" stop-color="#0344ff"/><stop offset="0.5272" stop-color="#f404ff"/><stop offset="0.5616" stop-color="#ff00f6"/><stop offset="0.7077" stop-color="#ff00b6"/><stop offset="0.9312" stop-color="#ff0080"/><stop offset="0.9943" stop-color="#ff0076"/><stop offset="1.0000" stop-color="#ff0075"/></linearGradient><linearGradient id="ci96" gradientUnits="userSpaceOnUse" x1="1149" y1="0" x2="1498" y2="0"><stop offset="0.0000" stop-color="#004fff"/><stop offset="0.0946" stop-color="#0243ff"/><stop offset="0.5272" stop-color="#f104ff"/><stop offset="0.5616" stop-color="#ff00f9"/><stop offset="0.7077" stop-color="#ff00b9"/><stop offset="0.9312" stop-color="#ff0082"/><stop offset="0.9943" stop-color="#ff0077"/><stop offset="1.0000" stop-color="#ff0076"/></linearGradient><linearGradient id="ci97" gradientUnits="userSpaceOnUse" x1="1149" y1="0" x2="1498" y2="0"><stop offset="0.0000" stop-color="#004eff"/><stop offset="0.0946" stop-color="#0241ff"/><stop offset="0.5272" stop-color="#ed03ff"/><stop offset="0.5616" stop-color="#ff00fc"/><stop offset="0.7077" stop-color="#ff00bb"/><stop offset="0.9312" stop-color="#ff0084"/><stop offset="0.9943" stop-color="#ff0079"/><stop offset="1.0000" stop-color="#ff0078"/></linearGradient><linearGradient id="ci98" gradientUnits="userSpaceOnUse" x1="1149" y1="0" x2="1498" y2="0"><stop offset="0.0000" stop-color="#004cff"/><stop offset="0.0946" stop-color="#0140ff"/><stop offset="0.5272" stop-color="#ea02ff"/><stop offset="0.5702" stop-color="#ff00fb"/><stop offset="0.7163" stop-color="#ff00bb"/><stop offset="0.9398" stop-color="#ff0084"/><stop offset="0.9914" stop-color="#ff007b"/><stop offset="1.0000" stop-color="#ff007a"/></linearGradient><linearGradient id="ci99" gradientUnits="userSpaceOnUse" x1="1149" y1="0" x2="1498" y2="0"><stop offset="0.0000" stop-color="#004bff"/><stop offset="0.0946" stop-color="#013eff"/><stop offset="0.5272" stop-color="#e701ff"/><stop offset="0.5788" stop-color="#ff00f9"/><stop offset="0.7249" stop-color="#ff00ba"/><stop offset="0.9484" stop-color="#ff0084"/><stop offset="1.0000" stop-color="#ff007b"/></linearGradient><linearGradient id="ci100" gradientUnits="userSpaceOnUse" x1="1149" y1="0" x2="1498" y2="0"><stop offset="0.0000" stop-color="#0049ff"/><stop offset="0.0946" stop-color="#003dff"/><stop offset="0.5272" stop-color="#e400ff"/><stop offset="0.5788" stop-color="#ff00fc"/><stop offset="0.7249" stop-color="#ff00bd"/><stop offset="0.9484" stop-color="#ff0086"/><stop offset="1.0000" stop-color="#ff007d"/></linearGradient><linearGradient id="ci101" gradientUnits="userSpaceOnUse" x1="1149" y1="0" x2="1498" y2="0"><stop offset="0.0000" stop-color="#0048ff"/><stop offset="0.0946" stop-color="#003bff"/><stop offset="0.5272" stop-color="#e100ff"/><stop offset="0.5903" stop-color="#ff00f9"/><stop offset="0.7364" stop-color="#ff00bc"/><stop offset="0.9599" stop-color="#ff0085"/><stop offset="0.9943" stop-color="#ff007f"/><stop offset="1.0000" stop-color="#ff007e"/></linearGradient><linearGradient id="ci102" gradientUnits="userSpaceOnUse" x1="1149" y1="0" x2="1498" y2="0"><stop offset="0.0000" stop-color="#0046ff"/><stop offset="0.0946" stop-color="#003aff"/><stop offset="0.5272" stop-color="#de00ff"/><stop offset="0.5903" stop-color="#ff00fd"/><stop offset="0.7364" stop-color="#ff00be"/><stop offset="0.9599" stop-color="#ff0087"/><stop offset="0.9943" stop-color="#ff0081"/><stop offset="1.0000" stop-color="#ff0080"/></linearGradient><linearGradient id="ci103" gradientUnits="userSpaceOnUse" x1="1149" y1="0" x2="1498" y2="0"><stop offset="0.0000" stop-color="#0045ff"/><stop offset="0.0946" stop-color="#0039ff"/><stop offset="0.5272" stop-color="#db00ff"/><stop offset="0.5903" stop-color="#fe00ff"/><stop offset="0.7364" stop-color="#ff00c0"/><stop offset="0.9599" stop-color="#ff0089"/><stop offset="0.9943" stop-color="#ff0083"/><stop offset="1.0000" stop-color="#ff0082"/></linearGradient><linearGradient id="ci104" gradientUnits="userSpaceOnUse" x1="1149" y1="0" x2="1498" y2="0"><stop offset="0.0000" stop-color="#0043ff"/><stop offset="0.0946" stop-color="#0037ff"/><stop offset="0.5272" stop-color="#d900ff"/><stop offset="0.6046" stop-color="#ff00fb"/><stop offset="0.7507" stop-color="#ff00be"/><stop offset="0.9742" stop-color="#ff0088"/><stop offset="0.9971" stop-color="#ff0084"/><stop offset="1.0000" stop-color="#ff0083"/></linearGradient><linearGradient id="ci105" gradientUnits="userSpaceOnUse" x1="1149" y1="0" x2="1498" y2="0"><stop offset="0.0000" stop-color="#0042ff"/><stop offset="0.0946" stop-color="#0036ff"/><stop offset="0.5272" stop-color="#d600ff"/><stop offset="0.6046" stop-color="#ff00fe"/><stop offset="0.7507" stop-color="#ff00c0"/><stop offset="0.9742" stop-color="#ff008a"/><stop offset="0.9971" stop-color="#ff0085"/><stop offset="1.0000" stop-color="#ff0085"/></linearGradient><linearGradient id="ci106" gradientUnits="userSpaceOnUse" x1="1149" y1="0" x2="1498" y2="0"><stop offset="0.0000" stop-color="#0041ff"/><stop offset="0.0946" stop-color="#0035ff"/><stop offset="0.5272" stop-color="#d300ff"/><stop offset="0.6046" stop-color="#fd00ff"/><stop offset="0.7851" stop-color="#ff00b8"/><stop offset="0.9656" stop-color="#ff008d"/><stop offset="1.0000" stop-color="#ff0087"/></linearGradient><linearGradient id="ci107" gradientUnits="userSpaceOnUse" x1="1149" y1="0" x2="1498" y2="0"><stop offset="0.0000" stop-color="#003fff"/><stop offset="0.0946" stop-color="#0034ff"/><stop offset="0.4413" stop-color="#a406ff"/><stop offset="0.6218" stop-color="#ff00fb"/><stop offset="0.7679" stop-color="#ff00bf"/><stop offset="0.9914" stop-color="#ff008a"/><stop offset="1.0000" stop-color="#ff0088"/></linearGradient><linearGradient id="ci108" gradientUnits="userSpaceOnUse" x1="1149" y1="0" x2="1498" y2="0"><stop offset="0.0000" stop-color="#003eff"/><stop offset="0.0946" stop-color="#0032ff"/><stop offset="0.4413" stop-color="#a206ff"/><stop offset="0.6218" stop-color="#ff00fe"/><stop offset="0.7679" stop-color="#ff00c2"/><stop offset="0.9914" stop-color="#ff008b"/><stop offset="1.0000" stop-color="#ff008a"/></linearGradient><linearGradient id="ci109" gradientUnits="userSpaceOnUse" x1="1149" y1="0" x2="1498" y2="0"><stop offset="0.0000" stop-color="#003dff"/><stop offset="0.0946" stop-color="#0031ff"/><stop offset="0.4413" stop-color="#a005ff"/><stop offset="0.6218" stop-color="#fd00ff"/><stop offset="0.8023" stop-color="#ff00b9"/><stop offset="0.9828" stop-color="#ff008f"/><stop offset="1.0000" stop-color="#ff008c"/></linearGradient><linearGradient id="ci110" gradientUnits="userSpaceOnUse" x1="1149" y1="0" x2="1498" y2="0"><stop offset="0.0000" stop-color="#003bff"/><stop offset="0.0946" stop-color="#0030ff"/><stop offset="0.4413" stop-color="#9e04ff"/><stop offset="0.6218" stop-color="#fa00ff"/><stop offset="0.8023" stop-color="#ff00bb"/><stop offset="0.9828" stop-color="#ff0090"/><stop offset="1.0000" stop-color="#ff008d"/></linearGradient><linearGradient id="ci111" gradientUnits="userSpaceOnUse" x1="1149" y1="0" x2="1498" y2="0"><stop offset="0.0000" stop-color="#003aff"/><stop offset="0.0946" stop-color="#002fff"/><stop offset="0.4413" stop-color="#9c03ff"/><stop offset="0.6218" stop-color="#f700ff"/><stop offset="0.6648" stop-color="#ff00f2"/><stop offset="0.8453" stop-color="#ff00b1"/><stop offset="0.9914" stop-color="#ff0090"/><stop offset="1.0000" stop-color="#ff008f"/></linearGradient><linearGradient id="ci112" gradientUnits="userSpaceOnUse" x1="1149" y1="0" x2="1498" y2="0"><stop offset="0.0000" stop-color="#0039ff"/><stop offset="0.1175" stop-color="#052bff"/><stop offset="0.4642" stop-color="#a500ff"/><stop offset="0.6447" stop-color="#ff00fe"/><stop offset="0.8252" stop-color="#ff00b9"/><stop offset="0.9713" stop-color="#ff0096"/><stop offset="1.0000" stop-color="#ff0091"/></linearGradient><linearGradient id="ci113" gradientUnits="userSpaceOnUse" x1="1149" y1="0" x2="1498" y2="0"><stop offset="0.0000" stop-color="#0038ff"/><stop offset="0.1175" stop-color="#052aff"/><stop offset="0.4642" stop-color="#a300ff"/><stop offset="0.6447" stop-color="#fd00ff"/><stop offset="0.8252" stop-color="#ff00bb"/><stop offset="0.9713" stop-color="#ff0098"/><stop offset="1.0000" stop-color="#ff0092"/></linearGradient><linearGradient id="ci114" gradientUnits="userSpaceOnUse" x1="1149" y1="0" x2="1498" y2="0"><stop offset="0.0000" stop-color="#0037ff"/><stop offset="0.1175" stop-color="#0529ff"/><stop offset="0.4642" stop-color="#a100ff"/><stop offset="0.6447" stop-color="#fa00ff"/><stop offset="0.8682" stop-color="#ff00b1"/><stop offset="0.9857" stop-color="#ff0097"/><stop offset="1.0000" stop-color="#ff0094"/></linearGradient><linearGradient id="ci115" gradientUnits="userSpaceOnUse" x1="1149" y1="0" x2="1498" y2="0"><stop offset="0.0000" stop-color="#0035ff"/><stop offset="0.1175" stop-color="#0428ff"/><stop offset="0.4642" stop-color="#9f00ff"/><stop offset="0.6447" stop-color="#f700ff"/><stop offset="0.6877" stop-color="#ff00f2"/><stop offset="0.8682" stop-color="#ff00b3"/><stop offset="0.9857" stop-color="#ff0098"/><stop offset="1.0000" stop-color="#ff0096"/></linearGradient><linearGradient id="ci116" gradientUnits="userSpaceOnUse" x1="1149" y1="0" x2="1498" y2="0"><stop offset="0.0000" stop-color="#0034ff"/><stop offset="0.1175" stop-color="#0427ff"/><stop offset="0.4642" stop-color="#9e00ff"/><stop offset="0.6447" stop-color="#f400ff"/><stop offset="0.6791" stop-color="#ff00f9"/><stop offset="0.8596" stop-color="#ff00b8"/><stop offset="0.9771" stop-color="#ff009c"/><stop offset="1.0000" stop-color="#ff0097"/></linearGradient><linearGradient id="ci117" gradientUnits="userSpaceOnUse" x1="1149" y1="0" x2="1498" y2="0"><stop offset="0.0000" stop-color="#0033ff"/><stop offset="0.1175" stop-color="#0326ff"/><stop offset="0.4642" stop-color="#9c00ff"/><stop offset="0.6447" stop-color="#f200ff"/><stop offset="0.6877" stop-color="#ff00f8"/><stop offset="0.8682" stop-color="#ff00b7"/><stop offset="0.9857" stop-color="#ff009c"/><stop offset="1.0000" stop-color="#ff0099"/></linearGradient><linearGradient id="ci118" gradientUnits="userSpaceOnUse" x1="1149" y1="0" x2="1498" y2="0"><stop offset="0.0000" stop-color="#0032ff"/><stop offset="0.1175" stop-color="#0325ff"/><stop offset="0.4642" stop-color="#9a00ff"/><stop offset="0.6877" stop-color="#ff00fa"/><stop offset="0.8682" stop-color="#ff00b9"/><stop offset="0.9857" stop-color="#ff009e"/><stop offset="1.0000" stop-color="#ff009b"/></linearGradient><linearGradient id="ci119" gradientUnits="userSpaceOnUse" x1="1149" y1="0" x2="1498" y2="0"><stop offset="0.0000" stop-color="#0031ff"/><stop offset="0.1175" stop-color="#0224ff"/><stop offset="0.4642" stop-color="#9800ff"/><stop offset="0.6877" stop-color="#ff00fd"/><stop offset="0.8682" stop-color="#ff00bb"/><stop offset="0.9857" stop-color="#ff009f"/><stop offset="1.0000" stop-color="#ff009c"/></linearGradient><linearGradient id="ci120" gradientUnits="userSpaceOnUse" x1="1149" y1="0" x2="1498" y2="0"><stop offset="0.0000" stop-color="#0030ff"/><stop offset="0.1175" stop-color="#0223ff"/><stop offset="0.4642" stop-color="#9600ff"/><stop offset="0.6877" stop-color="#fe00ff"/><stop offset="0.8682" stop-color="#ff00bd"/><stop offset="0.9857" stop-color="#ff00a1"/><stop offset="1.0000" stop-color="#ff009e"/></linearGradient><linearGradient id="ci121" gradientUnits="userSpaceOnUse" x1="1149" y1="0" x2="1498" y2="0"><stop offset="0.0000" stop-color="#002fff"/><stop offset="0.1175" stop-color="#0222ff"/><stop offset="0.3954" stop-color="#7602ff"/><stop offset="0.6734" stop-color="#f500ff"/><stop offset="0.7163" stop-color="#ff00f5"/><stop offset="0.8968" stop-color="#ff00b8"/><stop offset="0.9914" stop-color="#ff00a1"/><stop offset="1.0000" stop-color="#ff00a0"/></linearGradient><linearGradient id="ci122" gradientUnits="userSpaceOnUse" x1="1149" y1="0" x2="1498" y2="0"><stop offset="0.0000" stop-color="#002eff"/><stop offset="0.1175" stop-color="#0121ff"/><stop offset="0.3954" stop-color="#7501ff"/><stop offset="0.6734" stop-color="#f200ff"/><stop offset="0.7163" stop-color="#ff00f8"/><stop offset="0.8968" stop-color="#ff00ba"/><stop offset="0.9914" stop-color="#ff00a3"/><stop offset="1.0000" stop-color="#ff00a1"/></linearGradient><linearGradient id="ci123" gradientUnits="userSpaceOnUse" x1="1149" y1="0" x2="1498" y2="0"><stop offset="0.0000" stop-color="#002dff"/><stop offset="0.1175" stop-color="#0120ff"/><stop offset="0.3954" stop-color="#7400ff"/><stop offset="0.6734" stop-color="#ef00ff"/><stop offset="0.7163" stop-color="#ff00fb"/><stop offset="0.8968" stop-color="#ff00bc"/><stop offset="0.9914" stop-color="#ff00a5"/><stop offset="1.0000" stop-color="#ff00a3"/></linearGradient><linearGradient id="ci124" gradientUnits="userSpaceOnUse" x1="1149" y1="0" x2="1498" y2="0"><stop offset="0.0000" stop-color="#002cff"/><stop offset="0.1175" stop-color="#011fff"/><stop offset="0.3954" stop-color="#7200ff"/><stop offset="0.6734" stop-color="#ed00ff"/><stop offset="0.7249" stop-color="#ff00f9"/><stop offset="0.9054" stop-color="#ff00bb"/><stop offset="1.0000" stop-color="#ff00a5"/></linearGradient><linearGradient id="ci125" gradientUnits="userSpaceOnUse" x1="1149" y1="0" x2="1498" y2="0"><stop offset="0.0000" stop-color="#002bff"/><stop offset="0.1175" stop-color="#001eff"/><stop offset="0.3954" stop-color="#7100ff"/><stop offset="0.6734" stop-color="#ea00ff"/><stop offset="0.7249" stop-color="#ff00fc"/><stop offset="0.9054" stop-color="#ff00bd"/><stop offset="1.0000" stop-color="#ff00a7"/></linearGradient><linearGradient id="ci126" gradientUnits="userSpaceOnUse" x1="1149" y1="0" x2="1498" y2="0"><stop offset="0.0000" stop-color="#002aff"/><stop offset="0.1175" stop-color="#001dff"/><stop offset="0.3954" stop-color="#7000ff"/><stop offset="0.6734" stop-color="#e800ff"/><stop offset="0.7364" stop-color="#ff00f9"/><stop offset="0.9169" stop-color="#ff00bc"/><stop offset="0.9943" stop-color="#ff00a9"/><stop offset="1.0000" stop-color="#ff00a8"/></linearGradient><linearGradient id="ci127" gradientUnits="userSpaceOnUse" x1="1149" y1="0" x2="1498" y2="0"><stop offset="0.0000" stop-color="#0029ff"/><stop offset="0.1175" stop-color="#001dff"/><stop offset="0.3954" stop-color="#6e00ff"/><stop offset="0.6734" stop-color="#e600ff"/><stop offset="0.7364" stop-color="#ff00fc"/><stop offset="0.9169" stop-color="#ff00be"/><stop offset="0.9943" stop-color="#ff00ab"/><stop offset="1.0000" stop-color="#ff00aa"/></linearGradient><linearGradient id="ci128" gradientUnits="userSpaceOnUse" x1="1149" y1="0" x2="1498" y2="0"><stop offset="0.0000" stop-color="#0028ff"/><stop offset="0.1175" stop-color="#001cff"/><stop offset="0.3954" stop-color="#6d00ff"/><stop offset="0.7421" stop-color="#ff00fc"/><stop offset="0.9226" stop-color="#ff00be"/><stop offset="1.0000" stop-color="#ff00ac"/></linearGradient><linearGradient id="ci129" gradientUnits="userSpaceOnUse" x1="1149" y1="0" x2="1498" y2="0"><stop offset="0.0000" stop-color="#0027ff"/><stop offset="0.1175" stop-color="#001bff"/><stop offset="0.3954" stop-color="#6c00ff"/><stop offset="0.7421" stop-color="#ff00ff"/><stop offset="0.9226" stop-color="#ff00c0"/><stop offset="1.0000" stop-color="#ff00ad"/></linearGradient><linearGradient id="ci130" gradientUnits="userSpaceOnUse" x1="1149" y1="0" x2="1498" y2="0"><stop offset="0.0000" stop-color="#0026ff"/><stop offset="0.1175" stop-color="#001aff"/><stop offset="0.3954" stop-color="#6a00ff"/><stop offset="0.7421" stop-color="#fd00ff"/><stop offset="0.9656" stop-color="#ff00b7"/><stop offset="1.0000" stop-color="#ff00af"/></linearGradient><linearGradient id="ci131" gradientUnits="userSpaceOnUse" x1="1149" y1="0" x2="1498" y2="0"><stop offset="0.0000" stop-color="#0025ff"/><stop offset="0.1175" stop-color="#0019ff"/><stop offset="0.3954" stop-color="#6900ff"/><stop offset="0.7421" stop-color="#fa00ff"/><stop offset="0.9656" stop-color="#ff00b9"/><stop offset="1.0000" stop-color="#ff00b1"/></linearGradient><linearGradient id="ci132" gradientUnits="userSpaceOnUse" x1="1149" y1="0" x2="1498" y2="0"><stop offset="0.0000" stop-color="#0024ff"/><stop offset="0.1175" stop-color="#0018ff"/><stop offset="0.3954" stop-color="#6800ff"/><stop offset="0.7421" stop-color="#f800ff"/><stop offset="0.7937" stop-color="#ff00f0"/><stop offset="0.9742" stop-color="#ff00b9"/><stop offset="0.9971" stop-color="#ff00b3"/><stop offset="1.0000" stop-color="#ff00b3"/></linearGradient><linearGradient id="ci133" gradientUnits="userSpaceOnUse" x1="1149" y1="0" x2="1498" y2="0"><stop offset="0.0000" stop-color="#0024ff"/><stop offset="0.1175" stop-color="#0018ff"/><stop offset="0.3954" stop-color="#6700ff"/><stop offset="0.7421" stop-color="#f500ff"/><stop offset="0.7851" stop-color="#ff00f6"/><stop offset="0.9656" stop-color="#ff00bd"/><stop offset="1.0000" stop-color="#ff00b4"/></linearGradient><linearGradient id="ci134" gradientUnits="userSpaceOnUse" x1="1149" y1="0" x2="1498" y2="0"><stop offset="0.0000" stop-color="#0023ff"/><stop offset="0.1175" stop-color="#0017ff"/><stop offset="0.3954" stop-color="#6600ff"/><stop offset="0.7421" stop-color="#f300ff"/><stop offset="0.7851" stop-color="#ff00f9"/><stop offset="0.9656" stop-color="#ff00be"/><stop offset="1.0000" stop-color="#ff00b6"/></linearGradient><linearGradient id="ci135" gradientUnits="userSpaceOnUse" x1="1149" y1="0" x2="1498" y2="0"><stop offset="0.0000" stop-color="#0022ff"/><stop offset="0.1175" stop-color="#0016ff"/><stop offset="0.3410" stop-color="#5000ff"/><stop offset="0.7736" stop-color="#fe00ff"/><stop offset="0.9971" stop-color="#ff00b9"/><stop offset="1.0000" stop-color="#ff00b8"/></linearGradient><linearGradient id="ci136" gradientUnits="userSpaceOnUse" x1="1149" y1="0" x2="1498" y2="0"><stop offset="0.0000" stop-color="#0021ff"/><stop offset="0.1175" stop-color="#0015ff"/><stop offset="0.3410" stop-color="#4f00ff"/><stop offset="0.7736" stop-color="#fc00ff"/><stop offset="0.9971" stop-color="#ff00ba"/><stop offset="1.0000" stop-color="#ff00ba"/></linearGradient><linearGradient id="ci137" gradientUnits="userSpaceOnUse" x1="1149" y1="0" x2="1498" y2="0"><stop offset="0.0000" stop-color="#0020ff"/><stop offset="0.1175" stop-color="#0015ff"/><stop offset="0.3410" stop-color="#4e00ff"/><stop offset="0.7736" stop-color="#f900ff"/><stop offset="0.8911" stop-color="#ff00d9"/><stop offset="0.9857" stop-color="#ff00bf"/><stop offset="1.0000" stop-color="#ff00bb"/></linearGradient><linearGradient id="ci138" gradientUnits="userSpaceOnUse" x1="1149" y1="0" x2="1498" y2="0"><stop offset="0.0000" stop-color="#001fff"/><stop offset="0.1175" stop-color="#0014ff"/><stop offset="0.3410" stop-color="#4d00ff"/><stop offset="0.7736" stop-color="#f700ff"/><stop offset="0.8252" stop-color="#ff00f2"/><stop offset="0.9713" stop-color="#ff00c4"/><stop offset="1.0000" stop-color="#ff00bd"/></linearGradient><linearGradient id="ci139" gradientUnits="userSpaceOnUse" x1="1149" y1="0" x2="1498" y2="0"><stop offset="0.0000" stop-color="#001fff"/><stop offset="0.1175" stop-color="#0013ff"/><stop offset="0.3410" stop-color="#4c00ff"/><stop offset="0.7736" stop-color="#f500ff"/><stop offset="0.8166" stop-color="#ff00f8"/><stop offset="0.9971" stop-color="#ff00c0"/><stop offset="1.0000" stop-color="#ff00bf"/></linearGradient><linearGradient id="ci140" gradientUnits="userSpaceOnUse" x1="1149" y1="0" x2="1498" y2="0"><stop offset="0.0000" stop-color="#001eff"/><stop offset="0.1461" stop-color="#0510ff"/><stop offset="0.3696" stop-color="#5600ff"/><stop offset="0.8023" stop-color="#fe00ff"/><stop offset="0.9828" stop-color="#ff00c5"/><stop offset="1.0000" stop-color="#ff00c1"/></linearGradient><linearGradient id="ci141" gradientUnits="userSpaceOnUse" x1="1149" y1="0" x2="1498" y2="0"><stop offset="0.0000" stop-color="#001dff"/><stop offset="0.1461" stop-color="#050fff"/><stop offset="0.3696" stop-color="#5500ff"/><stop offset="0.8023" stop-color="#fc00ff"/><stop offset="0.9828" stop-color="#ff00c7"/><stop offset="1.0000" stop-color="#ff00c2"/></linearGradient><linearGradient id="ci142" gradientUnits="userSpaceOnUse" x1="1149" y1="0" x2="1498" y2="0"><stop offset="0.0000" stop-color="#001cff"/><stop offset="0.1461" stop-color="#050eff"/><stop offset="0.3696" stop-color="#5400ff"/><stop offset="0.8023" stop-color="#f900ff"/><stop offset="0.9484" stop-color="#ff00d2"/><stop offset="1.0000" stop-color="#ff00c4"/></linearGradient><linearGradient id="ci143" gradientUnits="userSpaceOnUse" x1="1149" y1="0" x2="1498" y2="0"><stop offset="0.0000" stop-color="#001cff"/><stop offset="0.1461" stop-color="#040eff"/><stop offset="0.3266" stop-color="#4300ff"/><stop offset="0.7593" stop-color="#e600ff"/><stop offset="0.8367" stop-color="#ff00f9"/><stop offset="0.9828" stop-color="#ff00ca"/><stop offset="1.0000" stop-color="#ff00c6"/></linearGradient><linearGradient id="ci144" gradientUnits="userSpaceOnUse" x1="1149" y1="0" x2="1498" y2="0"><stop offset="0.0000" stop-color="#001bff"/><stop offset="0.1461" stop-color="#040dff"/><stop offset="0.3266" stop-color="#4200ff"/><stop offset="0.7593" stop-color="#e400ff"/><stop offset="0.8367" stop-color="#ff00fb"/><stop offset="0.9828" stop-color="#ff00cc"/><stop offset="1.0000" stop-color="#ff00c8"/></linearGradient><linearGradient id="ci145" gradientUnits="userSpaceOnUse" x1="1149" y1="0" x2="1498" y2="0"><stop offset="0.0000" stop-color="#001aff"/><stop offset="0.1461" stop-color="#040cff"/><stop offset="0.3266" stop-color="#4200ff"/><stop offset="0.7593" stop-color="#e200ff"/><stop offset="0.8367" stop-color="#ff00fe"/><stop offset="0.9828" stop-color="#ff00ce"/><stop offset="1.0000" stop-color="#ff00ca"/></linearGradient><linearGradient id="ci146" gradientUnits="userSpaceOnUse" x1="1149" y1="0" x2="1498" y2="0"><stop offset="0.0000" stop-color="#001aff"/><stop offset="0.1461" stop-color="#030cff"/><stop offset="0.3266" stop-color="#4100ff"/><stop offset="0.7593" stop-color="#e000ff"/><stop offset="0.8539" stop-color="#ff00f9"/><stop offset="1.0000" stop-color="#ff00cb"/></linearGradient><linearGradient id="ci147" gradientUnits="userSpaceOnUse" x1="1149" y1="0" x2="1498" y2="0"><stop offset="0.0000" stop-color="#0019ff"/><stop offset="0.1461" stop-color="#030bff"/><stop offset="0.3266" stop-color="#4000ff"/><stop offset="0.7593" stop-color="#de00ff"/><stop offset="0.8539" stop-color="#ff00fb"/><stop offset="1.0000" stop-color="#ff00cd"/></linearGradient><linearGradient id="ci148" gradientUnits="userSpaceOnUse" x1="1149" y1="0" x2="1498" y2="0"><stop offset="0.0000" stop-color="#0018ff"/><stop offset="0.1461" stop-color="#030bff"/><stop offset="0.3266" stop-color="#3f00ff"/><stop offset="0.7593" stop-color="#dc00ff"/><stop offset="0.8539" stop-color="#ff00fe"/><stop offset="1.0000" stop-color="#ff00cf"/></linearGradient><linearGradient id="ci149" gradientUnits="userSpaceOnUse" x1="1149" y1="0" x2="1498" y2="0"><stop offset="0.0000" stop-color="#0017ff"/><stop offset="0.1461" stop-color="#020aff"/><stop offset="0.3266" stop-color="#3f00ff"/><stop offset="0.8653" stop-color="#ff00fc"/><stop offset="0.9828" stop-color="#ff00d5"/><stop offset="1.0000" stop-color="#ff00d1"/></linearGradient><linearGradient id="ci150" gradientUnits="userSpaceOnUse" x1="1149" y1="0" x2="1498" y2="0"><stop offset="0.0000" stop-color="#0017ff"/><stop offset="0.1461" stop-color="#0209ff"/><stop offset="0.3266" stop-color="#3e00ff"/><stop offset="0.8653" stop-color="#ff00fe"/><stop offset="0.9828" stop-color="#ff00d7"/><stop offset="1.0000" stop-color="#ff00d2"/></linearGradient><linearGradient id="ci151" gradientUnits="userSpaceOnUse" x1="1149" y1="0" x2="1498" y2="0"><stop offset="0.0000" stop-color="#0016ff"/><stop offset="0.1461" stop-color="#0209ff"/><stop offset="0.3266" stop-color="#3d00ff"/><stop offset="0.8653" stop-color="#fe00ff"/><stop offset="0.9828" stop-color="#ff00d9"/><stop offset="1.0000" stop-color="#ff00d4"/></linearGradient><linearGradient id="ci152" gradientUnits="userSpaceOnUse" x1="1149" y1="0" x2="1498" y2="0"><stop offset="0.0000" stop-color="#0015ff"/><stop offset="0.1461" stop-color="#0108ff"/><stop offset="0.3696" stop-color="#4b00ff"/><stop offset="0.8023" stop-color="#e400ff"/><stop offset="0.8797" stop-color="#ff00fd"/><stop offset="0.9971" stop-color="#ff00d7"/><stop offset="1.0000" stop-color="#ff00d6"/></linearGradient><linearGradient id="ci153" gradientUnits="userSpaceOnUse" x1="1149" y1="0" x2="1498" y2="0"><stop offset="0.0000" stop-color="#0015ff"/><stop offset="0.1461" stop-color="#0108ff"/><stop offset="0.3696" stop-color="#4a00ff"/><stop offset="0.8023" stop-color="#e200ff"/><stop offset="0.8797" stop-color="#ff00ff"/><stop offset="0.9971" stop-color="#ff00d9"/><stop offset="1.0000" stop-color="#ff00d8"/></linearGradient><linearGradient id="ci154" gradientUnits="userSpaceOnUse" x1="1149" y1="0" x2="1498" y2="0"><stop offset="0.0000" stop-color="#0014ff"/><stop offset="0.1461" stop-color="#0107ff"/><stop offset="0.3696" stop-color="#4900ff"/><stop offset="0.8023" stop-color="#e000ff"/><stop offset="0.8968" stop-color="#ff00fb"/><stop offset="0.9914" stop-color="#ff00dc"/><stop offset="1.0000" stop-color="#ff00da"/></linearGradient><linearGradient id="ci155" gradientUnits="userSpaceOnUse" x1="1149" y1="0" x2="1498" y2="0"><stop offset="0.0000" stop-color="#0014ff"/><stop offset="0.1461" stop-color="#0007ff"/><stop offset="0.4241" stop-color="#5b00ff"/><stop offset="0.8567" stop-color="#f200ff"/><stop offset="0.9083" stop-color="#ff00f9"/><stop offset="0.9857" stop-color="#ff00e0"/><stop offset="1.0000" stop-color="#ff00dc"/></linearGradient><linearGradient id="ci156" gradientUnits="userSpaceOnUse" x1="1149" y1="0" x2="1498" y2="0"><stop offset="0.0000" stop-color="#0013ff"/><stop offset="0.1461" stop-color="#0006ff"/><stop offset="0.4928" stop-color="#7100ff"/><stop offset="0.8395" stop-color="#ea00ff"/><stop offset="0.9026" stop-color="#ff00fd"/><stop offset="0.9971" stop-color="#ff00de"/><stop offset="1.0000" stop-color="#ff00dd"/></linearGradient><linearGradient id="ci157" gradientUnits="userSpaceOnUse" x1="1149" y1="0" x2="1498" y2="0"><stop offset="0.0000" stop-color="#0012ff"/><stop offset="0.1461" stop-color="#0005ff"/><stop offset="0.8195" stop-color="#e100ff"/><stop offset="0.9140" stop-color="#ff00fb"/><stop offset="0.9914" stop-color="#ff00e2"/><stop offset="1.0000" stop-color="#ff00df"/></linearGradient><linearGradient id="ci158" gradientUnits="userSpaceOnUse" x1="1149" y1="0" x2="1498" y2="0"><stop offset="0.0000" stop-color="#0012ff"/><stop offset="0.1461" stop-color="#0005ff"/><stop offset="0.8195" stop-color="#df00ff"/><stop offset="0.9140" stop-color="#ff00fd"/><stop offset="0.9914" stop-color="#ff00e4"/><stop offset="1.0000" stop-color="#ff00e1"/></linearGradient><linearGradient id="ci159" gradientUnits="userSpaceOnUse" x1="1149" y1="0" x2="1498" y2="0"><stop offset="0.0000" stop-color="#0011ff"/><stop offset="0.1461" stop-color="#0004ff"/><stop offset="0.8195" stop-color="#dd00ff"/><stop offset="0.9140" stop-color="#ff00ff"/><stop offset="0.9914" stop-color="#ff00e5"/><stop offset="1.0000" stop-color="#ff00e3"/></linearGradient><linearGradient id="ci160" gradientUnits="userSpaceOnUse" x1="1149" y1="0" x2="1498" y2="0"><stop offset="0.0000" stop-color="#0010ff"/><stop offset="0.1461" stop-color="#0004ff"/><stop offset="0.8195" stop-color="#db00ff"/><stop offset="0.9140" stop-color="#fd00ff"/><stop offset="0.9914" stop-color="#ff00e7"/><stop offset="1.0000" stop-color="#ff00e5"/></linearGradient><linearGradient id="ci161" gradientUnits="userSpaceOnUse" x1="1149" y1="0" x2="1498" y2="0"><stop offset="0.0000" stop-color="#0010ff"/><stop offset="0.1461" stop-color="#0003ff"/><stop offset="0.8195" stop-color="#da00ff"/><stop offset="0.9370" stop-color="#ff00fb"/><stop offset="1.0000" stop-color="#ff00e7"/></linearGradient><linearGradient id="ci162" gradientUnits="userSpaceOnUse" x1="1149" y1="0" x2="1498" y2="0"><stop offset="0.0000" stop-color="#000fff"/><stop offset="0.1461" stop-color="#0003ff"/><stop offset="0.8195" stop-color="#d800ff"/><stop offset="0.9370" stop-color="#ff00fd"/><stop offset="1.0000" stop-color="#ff00e8"/></linearGradient><linearGradient id="ci163" gradientUnits="userSpaceOnUse" x1="1149" y1="0" x2="1498" y2="0"><stop offset="0.0000" stop-color="#000fff"/><stop offset="0.1461" stop-color="#0002ff"/><stop offset="0.8195" stop-color="#d600ff"/><stop offset="0.9370" stop-color="#ff00ff"/><stop offset="1.0000" stop-color="#ff00ea"/></linearGradient><linearGradient id="ci164" gradientUnits="userSpaceOnUse" x1="1149" y1="0" x2="1498" y2="0"><stop offset="0.0000" stop-color="#000eff"/><stop offset="0.1461" stop-color="#0002ff"/><stop offset="0.8195" stop-color="#d400ff"/><stop offset="0.9370" stop-color="#fd00ff"/><stop offset="1.0000" stop-color="#ff00ec"/></linearGradient><linearGradient id="ci165" gradientUnits="userSpaceOnUse" x1="1149" y1="0" x2="1498" y2="0"><stop offset="0.0000" stop-color="#000eff"/><stop offset="0.1461" stop-color="#0001ff"/><stop offset="0.8195" stop-color="#d300ff"/><stop offset="0.9370" stop-color="#fb00ff"/><stop offset="1.0000" stop-color="#ff00ee"/></linearGradient><linearGradient id="ci166" gradientUnits="userSpaceOnUse" x1="1149" y1="0" x2="1498" y2="0"><stop offset="0.0000" stop-color="#000dff"/><stop offset="0.1461" stop-color="#0001ff"/><stop offset="0.6848" stop-color="#a400ff"/><stop offset="0.9628" stop-color="#ff00fc"/><stop offset="0.9971" stop-color="#ff00f1"/><stop offset="1.0000" stop-color="#ff00f0"/></linearGradient><linearGradient id="ci167" gradientUnits="userSpaceOnUse" x1="1149" y1="0" x2="1498" y2="0"><stop offset="0.0000" stop-color="#000dff"/><stop offset="0.1461" stop-color="#0001ff"/><stop offset="0.6848" stop-color="#a300ff"/><stop offset="0.9628" stop-color="#ff00fd"/><stop offset="0.9971" stop-color="#ff00f2"/><stop offset="1.0000" stop-color="#ff00f1"/></linearGradient></defs><rect x="1149" y="149" width="349" height="2" fill="url(#ci0)"/><rect x="1149" y="151" width="349" height="2" fill="url(#ci1)"/><rect x="1149" y="153" width="349" height="2" fill="url(#ci2)"/><rect x="1149" y="155" width="349" height="2" fill="url(#ci3)"/><rect x="1149" y="157" width="349" height="2" fill="url(#ci4)"/><rect x="1149" y="159" width="349" height="2" fill="url(#ci5)"/><rect x="1149" y="161" width="349" height="2" fill="url(#ci6)"/><rect x="1149" y="163" width="349" height="2" fill="url(#ci7)"/><rect x="1149" y="165" width="349" height="2" fill="url(#ci8)"/><rect x="1149" y="167" width="349" height="2" fill="url(#ci9)"/><rect x="1149" y="169" width="349" height="2" fill="url(#ci10)"/><rect x="1149" y="171" width="349" height="2" fill="url(#ci11)"/><rect x="1149" y="173" width="349" height="2" fill="url(#ci12)"/><rect x="1149" y="175" width="349" height="2" fill="url(#ci13)"/><rect x="1149" y="177" width="349" height="2" fill="url(#ci14)"/><rect x="1149" y="179" width="349" height="2" fill="url(#ci15)"/><rect x="1149" y="181" width="349" height="2" fill="url(#ci16)"/><rect x="1149" y="183" width="349" height="2" fill="url(#ci17)"/><rect x="1149" y="185" width="349" height="2" fill="url(#ci18)"/><rect x="1149" y="187" width="349" height="2" fill="url(#ci19)"/><rect x="1149" y="189" width="349" height="2" fill="url(#ci20)"/><rect x="1149" y="191" width="349" height="2" fill="url(#ci21)"/><rect x="1149" y="193" width="349" height="2" fill="url(#ci22)"/><rect x="1149" y="195" width="349" height="2" fill="url(#ci23)"/><rect x="1149" y="197" width="349" height="2" fill="url(#ci24)"/><rect x="1149" y="199" width="349" height="2" fill="url(#ci25)"/><rect x="1149" y="201" width="349" height="2" fill="url(#ci26)"/><rect x="1149" y="203" width="349" height="2" fill="url(#ci27)"/><rect x="1149" y="205" width="349" height="2" fill="url(#ci28)"/><rect x="1149" y="207" width="349" height="2" fill="url(#ci29)"/><rect x="1149" y="209" width="349" height="2" fill="url(#ci30)"/><rect x="1149" y="211" width="349" height="2" fill="url(#ci31)"/><rect x="1149" y="213" width="349" height="2" fill="url(#ci32)"/><rect x="1149" y="215" width="349" height="2" fill="url(#ci33)"/><rect x="1149" y="217" width="349" height="2" fill="url(#ci34)"/><rect x="1149" y="219" width="349" height="2" fill="url(#ci35)"/><rect x="1149" y="221" width="349" height="2" fill="url(#ci36)"/><rect x="1149" y="223" width="349" height="2" fill="url(#ci37)"/><rect x="1149" y="225" width="349" height="2" fill="url(#ci38)"/><rect x="1149" y="227" width="349" height="2" fill="url(#ci39)"/><rect x="1149" y="229" width="349" height="2" fill="url(#ci40)"/><rect x="1149" y="231" width="349" height="2" fill="url(#ci41)"/><rect x="1149" y="233" width="349" height="2" fill="url(#ci42)"/><rect x="1149" y="235" width="349" height="2" fill="url(#ci43)"/><rect x="1149" y="237" width="349" height="2" fill="url(#ci44)"/><rect x="1149" y="239" width="349" height="2" fill="url(#ci45)"/><rect x="1149" y="241" width="349" height="2" fill="url(#ci46)"/><rect x="1149" y="243" width="349" height="2" fill="url(#ci47)"/><rect x="1149" y="245" width="349" height="2" fill="url(#ci48)"/><rect x="1149" y="247" width="349" height="2" fill="url(#ci49)"/><rect x="1149" y="249" width="349" height="2" fill="url(#ci50)"/><rect x="1149" y="251" width="349" height="2" fill="url(#ci51)"/><rect x="1149" y="253" width="349" height="2" fill="url(#ci52)"/><rect x="1149" y="255" width="349" height="2" fill="url(#ci53)"/><rect x="1149" y="257" width="349" height="2" fill="url(#ci54)"/><rect x="1149" y="259" width="349" height="2" fill="url(#ci55)"/><rect x="1149" y="261" width="349" height="2" fill="url(#ci56)"/><rect x="1149" y="263" width="349" height="2" fill="url(#ci57)"/><rect x="1149" y="265" width="349" height="2" fill="url(#ci58)"/><rect x="1149" y="267" width="349" height="2" fill="url(#ci59)"/><rect x="1149" y="269" width="349" height="2" fill="url(#ci60)"/><rect x="1149" y="271" width="349" height="2" fill="url(#ci61)"/><rect x="1149" y="273" width="349" height="2" fill="url(#ci62)"/><rect x="1149" y="275" width="349" height="2" fill="url(#ci63)"/><rect x="1149" y="277" width="349" height="2" fill="url(#ci64)"/><rect x="1149" y="279" width="349" height="2" fill="url(#ci65)"/><rect x="1149" y="281" width="349" height="2" fill="url(#ci66)"/><rect x="1149" y="283" width="349" height="2" fill="url(#ci67)"/><rect x="1149" y="285" width="349" height="2" fill="url(#ci68)"/><rect x="1149" y="287" width="349" height="2" fill="url(#ci69)"/><rect x="1149" y="289" width="349" height="2" fill="url(#ci70)"/><rect x="1149" y="291" width="349" height="2" fill="url(#ci71)"/><rect x="1149" y="293" width="349" height="2" fill="url(#ci72)"/><rect x="1149" y="295" width="349" height="2" fill="url(#ci73)"/><rect x="1149" y="297" width="349" height="2" fill="url(#ci74)"/><rect x="1149" y="299" width="349" height="2" fill="url(#ci75)"/><rect x="1149" y="301" width="349" height="2" fill="url(#ci76)"/><rect x="1149" y="303" width="349" height="2" fill="url(#ci77)"/><rect x="1149" y="305" width="349" height="2" fill="url(#ci78)"/><rect x="1149" y="307" width="349" height="2" fill="url(#ci79)"/><rect x="1149" y="309" width="349" height="2" fill="url(#ci80)"/><rect x="1149" y="311" width="349" height="2" fill="url(#ci81)"/><rect x="1149" y="313" width="349" height="2" fill="url(#ci82)"/><rect x="1149" y="315" width="349" height="2" fill="url(#ci83)"/><rect x="1149" y="317" width="349" height="2" fill="url(#ci84)"/><rect x="1149" y="319" width="349" height="2" fill="url(#ci85)"/><rect x="1149" y="321" width="349" height="2" fill="url(#ci86)"/><rect x="1149" y="323" width="349" height="2" fill="url(#ci87)"/><rect x="1149" y="325" width="349" height="2" fill="url(#ci88)"/><rect x="1149" y="327" width="349" height="2" fill="url(#ci89)"/><rect x="1149" y="329" width="349" height="2" fill="url(#ci90)"/><rect x="1149" y="331" width="349" height="2" fill="url(#ci91)"/><rect x="1149" y="333" width="349" height="2" fill="url(#ci92)"/><rect x="1149" y="335" width="349" height="2" fill="url(#ci93)"/><rect x="1149" y="337" width="349" height="2" fill="url(#ci94)"/><rect x="1149" y="339" width="349" height="2" fill="url(#ci95)"/><rect x="1149" y="341" width="349" height="2" fill="url(#ci96)"/><rect x="1149" y="343" width="349" height="2" fill="url(#ci97)"/><rect x="1149" y="345" width="349" height="2" fill="url(#ci98)"/><rect x="1149" y="347" width="349" height="2" fill="url(#ci99)"/><rect x="1149" y="349" width="349" height="2" fill="url(#ci100)"/><rect x="1149" y="351" width="349" height="2" fill="url(#ci101)"/><rect x="1149" y="353" width="349" height="2" fill="url(#ci102)"/><rect x="1149" y="355" width="349" height="2" fill="url(#ci103)"/><rect x="1149" y="357" width="349" height="2" fill="url(#ci104)"/><rect x="1149" y="359" width="349" height="2" fill="url(#ci105)"/><rect x="1149" y="361" width="349" height="2" fill="url(#ci106)"/><rect x="1149" y="363" width="349" height="2" fill="url(#ci107)"/><rect x="1149" y="365" width="349" height="2" fill="url(#ci108)"/><rect x="1149" y="367" width="349" height="2" fill="url(#ci109)"/><rect x="1149" y="369" width="349" height="2" fill="url(#ci110)"/><rect x="1149" y="371" width="349" height="2" fill="url(#ci111)"/><rect x="1149" y="373" width="349" height="2" fill="url(#ci112)"/><rect x="1149" y="375" width="349" height="2" fill="url(#ci113)"/><rect x="1149" y="377" width="349" height="2" fill="url(#ci114)"/><rect x="1149" y="379" width="349" height="2" fill="url(#ci115)"/><rect x="1149" y="381" width="349" height="2" fill="url(#ci116)"/><rect x="1149" y="383" width="349" height="2" fill="url(#ci117)"/><rect x="1149" y="385" width="349" height="2" fill="url(#ci118)"/><rect x="1149" y="387" width="349" height="2" fill="url(#ci119)"/><rect x="1149" y="389" width="349" height="2" fill="url(#ci120)"/><rect x="1149" y="391" width="349" height="2" fill="url(#ci121)"/><rect x="1149" y="393" width="349" height="2" fill="url(#ci122)"/><rect x="1149" y="395" width="349" height="2" fill="url(#ci123)"/><rect x="1149" y="397" width="349" height="2" fill="url(#ci124)"/><rect x="1149" y="399" width="349" height="2" fill="url(#ci125)"/><rect x="1149" y="401" width="349" height="2" fill="url(#ci126)"/><rect x="1149" y="403" width="349" height="2" fill="url(#ci127)"/><rect x="1149" y="405" width="349" height="2" fill="url(#ci128)"/><rect x="1149" y="407" width="349" height="2" fill="url(#ci129)"/><rect x="1149" y="409" width="349" height="2" fill="url(#ci130)"/><rect x="1149" y="411" width="349" height="2" fill="url(#ci131)"/><rect x="1149" y="413" width="349" height="2" fill="url(#ci132)"/><rect x="1149" y="415" width="349" height="2" fill="url(#ci133)"/><rect x="1149" y="417" width="349" height="2" fill="url(#ci134)"/><rect x="1149" y="419" width="349" height="2" fill="url(#ci135)"/><rect x="1149" y="421" width="349" height="2" fill="url(#ci136)"/><rect x="1149" y="423" width="349" height="2" fill="url(#ci137)"/><rect x="1149" y="425" width="349" height="2" fill="url(#ci138)"/><rect x="1149" y="427" width="349" height="2" fill="url(#ci139)"/><rect x="1149" y="429" width="349" height="2" fill="url(#ci140)"/><rect x="1149" y="431" width="349" height="2" fill="url(#ci141)"/><rect x="1149" y="433" width="349" height="2" fill="url(#ci142)"/><rect x="1149" y="435" width="349" height="2" fill="url(#ci143)"/><rect x="1149" y="437" width="349" height="2" fill="url(#ci144)"/><rect x="1149" y="439" width="349" height="2" fill="url(#ci145)"/><rect x="1149" y="441" width="349" height="2" fill="url(#ci146)"/><rect x="1149" y="443" width="349" height="2" fill="url(#ci147)"/><rect x="1149" y="445" width="349" height="2" fill="url(#ci148)"/><rect x="1149" y="447" width="349" height="2" fill="url(#ci149)"/><rect x="1149" y="449" width="349" height="2" fill="url(#ci150)"/><rect x="1149" y="451" width="349" height="2" fill="url(#ci151)"/><rect x="1149" y="453" width="349" height="2" fill="url(#ci152)"/><rect x="1149" y="455" width="349" height="2" fill="url(#ci153)"/><rect x="1149" y="457" width="349" height="2" fill="url(#ci154)"/><rect x="1149" y="459" width="349" height="2" fill="url(#ci155)"/><rect x="1149" y="461" width="349" height="2" fill="url(#ci156)"/><rect x="1149" y="463" width="349" height="2" fill="url(#ci157)"/><rect x="1149" y="465" width="349" height="2" fill="url(#ci158)"/><rect x="1149" y="467" width="349" height="2" fill="url(#ci159)"/><rect x="1149" y="469" width="349" height="2" fill="url(#ci160)"/><rect x="1149" y="471" width="349" height="2" fill="url(#ci161)"/><rect x="1149" y="473" width="349" height="2" fill="url(#ci162)"/><rect x="1149" y="475" width="349" height="2" fill="url(#ci163)"/><rect x="1149" y="477" width="349" height="2" fill="url(#ci164)"/><rect x="1149" y="479" width="349" height="2" fill="url(#ci165)"/><rect x="1149" y="481" width="349" height="2" fill="url(#ci166)"/><rect x="1149" y="483" width="349" height="1" fill="url(#ci167)"/></g></g>
<path d="M1017.5,612 V120.5 H1660" fill="none" stroke="#9a9a9a" stroke-width="1.2"/>
<line x1="1017" y1="611.5" x2="1660" y2="611.5" stroke="#9a9a9a" stroke-width="1.2"/>
<line x1="1011" y1="612.0" x2="1017" y2="612.0" stroke="#bdbdbd" stroke-width="1.2"/>
<text x="1010.0" y="616.6" font-size="14" fill="#d2d2d2" text-anchor="end" font-weight="normal" >0</text>
<line x1="1017.0" y1="612" x2="1017.0" y2="618" stroke="#bdbdbd" stroke-width="1.8"/>
<text x="1017.0" y="633.0" font-size="14" fill="#d2d2d2" text-anchor="middle" font-weight="normal" >0</text>
<line x1="1011" y1="571.0" x2="1017" y2="571.0" stroke="#bdbdbd" stroke-width="1.2"/>
<text x="1010.0" y="575.6" font-size="14" fill="#d2d2d2" text-anchor="end" font-weight="normal" >0,05</text>
<line x1="1070.2" y1="612" x2="1070.2" y2="618" stroke="#bdbdbd" stroke-width="1.2"/>
<text x="1070.2" y="633.0" font-size="14" fill="#d2d2d2" text-anchor="middle" font-weight="normal" >0,05</text>
<line x1="1011" y1="530.0" x2="1017" y2="530.0" stroke="#bdbdbd" stroke-width="1.2"/>
<text x="1010.0" y="534.6" font-size="14" fill="#d2d2d2" text-anchor="end" font-weight="normal" >0,1</text>
<line x1="1123.4" y1="612" x2="1123.4" y2="618" stroke="#bdbdbd" stroke-width="1.2"/>
<text x="1123.4" y="633.0" font-size="14" fill="#d2d2d2" text-anchor="middle" font-weight="normal" >0,1</text>
<line x1="1011" y1="489.0" x2="1017" y2="489.0" stroke="#bdbdbd" stroke-width="1.2"/>
<text x="1010.0" y="493.6" font-size="14" fill="#d2d2d2" text-anchor="end" font-weight="normal" >0,15</text>
<line x1="1176.6" y1="612" x2="1176.6" y2="618" stroke="#bdbdbd" stroke-width="1.2"/>
<text x="1176.6" y="633.0" font-size="14" fill="#d2d2d2" text-anchor="middle" font-weight="normal" >0,15</text>
<line x1="1011" y1="448.0" x2="1017" y2="448.0" stroke="#bdbdbd" stroke-width="1.2"/>
<text x="1010.0" y="452.6" font-size="14" fill="#d2d2d2" text-anchor="end" font-weight="normal" >0,2</text>
<line x1="1229.8" y1="612" x2="1229.8" y2="618" stroke="#bdbdbd" stroke-width="1.2"/>
<text x="1229.8" y="633.0" font-size="14" fill="#d2d2d2" text-anchor="middle" font-weight="normal" >0,2</text>
<line x1="1011" y1="407.0" x2="1017" y2="407.0" stroke="#bdbdbd" stroke-width="1.2"/>
<text x="1010.0" y="411.6" font-size="14" fill="#d2d2d2" text-anchor="end" font-weight="normal" >0,25</text>
<line x1="1283.0" y1="612" x2="1283.0" y2="618" stroke="#bdbdbd" stroke-width="1.2"/>
<text x="1283.0" y="633.0" font-size="14" fill="#d2d2d2" text-anchor="middle" font-weight="normal" >0,25</text>
<line x1="1011" y1="366.0" x2="1017" y2="366.0" stroke="#bdbdbd" stroke-width="1.2"/>
<text x="1010.0" y="370.6" font-size="14" fill="#d2d2d2" text-anchor="end" font-weight="normal" >0,3</text>
<line x1="1336.2" y1="612" x2="1336.2" y2="618" stroke="#bdbdbd" stroke-width="1.2"/>
<text x="1336.2" y="633.0" font-size="14" fill="#d2d2d2" text-anchor="middle" font-weight="normal" >0,3</text>
<line x1="1011" y1="325.0" x2="1017" y2="325.0" stroke="#bdbdbd" stroke-width="1.2"/>
<text x="1010.0" y="329.6" font-size="14" fill="#d2d2d2" text-anchor="end" font-weight="normal" >0,35</text>
<line x1="1389.4" y1="612" x2="1389.4" y2="618" stroke="#bdbdbd" stroke-width="1.2"/>
<text x="1389.4" y="633.0" font-size="14" fill="#d2d2d2" text-anchor="middle" font-weight="normal" >0,35</text>
<line x1="1011" y1="284.0" x2="1017" y2="284.0" stroke="#bdbdbd" stroke-width="1.2"/>
<text x="1010.0" y="288.6" font-size="14" fill="#d2d2d2" text-anchor="end" font-weight="normal" >0,4</text>
<line x1="1442.6" y1="612" x2="1442.6" y2="618" stroke="#bdbdbd" stroke-width="1.2"/>
<text x="1442.6" y="633.0" font-size="14" fill="#d2d2d2" text-anchor="middle" font-weight="normal" >0,4</text>
<line x1="1011" y1="243.0" x2="1017" y2="243.0" stroke="#bdbdbd" stroke-width="1.2"/>
<text x="1010.0" y="247.6" font-size="14" fill="#d2d2d2" text-anchor="end" font-weight="normal" >0,45</text>
<line x1="1495.8" y1="612" x2="1495.8" y2="618" stroke="#bdbdbd" stroke-width="1.2"/>
<text x="1495.8" y="633.0" font-size="14" fill="#d2d2d2" text-anchor="middle" font-weight="normal" >0,45</text>
<line x1="1011" y1="202.0" x2="1017" y2="202.0" stroke="#bdbdbd" stroke-width="1.2"/>
<text x="1010.0" y="206.6" font-size="14" fill="#d2d2d2" text-anchor="end" font-weight="normal" >0,5</text>
<line x1="1549.0" y1="612" x2="1549.0" y2="618" stroke="#bdbdbd" stroke-width="1.2"/>
<text x="1549.0" y="633.0" font-size="14" fill="#d2d2d2" text-anchor="middle" font-weight="normal" >0,5</text>
<line x1="1011" y1="161.0" x2="1017" y2="161.0" stroke="#bdbdbd" stroke-width="1.2"/>
<text x="1010.0" y="165.6" font-size="14" fill="#d2d2d2" text-anchor="end" font-weight="normal" >0,55</text>
<line x1="1602.2" y1="612" x2="1602.2" y2="618" stroke="#bdbdbd" stroke-width="1.2"/>
<text x="1602.2" y="633.0" font-size="14" fill="#d2d2d2" text-anchor="middle" font-weight="normal" >0,55</text>
<rect x="1143.0" y="143.0" width="13" height="13" fill="none" stroke="#f2f2f2" stroke-width="2"/>
<circle cx="1145.0" cy="146.4" r="4.5" fill="#10a010" stroke="#000" stroke-width="1.25"/>
<rect x="1227.1" y="150.8" width="13" height="13" fill="none" stroke="#f2f2f2" stroke-width="2"/>
<circle cx="1231.0" cy="153.3" r="4.5" fill="#b0b000" stroke="#000" stroke-width="1.25"/>
<rect x="1158.1" y="231.0" width="13" height="13" fill="none" stroke="#f2f2f2" stroke-width="2"/>
<circle cx="1155.7" cy="230.8" r="4.5" fill="#10a8a8" stroke="#000" stroke-width="1.25"/>
<rect x="1219.9" y="219.8" width="13" height="13" fill="none" stroke="#000" stroke-width="2"/>
<circle cx="1223.9" cy="225.3" r="4.5" fill="#ffffff" stroke="#000" stroke-width="1.25"/>
<rect x="1490.0" y="175.5" width="13" height="13" fill="none" stroke="#f2f2f2" stroke-width="2"/>
<circle cx="1501.6" cy="179.5" r="4.5" fill="#cc0000" stroke="#000" stroke-width="1.25"/>
<rect x="1335.0" y="333.0" width="13" height="13" fill="none" stroke="#f8d8f8" stroke-width="2"/>
<circle cx="1350.4" cy="339.9" r="4.5" fill="#a800b8" stroke="#000" stroke-width="1.25"/>
<rect x="1197.0" y="475.0" width="13" height="13" fill="none" stroke="#f2f2f2" stroke-width="2"/>
<circle cx="1202.0" cy="482.7" r="4.5" fill="#0000d0" stroke="#000" stroke-width="1.25"/>
<rect x="1401" y="579" width="260" height="27" fill="#2c2c2c"/>
<text x="1402.0" y="601.0" font-size="19.6" fill="#f2f2f2" text-anchor="start" font-weight="normal" >Gamut Coverage:&#160; 109,2%</text>
<text x="13.0" y="713.0" font-size="30" fill="#f2f2f2" text-anchor="start" font-weight="normal" >Current Reading</text>
<text x="13.0" y="782.5" font-size="25" fill="#f2f2f2" text-anchor="start" font-weight="normal" >x: 0,3108</text>
<text x="169.0" y="782.5" font-size="25" fill="#f2f2f2" text-anchor="start" font-weight="normal" >y: 0,3327</text>
<text x="13.0" y="823.5" font-size="25" fill="#f2f2f2" text-anchor="start" font-weight="normal" >fL: 99,86</text>
<text x="13.0" y="863.5" font-size="25" fill="#f2f2f2" text-anchor="start" font-weight="normal" textLength="159" lengthAdjust="spacing">cd/m&#178;: 342,16</text>
<text x="465.5" y="680.5" font-size="14.2" fill="#c8c8c8" text-anchor="middle" font-weight="normal" >RGB Balance</text>
<rect x="355.5" y="685.5" width="250" height="180" fill="#232323" stroke="#8f8f8f" stroke-width="1.2"/>
<line x1="349" y1="704.6" x2="605.5" y2="704.6" stroke="#8f8f8f" stroke-width="1.2"/>
<line x1="349" y1="704.6" x2="355.5" y2="704.6" stroke="#bdbdbd" stroke-width="1.2"/>
<text x="349.0" y="709.2" font-size="14" fill="#d2d2d2" text-anchor="end" font-weight="normal" >104</text>
<line x1="349" y1="740.6" x2="605.5" y2="740.6" stroke="#8f8f8f" stroke-width="1.2"/>
<line x1="349" y1="740.6" x2="355.5" y2="740.6" stroke="#bdbdbd" stroke-width="1.2"/>
<text x="349.0" y="745.2" font-size="14" fill="#d2d2d2" text-anchor="end" font-weight="normal" >102</text>
<line x1="349" y1="776.7" x2="605.5" y2="776.7" stroke="#8f8f8f" stroke-width="1.2"/>
<line x1="349" y1="776.7" x2="355.5" y2="776.7" stroke="#bdbdbd" stroke-width="1.2"/>
<text x="349.0" y="781.3" font-size="14" fill="#d2d2d2" text-anchor="end" font-weight="normal" >100</text>
<line x1="349" y1="812.8" x2="605.5" y2="812.8" stroke="#8f8f8f" stroke-width="1.2"/>
<line x1="349" y1="812.8" x2="355.5" y2="812.8" stroke="#bdbdbd" stroke-width="1.2"/>
<text x="349.0" y="817.4" font-size="14" fill="#d2d2d2" text-anchor="end" font-weight="normal" >98</text>
<line x1="349" y1="848.8" x2="605.5" y2="848.8" stroke="#8f8f8f" stroke-width="1.2"/>
<line x1="349" y1="848.8" x2="355.5" y2="848.8" stroke="#bdbdbd" stroke-width="1.2"/>
<text x="349.0" y="853.4" font-size="14" fill="#d2d2d2" text-anchor="end" font-weight="normal" >96</text>
<rect x="380" y="807.6" width="66" height="58" fill="url(#rbR)" stroke="#000" stroke-width="1.5"/>
<rect x="446.5" y="765.6" width="65.3" height="100" fill="url(#rbG)" stroke="#000" stroke-width="1.5"/>
<rect x="513.3" y="790.4" width="65.7" height="75.2" fill="url(#rbB)" stroke="#000" stroke-width="1.5"/>
<line x1="355.5" y1="865.5" x2="355.5" y2="871" stroke="#bdbdbd" stroke-width="1.2"/>
<line x1="605.5" y1="865.5" x2="605.5" y2="871" stroke="#bdbdbd" stroke-width="1.2"/>
<text x="480.0" y="882.5" font-size="14.5" fill="#d2d2d2" text-anchor="middle" font-weight="normal" >100W</text>
<text x="806.0" y="672.0" font-size="14.2" fill="#c8c8c8" text-anchor="middle" font-weight="normal" >CIE 1931 xy</text>
<defs><linearGradient id="xy0" gradientUnits="userSpaceOnUse" x1="636" y1="0" x2="976" y2="0"><stop offset="0.0000" stop-color="#88ffd1"/><stop offset="0.6912" stop-color="#f0ffcc"/><stop offset="0.8118" stop-color="#fffac7"/><stop offset="0.9971" stop-color="#ffdeb0"/><stop offset="1.0000" stop-color="#ffdeb0"/></linearGradient><linearGradient id="xy1" gradientUnits="userSpaceOnUse" x1="636" y1="0" x2="976" y2="0"><stop offset="0.0000" stop-color="#89ffd2"/><stop offset="0.6912" stop-color="#f1ffce"/><stop offset="0.7882" stop-color="#fffccb"/><stop offset="0.9735" stop-color="#ffe0b3"/><stop offset="0.9971" stop-color="#ffddb1"/><stop offset="1.0000" stop-color="#ffddb0"/></linearGradient><linearGradient id="xy2" gradientUnits="userSpaceOnUse" x1="636" y1="0" x2="976" y2="0"><stop offset="0.0000" stop-color="#8affd3"/><stop offset="0.6912" stop-color="#f3ffcf"/><stop offset="0.7882" stop-color="#fffbcb"/><stop offset="0.9735" stop-color="#ffdfb3"/><stop offset="0.9971" stop-color="#ffdcb1"/><stop offset="1.0000" stop-color="#ffdbb0"/></linearGradient><linearGradient id="xy3" gradientUnits="userSpaceOnUse" x1="636" y1="0" x2="976" y2="0"><stop offset="0.0000" stop-color="#8bffd5"/><stop offset="0.6912" stop-color="#f4ffd1"/><stop offset="0.7882" stop-color="#fff9cb"/><stop offset="0.9735" stop-color="#ffdeb4"/><stop offset="0.9971" stop-color="#ffdab1"/><stop offset="1.0000" stop-color="#ffdab1"/></linearGradient><linearGradient id="xy4" gradientUnits="userSpaceOnUse" x1="636" y1="0" x2="976" y2="0"><stop offset="0.0000" stop-color="#8cffd6"/><stop offset="0.6912" stop-color="#f6ffd2"/><stop offset="0.7882" stop-color="#fff8cc"/><stop offset="0.9735" stop-color="#ffdcb4"/><stop offset="0.9971" stop-color="#ffd9b1"/><stop offset="1.0000" stop-color="#ffd9b1"/></linearGradient><linearGradient id="xy5" gradientUnits="userSpaceOnUse" x1="636" y1="0" x2="976" y2="0"><stop offset="0.0000" stop-color="#8dffd7"/><stop offset="0.6912" stop-color="#f7ffd4"/><stop offset="0.7706" stop-color="#fff9ce"/><stop offset="1.0000" stop-color="#ffd8b1"/></linearGradient><linearGradient id="xy6" gradientUnits="userSpaceOnUse" x1="636" y1="0" x2="976" y2="0"><stop offset="0.0000" stop-color="#8effd9"/><stop offset="0.6912" stop-color="#f9ffd5"/><stop offset="0.7882" stop-color="#fff5cc"/><stop offset="0.9735" stop-color="#ffdab4"/><stop offset="0.9971" stop-color="#ffd7b2"/><stop offset="1.0000" stop-color="#ffd6b1"/></linearGradient><linearGradient id="xy7" gradientUnits="userSpaceOnUse" x1="636" y1="0" x2="976" y2="0"><stop offset="0.0000" stop-color="#8fffda"/><stop offset="0.6912" stop-color="#faffd6"/><stop offset="0.8412" stop-color="#ffebc5"/><stop offset="0.9912" stop-color="#ffd6b3"/><stop offset="1.0000" stop-color="#ffd5b2"/></linearGradient><linearGradient id="xy8" gradientUnits="userSpaceOnUse" x1="636" y1="0" x2="976" y2="0"><stop offset="0.0000" stop-color="#90ffdb"/><stop offset="0.6912" stop-color="#fcffd8"/><stop offset="0.9765" stop-color="#ffd7b5"/><stop offset="1.0000" stop-color="#ffd4b2"/></linearGradient><linearGradient id="xy9" gradientUnits="userSpaceOnUse" x1="636" y1="0" x2="976" y2="0"><stop offset="0.0000" stop-color="#91ffdd"/><stop offset="0.6912" stop-color="#fdffd9"/><stop offset="0.9765" stop-color="#ffd6b5"/><stop offset="1.0000" stop-color="#ffd3b2"/></linearGradient><linearGradient id="xy10" gradientUnits="userSpaceOnUse" x1="636" y1="0" x2="976" y2="0"><stop offset="0.0000" stop-color="#92ffde"/><stop offset="0.6912" stop-color="#ffffdb"/><stop offset="0.9765" stop-color="#ffd4b5"/><stop offset="1.0000" stop-color="#ffd1b2"/></linearGradient><linearGradient id="xy11" gradientUnits="userSpaceOnUse" x1="636" y1="0" x2="976" y2="0"><stop offset="0.0000" stop-color="#93ffdf"/><stop offset="0.6912" stop-color="#fffedb"/><stop offset="0.9765" stop-color="#ffd3b5"/><stop offset="1.0000" stop-color="#ffd0b3"/></linearGradient><linearGradient id="xy12" gradientUnits="userSpaceOnUse" x1="636" y1="0" x2="976" y2="0"><stop offset="0.0000" stop-color="#94ffe1"/><stop offset="0.6912" stop-color="#fffcdc"/><stop offset="0.9765" stop-color="#ffd2b6"/><stop offset="1.0000" stop-color="#ffcfb3"/></linearGradient><linearGradient id="xy13" gradientUnits="userSpaceOnUse" x1="636" y1="0" x2="976" y2="0"><stop offset="0.0000" stop-color="#95ffe2"/><stop offset="0.5529" stop-color="#ecffe0"/><stop offset="0.6735" stop-color="#fffede"/><stop offset="0.9588" stop-color="#ffd3b8"/><stop offset="0.9941" stop-color="#ffceb4"/><stop offset="1.0000" stop-color="#ffceb3"/></linearGradient><linearGradient id="xy14" gradientUnits="userSpaceOnUse" x1="636" y1="0" x2="976" y2="0"><stop offset="0.0000" stop-color="#96ffe4"/><stop offset="0.5529" stop-color="#edffe2"/><stop offset="0.6735" stop-color="#fffcdf"/><stop offset="0.9588" stop-color="#ffd2b8"/><stop offset="0.9941" stop-color="#ffcdb4"/><stop offset="1.0000" stop-color="#ffccb3"/></linearGradient><linearGradient id="xy15" gradientUnits="userSpaceOnUse" x1="636" y1="0" x2="976" y2="0"><stop offset="0.0000" stop-color="#97ffe5"/><stop offset="0.5529" stop-color="#eeffe3"/><stop offset="0.6735" stop-color="#fffbdf"/><stop offset="0.9588" stop-color="#ffd0b8"/><stop offset="0.9941" stop-color="#ffccb4"/><stop offset="1.0000" stop-color="#ffcbb4"/></linearGradient><linearGradient id="xy16" gradientUnits="userSpaceOnUse" x1="636" y1="0" x2="976" y2="0"><stop offset="0.0000" stop-color="#98ffe6"/><stop offset="0.5529" stop-color="#f0ffe5"/><stop offset="0.6500" stop-color="#fffde3"/><stop offset="0.9353" stop-color="#ffd2bb"/><stop offset="1.0000" stop-color="#ffcab4"/></linearGradient><linearGradient id="xy17" gradientUnits="userSpaceOnUse" x1="636" y1="0" x2="976" y2="0"><stop offset="0.0000" stop-color="#99ffe8"/><stop offset="0.5529" stop-color="#f1ffe6"/><stop offset="0.6500" stop-color="#fffce3"/><stop offset="0.9353" stop-color="#ffd1bc"/><stop offset="1.0000" stop-color="#ffc9b4"/></linearGradient><linearGradient id="xy18" gradientUnits="userSpaceOnUse" x1="636" y1="0" x2="976" y2="0"><stop offset="0.0000" stop-color="#9affe9"/><stop offset="0.5529" stop-color="#f3ffe8"/><stop offset="0.6500" stop-color="#fffae3"/><stop offset="0.9353" stop-color="#ffd0bc"/><stop offset="1.0000" stop-color="#ffc8b4"/></linearGradient><linearGradient id="xy19" gradientUnits="userSpaceOnUse" x1="636" y1="0" x2="976" y2="0"><stop offset="0.0000" stop-color="#9bffeb"/><stop offset="0.5529" stop-color="#f4ffe9"/><stop offset="0.6500" stop-color="#fff9e3"/><stop offset="0.9353" stop-color="#ffcfbc"/><stop offset="1.0000" stop-color="#ffc6b5"/></linearGradient><linearGradient id="xy20" gradientUnits="userSpaceOnUse" x1="636" y1="0" x2="976" y2="0"><stop offset="0.0000" stop-color="#9cffec"/><stop offset="0.5529" stop-color="#f6ffeb"/><stop offset="0.6324" stop-color="#fffae6"/><stop offset="0.9882" stop-color="#ffc7b6"/><stop offset="1.0000" stop-color="#ffc5b5"/></linearGradient><linearGradient id="xy21" gradientUnits="userSpaceOnUse" x1="636" y1="0" x2="976" y2="0"><stop offset="0.0000" stop-color="#9effee"/><stop offset="0.5529" stop-color="#f7ffed"/><stop offset="0.6324" stop-color="#fff9e6"/><stop offset="0.9882" stop-color="#ffc6b6"/><stop offset="1.0000" stop-color="#ffc4b5"/></linearGradient><linearGradient id="xy22" gradientUnits="userSpaceOnUse" x1="636" y1="0" x2="976" y2="0"><stop offset="0.0000" stop-color="#9fffef"/><stop offset="0.5529" stop-color="#f9ffee"/><stop offset="0.6500" stop-color="#fff4e4"/><stop offset="0.9353" stop-color="#ffcbbd"/><stop offset="1.0000" stop-color="#ffc3b5"/></linearGradient><linearGradient id="xy23" gradientUnits="userSpaceOnUse" x1="636" y1="0" x2="976" y2="0"><stop offset="0.0000" stop-color="#a0fff1"/><stop offset="0.5529" stop-color="#fbfff0"/><stop offset="0.7824" stop-color="#ffded1"/><stop offset="0.9676" stop-color="#ffc6b9"/><stop offset="0.9971" stop-color="#ffc2b6"/><stop offset="1.0000" stop-color="#ffc2b6"/></linearGradient><linearGradient id="xy24" gradientUnits="userSpaceOnUse" x1="636" y1="0" x2="976" y2="0"><stop offset="0.0000" stop-color="#a1fff2"/><stop offset="0.5529" stop-color="#fcfff1"/><stop offset="0.9971" stop-color="#ffc1b6"/><stop offset="1.0000" stop-color="#ffc1b6"/></linearGradient><linearGradient id="xy25" gradientUnits="userSpaceOnUse" x1="636" y1="0" x2="976" y2="0"><stop offset="0.0000" stop-color="#a2fff4"/><stop offset="0.5529" stop-color="#fefff3"/><stop offset="0.9971" stop-color="#ffc0b6"/><stop offset="1.0000" stop-color="#ffbfb6"/></linearGradient><linearGradient id="xy26" gradientUnits="userSpaceOnUse" x1="636" y1="0" x2="976" y2="0"><stop offset="0.0000" stop-color="#a3fff5"/><stop offset="0.5529" stop-color="#fffff5"/><stop offset="0.9971" stop-color="#ffbfb7"/><stop offset="1.0000" stop-color="#ffbeb6"/></linearGradient><linearGradient id="xy27" gradientUnits="userSpaceOnUse" x1="636" y1="0" x2="976" y2="0"><stop offset="0.0000" stop-color="#a4fff7"/><stop offset="0.5529" stop-color="#fffdf5"/><stop offset="0.9971" stop-color="#ffbdb7"/><stop offset="1.0000" stop-color="#ffbdb6"/></linearGradient><linearGradient id="xy28" gradientUnits="userSpaceOnUse" x1="636" y1="0" x2="976" y2="0"><stop offset="0.0000" stop-color="#a5fff9"/><stop offset="0.5529" stop-color="#fffcf5"/><stop offset="0.9971" stop-color="#ffbcb7"/><stop offset="1.0000" stop-color="#ffbcb7"/></linearGradient><linearGradient id="xy29" gradientUnits="userSpaceOnUse" x1="636" y1="0" x2="976" y2="0"><stop offset="0.0000" stop-color="#a7fffa"/><stop offset="0.4441" stop-color="#f0fffa"/><stop offset="0.5412" stop-color="#fffcf7"/><stop offset="0.9853" stop-color="#ffbcb9"/><stop offset="1.0000" stop-color="#ffbbb7"/></linearGradient><linearGradient id="xy30" gradientUnits="userSpaceOnUse" x1="636" y1="0" x2="976" y2="0"><stop offset="0.0000" stop-color="#a8fffc"/><stop offset="0.4441" stop-color="#f2fffc"/><stop offset="0.5412" stop-color="#fffaf7"/><stop offset="0.9853" stop-color="#ffbbb9"/><stop offset="1.0000" stop-color="#ffbab7"/></linearGradient><linearGradient id="xy31" gradientUnits="userSpaceOnUse" x1="636" y1="0" x2="976" y2="0"><stop offset="0.0000" stop-color="#a9fffd"/><stop offset="0.4441" stop-color="#f4fffd"/><stop offset="0.5412" stop-color="#fff9f7"/><stop offset="0.9853" stop-color="#ffbab9"/><stop offset="1.0000" stop-color="#ffb9b7"/></linearGradient><linearGradient id="xy32" gradientUnits="userSpaceOnUse" x1="636" y1="0" x2="976" y2="0"><stop offset="0.0000" stop-color="#aaffff"/><stop offset="0.4441" stop-color="#f5ffff"/><stop offset="0.5235" stop-color="#fffafb"/><stop offset="0.9676" stop-color="#ffbbbb"/><stop offset="0.9971" stop-color="#ffb8b8"/><stop offset="1.0000" stop-color="#ffb7b8"/></linearGradient><linearGradient id="xy33" gradientUnits="userSpaceOnUse" x1="636" y1="0" x2="976" y2="0"><stop offset="0.0000" stop-color="#aafdff"/><stop offset="0.4441" stop-color="#f5fdff"/><stop offset="0.5235" stop-color="#fff9fb"/><stop offset="0.9676" stop-color="#ffbabb"/><stop offset="0.9971" stop-color="#ffb7b8"/><stop offset="1.0000" stop-color="#ffb6b8"/></linearGradient><linearGradient id="xy34" gradientUnits="userSpaceOnUse" x1="636" y1="0" x2="976" y2="0"><stop offset="0.0000" stop-color="#aafcff"/><stop offset="0.4441" stop-color="#f5fbff"/><stop offset="0.5235" stop-color="#fff7fb"/><stop offset="0.9676" stop-color="#ffb9bc"/><stop offset="0.9971" stop-color="#ffb5b8"/><stop offset="1.0000" stop-color="#ffb5b8"/></linearGradient><linearGradient id="xy35" gradientUnits="userSpaceOnUse" x1="636" y1="0" x2="976" y2="0"><stop offset="0.0000" stop-color="#aafaff"/><stop offset="0.4441" stop-color="#f5faff"/><stop offset="0.5235" stop-color="#fff6fb"/><stop offset="0.9676" stop-color="#ffb8bc"/><stop offset="0.9971" stop-color="#ffb4b9"/><stop offset="1.0000" stop-color="#ffb4b8"/></linearGradient><linearGradient id="xy36" gradientUnits="userSpaceOnUse" x1="636" y1="0" x2="976" y2="0"><stop offset="0.0000" stop-color="#abf9ff"/><stop offset="0.4441" stop-color="#f5f8ff"/><stop offset="0.5235" stop-color="#fff4fb"/><stop offset="0.9676" stop-color="#ffb6bc"/><stop offset="0.9971" stop-color="#ffb3b9"/><stop offset="1.0000" stop-color="#ffb3b8"/></linearGradient><linearGradient id="xy37" gradientUnits="userSpaceOnUse" x1="636" y1="0" x2="976" y2="0"><stop offset="0.0000" stop-color="#abf7ff"/><stop offset="0.4441" stop-color="#f5f6ff"/><stop offset="0.5235" stop-color="#fff3fb"/><stop offset="0.9676" stop-color="#ffb5bc"/><stop offset="0.9971" stop-color="#ffb2b9"/><stop offset="1.0000" stop-color="#ffb2b9"/></linearGradient><linearGradient id="xy38" gradientUnits="userSpaceOnUse" x1="636" y1="0" x2="976" y2="0"><stop offset="0.0000" stop-color="#abf6ff"/><stop offset="0.4441" stop-color="#f4f5ff"/><stop offset="0.5235" stop-color="#fff1fb"/><stop offset="0.9676" stop-color="#ffb4bd"/><stop offset="0.9971" stop-color="#ffb1b9"/><stop offset="1.0000" stop-color="#ffb1b9"/></linearGradient><linearGradient id="xy39" gradientUnits="userSpaceOnUse" x1="636" y1="0" x2="976" y2="0"><stop offset="0.0000" stop-color="#abf4ff"/><stop offset="0.4441" stop-color="#f4f3ff"/><stop offset="0.5235" stop-color="#fff0fb"/><stop offset="0.9676" stop-color="#ffb3bd"/><stop offset="0.9971" stop-color="#ffb0b9"/><stop offset="1.0000" stop-color="#ffb0b9"/></linearGradient><linearGradient id="xy40" gradientUnits="userSpaceOnUse" x1="636" y1="0" x2="976" y2="0"><stop offset="0.0000" stop-color="#abf2ff"/><stop offset="0.4441" stop-color="#f4f1ff"/><stop offset="0.5412" stop-color="#ffebf9"/><stop offset="0.9853" stop-color="#ffb0bb"/><stop offset="1.0000" stop-color="#ffaeb9"/></linearGradient><linearGradient id="xy41" gradientUnits="userSpaceOnUse" x1="636" y1="0" x2="976" y2="0"><stop offset="0.0000" stop-color="#abf1ff"/><stop offset="0.4441" stop-color="#f4f0ff"/><stop offset="0.5412" stop-color="#ffeaf9"/><stop offset="0.9853" stop-color="#ffafbb"/><stop offset="1.0000" stop-color="#ffadba"/></linearGradient><linearGradient id="xy42" gradientUnits="userSpaceOnUse" x1="636" y1="0" x2="976" y2="0"><stop offset="0.0000" stop-color="#abefff"/><stop offset="0.4441" stop-color="#f4eeff"/><stop offset="0.5412" stop-color="#ffe8f9"/><stop offset="0.9853" stop-color="#ffaebb"/><stop offset="1.0000" stop-color="#ffacba"/></linearGradient><linearGradient id="xy43" gradientUnits="userSpaceOnUse" x1="636" y1="0" x2="976" y2="0"><stop offset="0.0000" stop-color="#abeeff"/><stop offset="0.4441" stop-color="#f4ecff"/><stop offset="0.5412" stop-color="#ffe7f9"/><stop offset="0.9853" stop-color="#ffadbc"/><stop offset="1.0000" stop-color="#ffabba"/></linearGradient><linearGradient id="xy44" gradientUnits="userSpaceOnUse" x1="636" y1="0" x2="976" y2="0"><stop offset="0.0000" stop-color="#abecff"/><stop offset="0.4441" stop-color="#f4ebff"/><stop offset="0.5412" stop-color="#ffe5f9"/><stop offset="0.9853" stop-color="#ffacbc"/><stop offset="1.0000" stop-color="#ffaaba"/></linearGradient><linearGradient id="xy45" gradientUnits="userSpaceOnUse" x1="636" y1="0" x2="976" y2="0"><stop offset="0.0000" stop-color="#abebff"/><stop offset="0.4441" stop-color="#f4e9ff"/><stop offset="0.5412" stop-color="#ffe4f9"/><stop offset="0.9853" stop-color="#ffaabc"/><stop offset="1.0000" stop-color="#ffa9ba"/></linearGradient><linearGradient id="xy46" gradientUnits="userSpaceOnUse" x1="636" y1="0" x2="976" y2="0"><stop offset="0.0000" stop-color="#ace9ff"/><stop offset="0.4441" stop-color="#f4e8ff"/><stop offset="0.5412" stop-color="#ffe2f9"/><stop offset="0.9853" stop-color="#ffa9bc"/><stop offset="1.0000" stop-color="#ffa8bb"/></linearGradient><linearGradient id="xy47" gradientUnits="userSpaceOnUse" x1="636" y1="0" x2="976" y2="0"><stop offset="0.0000" stop-color="#ace8ff"/><stop offset="0.4441" stop-color="#f4e6ff"/><stop offset="0.5412" stop-color="#ffe1f9"/><stop offset="0.9853" stop-color="#ffa8bc"/><stop offset="1.0000" stop-color="#ffa7bb"/></linearGradient><linearGradient id="xy48" gradientUnits="userSpaceOnUse" x1="636" y1="0" x2="976" y2="0"><stop offset="0.0000" stop-color="#ace6ff"/><stop offset="0.4441" stop-color="#f4e4ff"/><stop offset="0.5412" stop-color="#ffdffa"/><stop offset="0.9853" stop-color="#ffa7bd"/><stop offset="1.0000" stop-color="#ffa6bb"/></linearGradient><linearGradient id="xy49" gradientUnits="userSpaceOnUse" x1="636" y1="0" x2="976" y2="0"><stop offset="0.0000" stop-color="#ace5ff"/><stop offset="0.4441" stop-color="#f3e3ff"/><stop offset="0.5412" stop-color="#ffdefa"/><stop offset="0.9853" stop-color="#ffa6bd"/><stop offset="1.0000" stop-color="#ffa5bb"/></linearGradient><linearGradient id="xy50" gradientUnits="userSpaceOnUse" x1="636" y1="0" x2="976" y2="0"><stop offset="0.0000" stop-color="#ace3ff"/><stop offset="0.4441" stop-color="#f3e1ff"/><stop offset="0.5412" stop-color="#ffdcfa"/><stop offset="0.9853" stop-color="#ffa5bd"/><stop offset="1.0000" stop-color="#ffa4bc"/></linearGradient><linearGradient id="xy51" gradientUnits="userSpaceOnUse" x1="636" y1="0" x2="976" y2="0"><stop offset="0.0000" stop-color="#ace2ff"/><stop offset="0.4441" stop-color="#f3e0ff"/><stop offset="0.5412" stop-color="#ffdbfa"/><stop offset="0.9853" stop-color="#ffa4bd"/><stop offset="1.0000" stop-color="#ffa3bc"/></linearGradient><linearGradient id="xy52" gradientUnits="userSpaceOnUse" x1="636" y1="0" x2="976" y2="0"><stop offset="0.0000" stop-color="#ace0ff"/><stop offset="0.4441" stop-color="#f3deff"/><stop offset="0.5412" stop-color="#ffd9fa"/><stop offset="0.9853" stop-color="#ffa3be"/><stop offset="1.0000" stop-color="#ffa1bc"/></linearGradient><linearGradient id="xy53" gradientUnits="userSpaceOnUse" x1="636" y1="0" x2="976" y2="0"><stop offset="0.0000" stop-color="#acdfff"/><stop offset="0.4441" stop-color="#f3ddff"/><stop offset="0.5412" stop-color="#ffd8fa"/><stop offset="0.9853" stop-color="#ffa2be"/><stop offset="1.0000" stop-color="#ffa0bc"/></linearGradient><linearGradient id="xy54" gradientUnits="userSpaceOnUse" x1="636" y1="0" x2="976" y2="0"><stop offset="0.0000" stop-color="#acddff"/><stop offset="0.4441" stop-color="#f3dbff"/><stop offset="0.5412" stop-color="#ffd7fa"/><stop offset="0.9853" stop-color="#ffa1be"/><stop offset="1.0000" stop-color="#ff9fbc"/></linearGradient><linearGradient id="xy55" gradientUnits="userSpaceOnUse" x1="636" y1="0" x2="976" y2="0"><stop offset="0.0000" stop-color="#acdcff"/><stop offset="0.4441" stop-color="#f3daff"/><stop offset="0.5412" stop-color="#ffd5fa"/><stop offset="0.9853" stop-color="#ffa0be"/><stop offset="1.0000" stop-color="#ff9ebd"/></linearGradient><linearGradient id="xy56" gradientUnits="userSpaceOnUse" x1="636" y1="0" x2="976" y2="0"><stop offset="0.0000" stop-color="#acdaff"/><stop offset="0.4441" stop-color="#f3d8ff"/><stop offset="0.5412" stop-color="#ffd4fb"/><stop offset="0.9853" stop-color="#ff9fbe"/><stop offset="1.0000" stop-color="#ff9dbd"/></linearGradient><linearGradient id="xy57" gradientUnits="userSpaceOnUse" x1="636" y1="0" x2="976" y2="0"><stop offset="0.0000" stop-color="#add9ff"/><stop offset="0.4441" stop-color="#f3d6ff"/><stop offset="0.5412" stop-color="#ffd2fb"/><stop offset="0.9853" stop-color="#ff9ebf"/><stop offset="1.0000" stop-color="#ff9cbd"/></linearGradient><linearGradient id="xy58" gradientUnits="userSpaceOnUse" x1="636" y1="0" x2="976" y2="0"><stop offset="0.0000" stop-color="#add8ff"/><stop offset="0.4441" stop-color="#f3d5ff"/><stop offset="0.5412" stop-color="#ffd1fb"/><stop offset="0.9853" stop-color="#ff9dbf"/><stop offset="1.0000" stop-color="#ff9bbd"/></linearGradient><linearGradient id="xy59" gradientUnits="userSpaceOnUse" x1="636" y1="0" x2="976" y2="0"><stop offset="0.0000" stop-color="#add6ff"/><stop offset="0.4441" stop-color="#f3d3ff"/><stop offset="0.5412" stop-color="#ffd0fb"/><stop offset="0.9853" stop-color="#ff9cbf"/><stop offset="1.0000" stop-color="#ff9abd"/></linearGradient><linearGradient id="xy60" gradientUnits="userSpaceOnUse" x1="636" y1="0" x2="976" y2="0"><stop offset="0.0000" stop-color="#add5ff"/><stop offset="0.4441" stop-color="#f3d2ff"/><stop offset="0.5412" stop-color="#ffcefb"/><stop offset="0.9853" stop-color="#ff9bbf"/><stop offset="1.0000" stop-color="#ff99be"/></linearGradient><linearGradient id="xy61" gradientUnits="userSpaceOnUse" x1="636" y1="0" x2="976" y2="0"><stop offset="0.0000" stop-color="#add3ff"/><stop offset="0.4441" stop-color="#f2d0ff"/><stop offset="0.5412" stop-color="#ffcdfb"/><stop offset="0.9853" stop-color="#ff9abf"/><stop offset="1.0000" stop-color="#ff98be"/></linearGradient><linearGradient id="xy62" gradientUnits="userSpaceOnUse" x1="636" y1="0" x2="976" y2="0"><stop offset="0.0000" stop-color="#add2ff"/><stop offset="0.4441" stop-color="#f2cfff"/><stop offset="0.5412" stop-color="#ffcbfb"/><stop offset="0.9853" stop-color="#ff98c0"/><stop offset="1.0000" stop-color="#ff97be"/></linearGradient><linearGradient id="xy63" gradientUnits="userSpaceOnUse" x1="636" y1="0" x2="976" y2="0"><stop offset="0.0000" stop-color="#add1ff"/><stop offset="0.4441" stop-color="#f2ceff"/><stop offset="0.5412" stop-color="#ffcafb"/><stop offset="0.9853" stop-color="#ff97c0"/><stop offset="1.0000" stop-color="#ff96be"/></linearGradient><linearGradient id="xy64" gradientUnits="userSpaceOnUse" x1="636" y1="0" x2="976" y2="0"><stop offset="0.0000" stop-color="#adcfff"/><stop offset="0.4441" stop-color="#f2ccff"/><stop offset="0.5412" stop-color="#ffc9fc"/><stop offset="0.9853" stop-color="#ff96c0"/><stop offset="1.0000" stop-color="#ff95be"/></linearGradient><linearGradient id="xy65" gradientUnits="userSpaceOnUse" x1="636" y1="0" x2="976" y2="0"><stop offset="0.0000" stop-color="#adceff"/><stop offset="0.4441" stop-color="#f2cbff"/><stop offset="0.5412" stop-color="#ffc7fc"/><stop offset="0.9853" stop-color="#ff95c0"/><stop offset="1.0000" stop-color="#ff94bf"/></linearGradient></defs><rect x="636" y="678" width="340" height="3" fill="url(#xy0)"/><rect x="636" y="681" width="340" height="3" fill="url(#xy1)"/><rect x="636" y="684" width="340" height="3" fill="url(#xy2)"/><rect x="636" y="687" width="340" height="3" fill="url(#xy3)"/><rect x="636" y="690" width="340" height="3" fill="url(#xy4)"/><rect x="636" y="693" width="340" height="3" fill="url(#xy5)"/><rect x="636" y="696" width="340" height="3" fill="url(#xy6)"/><rect x="636" y="699" width="340" height="3" fill="url(#xy7)"/><rect x="636" y="702" width="340" height="3" fill="url(#xy8)"/><rect x="636" y="705" width="340" height="3" fill="url(#xy9)"/><rect x="636" y="708" width="340" height="3" fill="url(#xy10)"/><rect x="636" y="711" width="340" height="3" fill="url(#xy11)"/><rect x="636" y="714" width="340" height="3" fill="url(#xy12)"/><rect x="636" y="717" width="340" height="3" fill="url(#xy13)"/><rect x="636" y="720" width="340" height="3" fill="url(#xy14)"/><rect x="636" y="723" width="340" height="3" fill="url(#xy15)"/><rect x="636" y="726" width="340" height="3" fill="url(#xy16)"/><rect x="636" y="729" width="340" height="3" fill="url(#xy17)"/><rect x="636" y="732" width="340" height="3" fill="url(#xy18)"/><rect x="636" y="735" width="340" height="3" fill="url(#xy19)"/><rect x="636" y="738" width="340" height="3" fill="url(#xy20)"/><rect x="636" y="741" width="340" height="3" fill="url(#xy21)"/><rect x="636" y="744" width="340" height="3" fill="url(#xy22)"/><rect x="636" y="747" width="340" height="3" fill="url(#xy23)"/><rect x="636" y="750" width="340" height="3" fill="url(#xy24)"/><rect x="636" y="753" width="340" height="3" fill="url(#xy25)"/><rect x="636" y="756" width="340" height="3" fill="url(#xy26)"/><rect x="636" y="759" width="340" height="3" fill="url(#xy27)"/><rect x="636" y="762" width="340" height="3" fill="url(#xy28)"/><rect x="636" y="765" width="340" height="3" fill="url(#xy29)"/><rect x="636" y="768" width="340" height="3" fill="url(#xy30)"/><rect x="636" y="771" width="340" height="3" fill="url(#xy31)"/><rect x="636" y="774" width="340" height="3" fill="url(#xy32)"/><rect x="636" y="777" width="340" height="3" fill="url(#xy33)"/><rect x="636" y="780" width="340" height="3" fill="url(#xy34)"/><rect x="636" y="783" width="340" height="3" fill="url(#xy35)"/><rect x="636" y="786" width="340" height="3" fill="url(#xy36)"/><rect x="636" y="789" width="340" height="3" fill="url(#xy37)"/><rect x="636" y="792" width="340" height="3" fill="url(#xy38)"/><rect x="636" y="795" width="340" height="3" fill="url(#xy39)"/><rect x="636" y="798" width="340" height="3" fill="url(#xy40)"/><rect x="636" y="801" width="340" height="3" fill="url(#xy41)"/><rect x="636" y="804" width="340" height="3" fill="url(#xy42)"/><rect x="636" y="807" width="340" height="3" fill="url(#xy43)"/><rect x="636" y="810" width="340" height="3" fill="url(#xy44)"/><rect x="636" y="813" width="340" height="3" fill="url(#xy45)"/><rect x="636" y="816" width="340" height="3" fill="url(#xy46)"/><rect x="636" y="819" width="340" height="3" fill="url(#xy47)"/><rect x="636" y="822" width="340" height="3" fill="url(#xy48)"/><rect x="636" y="825" width="340" height="3" fill="url(#xy49)"/><rect x="636" y="828" width="340" height="3" fill="url(#xy50)"/><rect x="636" y="831" width="340" height="3" fill="url(#xy51)"/><rect x="636" y="834" width="340" height="3" fill="url(#xy52)"/><rect x="636" y="837" width="340" height="3" fill="url(#xy53)"/><rect x="636" y="840" width="340" height="3" fill="url(#xy54)"/><rect x="636" y="843" width="340" height="3" fill="url(#xy55)"/><rect x="636" y="846" width="340" height="3" fill="url(#xy56)"/><rect x="636" y="849" width="340" height="3" fill="url(#xy57)"/><rect x="636" y="852" width="340" height="3" fill="url(#xy58)"/><rect x="636" y="855" width="340" height="3" fill="url(#xy59)"/><rect x="636" y="858" width="340" height="3" fill="url(#xy60)"/><rect x="636" y="861" width="340" height="3" fill="url(#xy61)"/><rect x="636" y="864" width="340" height="3" fill="url(#xy62)"/><rect x="636" y="867" width="340" height="3" fill="url(#xy63)"/><rect x="636" y="870" width="340" height="3" fill="url(#xy64)"/><rect x="636" y="873" width="340" height="3" fill="url(#xy65)"/>
<rect x="636" y="678" width="340" height="198" fill="none" stroke="#a6a6a6" stroke-width="1.5"/>
<circle cx="794" cy="758.5" r="5.3" fill="#d0d0d0" stroke="#303030" stroke-width="1.2"/>
<circle cx="791.7" cy="760.2" r="5.3" fill="#f8f8f8" stroke="#303030" stroke-width="1.2"/>
<rect x="798" y="768.3" width="13.5" height="13.5" fill="none" stroke="#000" stroke-width="2.2"/>
<rect x="993" y="661" width="653.5" height="225" fill="#333" stroke="#000" stroke-width="1.5"/>
<clipPath id="tclip"><rect x="994" y="662" width="634" height="204"/></clipPath>
<g clip-path="url(#tclip)">
<rect x="994" y="662" width="634" height="17" fill="#353535"/>
<rect x="994" y="679" width="634" height="16.5" fill="#151515"/>
<text transform="translate(1126.0,685.5) scale(1,1.1)" font-size="16.4" fill="#ececec" text-anchor="middle" font-weight="normal" >White</text>
<text transform="translate(1199.0,685.5) scale(1,1.1)" font-size="16.4" fill="#ececec" text-anchor="middle" font-weight="normal" >Red</text>
<text transform="translate(1272.0,685.5) scale(1,1.1)" font-size="16.4" fill="#ececec" text-anchor="middle" font-weight="normal" >Green</text>
<text transform="translate(1345.5,685.5) scale(1,1.1)" font-size="16.4" fill="#ececec" text-anchor="middle" font-weight="normal" >Blue</text>
<text transform="translate(1418.3,685.5) scale(1,1.1)" font-size="16.4" fill="#ececec" text-anchor="middle" font-weight="normal" >Cyan</text>
<text transform="translate(1492.8,685.5) scale(1,1.1)" font-size="16.4" fill="#ececec" text-anchor="middle" font-weight="normal" >Magenta</text>
<text transform="translate(1567.3,685.5) scale(1,1.1)" font-size="16.4" fill="#ececec" text-anchor="middle" font-weight="normal" >Yellow</text>
<text transform="translate(1645.0,685.5) scale(1,1.1)" font-size="16.4" fill="#ececec" text-anchor="middle" font-weight="normal" >100W</text>
<rect x="994" y="695.5" width="634" height="31.1" fill="#414141"/>
<text transform="translate(1007.0,719.0) scale(1,1.12)" font-size="16.2" fill="#f4f4f4" text-anchor="start" font-weight="bold" >x: CIE31</text>
<text transform="translate(1091.5,719.0) scale(1,1.1)" font-size="16.6" fill="#efefef" text-anchor="start" font-weight="normal" >0,3113</text>
<text transform="translate(1169.0,719.0) scale(1,1.1)" font-size="16.6" fill="#efefef" text-anchor="start" font-weight="normal" >0,6482</text>
<text transform="translate(1237.5,719.0) scale(1,1.1)" font-size="16.6" fill="#efefef" text-anchor="start" font-weight="normal" >0,2974</text>
<text transform="translate(1315.0,719.0) scale(1,1.1)" font-size="16.6" fill="#efefef" text-anchor="start" font-weight="normal" >0,1484</text>
<text transform="translate(1383.5,719.0) scale(1,1.1)" font-size="16.6" fill="#efefef" text-anchor="start" font-weight="normal" >0,2192</text>
<text transform="translate(1461.5,719.0) scale(1,1.1)" font-size="16.6" fill="#efefef" text-anchor="start" font-weight="normal" >0,3283</text>
<text transform="translate(1532.5,719.0) scale(1,1.1)" font-size="16.6" fill="#efefef" text-anchor="start" font-weight="normal" >0,4217</text>
<text transform="translate(1610.5,719.0) scale(1,1.1)" font-size="16.6" fill="#efefef" text-anchor="start" font-weight="normal" >0,3113</text>
<rect x="994" y="726.6" width="634" height="31.1" fill="#7f7f7f"/>
<text transform="translate(1007.0,750.1) scale(1,1.12)" font-size="16.2" fill="#f4f4f4" text-anchor="start" font-weight="bold" >y: CIE31</text>
<text transform="translate(1091.5,750.1) scale(1,1.1)" font-size="16.6" fill="#efefef" text-anchor="start" font-weight="normal" >0,3332</text>
<text transform="translate(1169.0,750.1) scale(1,1.1)" font-size="16.6" fill="#efefef" text-anchor="start" font-weight="normal" >0,3330</text>
<text transform="translate(1237.5,750.1) scale(1,1.1)" font-size="16.6" fill="#efefef" text-anchor="start" font-weight="normal" >0,6190</text>
<text transform="translate(1315.0,750.1) scale(1,1.1)" font-size="16.6" fill="#efefef" text-anchor="start" font-weight="normal" >0,0584</text>
<text transform="translate(1383.5,750.1) scale(1,1.1)" font-size="16.6" fill="#efefef" text-anchor="start" font-weight="normal" >0,3432</text>
<text transform="translate(1461.5,750.1) scale(1,1.1)" font-size="16.6" fill="#efefef" text-anchor="start" font-weight="normal" >0,1538</text>
<text transform="translate(1532.5,750.1) scale(1,1.1)" font-size="16.6" fill="#efefef" text-anchor="start" font-weight="normal" >0,5206</text>
<text transform="translate(1610.5,750.1) scale(1,1.1)" font-size="16.6" fill="#efefef" text-anchor="start" font-weight="normal" >0,3332</text>
<rect x="994" y="757.7" width="634" height="31.1" fill="#414141"/>
<text transform="translate(1007.0,781.2) scale(1,1.12)" font-size="16.2" fill="#f4f4f4" text-anchor="start" font-weight="bold" >Y</text>
<text transform="translate(1091.5,781.2) scale(1,1.1)" font-size="16.6" fill="#efefef" text-anchor="start" font-weight="normal" >195,8106</text>
<text transform="translate(1169.0,781.2) scale(1,1.1)" font-size="16.6" fill="#efefef" text-anchor="start" font-weight="normal" >44,1586</text>
<text transform="translate(1237.5,781.2) scale(1,1.1)" font-size="16.6" fill="#efefef" text-anchor="start" font-weight="normal" >150,4602</text>
<text transform="translate(1315.0,781.2) scale(1,1.1)" font-size="16.6" fill="#efefef" text-anchor="start" font-weight="normal" >13,2516</text>
<text transform="translate(1383.5,781.2) scale(1,1.1)" font-size="16.6" fill="#efefef" text-anchor="start" font-weight="normal" >156,5458</text>
<text transform="translate(1461.5,781.2) scale(1,1.1)" font-size="16.6" fill="#efefef" text-anchor="start" font-weight="normal" >56,8419</text>
<text transform="translate(1532.5,781.2) scale(1,1.1)" font-size="16.6" fill="#efefef" text-anchor="start" font-weight="normal" >189,4763</text>
<text transform="translate(1610.5,781.2) scale(1,1.1)" font-size="16.6" fill="#efefef" text-anchor="start" font-weight="normal" >342,1600</text>
<rect x="994" y="788.8" width="634" height="31.1" fill="#7f7f7f"/>
<text transform="translate(1007.0,812.3) scale(1,1.12)" font-size="16.2" fill="#f4f4f4" text-anchor="start" font-weight="bold" >Target Y</text>
<text transform="translate(1091.5,812.3) scale(1,1.1)" font-size="16.6" fill="#efefef" text-anchor="start" font-weight="normal" >178,2642</text>
<text transform="translate(1169.0,812.3) scale(1,1.1)" font-size="16.6" fill="#efefef" text-anchor="start" font-weight="normal" >37,9089</text>
<text transform="translate(1237.5,812.3) scale(1,1.1)" font-size="16.6" fill="#efefef" text-anchor="start" font-weight="normal" >127,4872</text>
<text transform="translate(1315.0,812.3) scale(1,1.1)" font-size="16.6" fill="#efefef" text-anchor="start" font-weight="normal" >12,8681</text>
<text transform="translate(1383.5,812.3) scale(1,1.1)" font-size="16.6" fill="#efefef" text-anchor="start" font-weight="normal" >140,3553</text>
<text transform="translate(1461.5,812.3) scale(1,1.1)" font-size="16.6" fill="#efefef" text-anchor="start" font-weight="normal" >50,7771</text>
<text transform="translate(1532.5,812.3) scale(1,1.1)" font-size="16.6" fill="#efefef" text-anchor="start" font-weight="normal" >165,3961</text>
<text transform="translate(1610.5,812.3) scale(1,1.1)" font-size="16.6" fill="#efefef" text-anchor="start" font-weight="normal" >342,1600</text>
<rect x="994" y="819.9" width="634" height="31.1" fill="#414141"/>
<text transform="translate(1007.0,843.4) scale(1,1.12)" font-size="16.2" fill="#f4f4f4" text-anchor="start" font-weight="bold" >&#916;E 2000</text>
<text transform="translate(1091.5,843.4) scale(1,1.1)" font-size="16.6" fill="#efefef" text-anchor="start" font-weight="normal" >4,0289</text>
<text transform="translate(1169.0,843.4) scale(1,1.1)" font-size="16.6" fill="#efefef" text-anchor="start" font-weight="normal" >3,8305</text>
<text transform="translate(1237.5,843.4) scale(1,1.1)" font-size="16.6" fill="#efefef" text-anchor="start" font-weight="normal" >4,2862</text>
<text transform="translate(1315.0,843.4) scale(1,1.1)" font-size="16.6" fill="#efefef" text-anchor="start" font-weight="normal" >0,5859</text>
<text transform="translate(1383.5,843.4) scale(1,1.1)" font-size="16.6" fill="#efefef" text-anchor="start" font-weight="normal" >4,7771</text>
<text transform="translate(1461.5,843.4) scale(1,1.1)" font-size="16.6" fill="#efefef" text-anchor="start" font-weight="normal" >2,6354</text>
<text transform="translate(1532.5,843.4) scale(1,1.1)" font-size="16.6" fill="#efefef" text-anchor="start" font-weight="normal" >3,9816</text>
<text transform="translate(1610.5,843.4) scale(1,1.1)" font-size="16.6" fill="#efefef" text-anchor="start" font-weight="normal" >4,0289</text>
<rect x="994" y="851.0" width="634" height="31.1" fill="#7f7f7f"/>
<text transform="translate(1007.0,874.5) scale(1,1.12)" font-size="16.2" fill="#f4f4f4" text-anchor="start" font-weight="bold" >&#916;E ITP</text>
<text transform="translate(1091.5,874.5) scale(1,1.1)" font-size="16.6" fill="#efefef" text-anchor="start" font-weight="normal" >7,3602</text>
<text transform="translate(1169.0,874.5) scale(1,1.1)" font-size="16.6" fill="#efefef" text-anchor="start" font-weight="normal" >15,1628</text>
<text transform="translate(1237.5,874.5) scale(1,1.1)" font-size="16.6" fill="#efefef" text-anchor="start" font-weight="normal" >15,2010</text>
<text transform="translate(1315.0,874.5) scale(1,1.1)" font-size="16.6" fill="#efefef" text-anchor="start" font-weight="normal" >5,0780</text>
<text transform="translate(1383.5,874.5) scale(1,1.1)" font-size="16.6" fill="#efefef" text-anchor="start" font-weight="normal" >10,4741</text>
<text transform="translate(1461.5,874.5) scale(1,1.1)" font-size="16.6" fill="#efefef" text-anchor="start" font-weight="normal" >12,8082</text>
<text transform="translate(1532.5,874.5) scale(1,1.1)" font-size="16.6" fill="#efefef" text-anchor="start" font-weight="normal" >14,0325</text>
<text transform="translate(1610.5,874.5) scale(1,1.1)" font-size="16.6" fill="#efefef" text-anchor="start" font-weight="normal" >2,1000</text>
</g>
<rect x="1628" y="696" width="17.5" height="170" fill="#5a5a5a"/>
<rect x="1630" y="717.5" width="13" height="105.5" rx="6" fill="#454545"/>
<rect x="1629.5" y="697.5" width="14" height="16" rx="3" fill="#777" stroke="#666" stroke-width="1"/>
<path d="M1631.5,709.5 L1641.5,709.5 L1636.5,703 Z" fill="#3a3a3a"/>
<rect x="1629.5" y="848.5" width="14" height="16" rx="3" fill="#777" stroke="#666" stroke-width="1"/>
<path d="M1631.5,853 L1641.5,853 L1636.5,859.5 Z" fill="#3a3a3a"/>
<rect x="994" y="866" width="634" height="19" fill="#5a5a5a"/>
<rect x="1013.5" y="868.5" width="547" height="14.5" rx="7" fill="#404040"/>
<rect x="996" y="868" width="14" height="16" rx="3" fill="#777" stroke="#666" stroke-width="1"/>
<path d="M1000,876 L1006.5,871 L1006.5,881 Z" fill="#3a3a3a"/>
<rect x="1612" y="868" width="14" height="16" rx="3" fill="#777" stroke="#666" stroke-width="1"/>
<path d="M1622,876 L1615.5,871 L1615.5,881 Z" fill="#3a3a3a"/>
<rect x="1628" y="866" width="17.5" height="19" fill="#3a3a3a"/>
<line x1="1646" y1="661" x2="1646" y2="886" stroke="#000" stroke-width="1.5"/>
<rect x="0" y="927" width="1651" height="76" fill="#2b2b2b"/>
<path d="M0.0,1003 V935 Q0.0,930 5.0,930 H150.0 Q155.0,930 155.0,935 V1003 Z" fill="url(#btng)"/>
<rect x="0.0" y="930" width="155" height="73" fill="url(#btnside)"/>
<rect x="6.5" y="935.7" width="142" height="45" rx="4" fill="#c0c0c0" stroke="#999999" stroke-width="1"/>
<text x="77.5" y="1000.2" font-size="14" fill="#2c2c2c" text-anchor="middle" font-weight="bold" >White</text>
<path d="M157.8,1003 V935 Q157.8,930 162.8,930 H307.9 Q312.9,930 312.9,935 V1003 Z" fill="url(#btng)"/>
<rect x="157.8" y="930" width="155" height="73" fill="url(#btnside)"/>
<rect x="164.3" y="935.7" width="142" height="45" rx="4" fill="#bd0000" stroke="#970000" stroke-width="1"/>
<text x="235.3" y="1000.2" font-size="14" fill="#2c2c2c" text-anchor="middle" font-weight="bold" >Red</text>
<path d="M315.7,1003 V935 Q315.7,930 320.7,930 H465.7 Q470.7,930 470.7,935 V1003 Z" fill="url(#btng)"/>
<rect x="315.7" y="930" width="155" height="73" fill="url(#btnside)"/>
<rect x="322.2" y="935.7" width="142" height="45" rx="4" fill="#00bd00" stroke="#009700" stroke-width="1"/>
<text x="393.2" y="1000.2" font-size="14" fill="#2c2c2c" text-anchor="middle" font-weight="bold" >Green</text>
<path d="M473.5,1003 V935 Q473.5,930 478.5,930 H623.5 Q628.5,930 628.5,935 V1003 Z" fill="url(#btng)"/>
<rect x="473.5" y="930" width="155" height="73" fill="url(#btnside)"/>
<rect x="480.0" y="935.7" width="142" height="45" rx="4" fill="#0000bd" stroke="#000097" stroke-width="1"/>
<text x="551.0" y="1000.2" font-size="14" fill="#2c2c2c" text-anchor="middle" font-weight="bold" >Blue</text>
<path d="M631.4,1003 V935 Q631.4,930 636.4,930 H781.4 Q786.4,930 786.4,935 V1003 Z" fill="url(#btng)"/>
<rect x="631.4" y="930" width="155" height="73" fill="url(#btnside)"/>
<rect x="637.9" y="935.7" width="142" height="45" rx="4" fill="#00bdbd" stroke="#009797" stroke-width="1"/>
<text x="708.9" y="1000.2" font-size="14" fill="#2c2c2c" text-anchor="middle" font-weight="bold" >Cyan</text>
<path d="M789.2,1003 V935 Q789.2,930 794.2,930 H939.2 Q944.2,930 944.2,935 V1003 Z" fill="url(#btng)"/>
<rect x="789.2" y="930" width="155" height="73" fill="url(#btnside)"/>
<rect x="795.8" y="935.7" width="142" height="45" rx="4" fill="#bd00bd" stroke="#970097" stroke-width="1"/>
<text x="866.8" y="1000.2" font-size="14" fill="#2c2c2c" text-anchor="middle" font-weight="bold" >Magenta</text>
<path d="M947.1,1003 V935 Q947.1,930 952.1,930 H1097.1 Q1102.1,930 1102.1,935 V1003 Z" fill="url(#btng)"/>
<rect x="947.1" y="930" width="155" height="73" fill="url(#btnside)"/>
<rect x="953.6" y="935.7" width="142" height="45" rx="4" fill="#bdbd00" stroke="#979700" stroke-width="1"/>
<text x="1024.6" y="1000.2" font-size="14" fill="#2c2c2c" text-anchor="middle" font-weight="bold" >Yellow</text>
<path d="M1105.0,1003 V935 Q1105.0,930 1110.0,930 H1255.0 Q1260.0,930 1260.0,935 V1003 Z" fill="url(#btnsel)"/>
<rect x="1111.5" y="935.7" width="142" height="45" rx="4" fill="#ffffff" stroke="#ddd" stroke-width="1"/>
<text x="1182.5" y="1000.2" font-size="14" fill="#ffffff" text-anchor="middle" font-weight="bold" >100W</text>
<path d="M1264,952 V934 Q1264,930 1268,930 H1320 Q1324,930 1324,934 V952 Z" fill="url(#cbg)"/>
<rect x="1264" y="953" width="60" height="50" fill="url(#cbg)"/>
<line x1="1264" y1="952.5" x2="1324" y2="952.5" stroke="#4a4a4a" stroke-width="1.2"/>
<circle cx="1294" cy="941.5" r="9.5" fill="url(#icg)"/>
<path d="M1288,945 L1300,945 L1294,938.5 Z" fill="#333"/>
<rect x="1275.5" y="960" width="37.5" height="38" rx="6" fill="#9a9a9a" stroke="#1e1e1e" stroke-width="2.5"/>
<rect x="1286" y="971" width="17" height="17" fill="#050505"/>
<rect x="1325.0" y="929" width="58.5" height="38" fill="url(#cbg)"/>
<rect x="1384.5" y="929" width="55.0" height="38" fill="url(#cbg)"/>
<rect x="1440.5" y="929" width="55.0" height="38" fill="url(#cbd)"/>
<rect x="1497.0" y="929" width="55.0" height="38" fill="url(#cbg)"/>
<rect x="1553.0" y="929" width="55.5" height="38" fill="url(#cbg)"/>
<circle cx="1354.0" cy="947.5" r="12" fill="url(#icg)" opacity="1"/>
<circle cx="1411.5" cy="947.5" r="12" fill="url(#icg)" opacity="1"/>
<circle cx="1468.0" cy="947.5" r="12" fill="url(#icg)" opacity="0.75"/>
<circle cx="1524.5" cy="947.5" r="12" fill="url(#icg)" opacity="1"/>
<circle cx="1580.5" cy="947.5" r="12" fill="url(#icg)" opacity="1"/>
<rect x="1349" y="943" width="10.5" height="9.5" fill="#2e2e2e"/>
<path d="M1408,942.5 L1408,954.5 L1418,948.5 Z" fill="#2e2e2e"/>
<path d="M1464,942.5 H1461.3 V954.5 H1464 M1472,942.5 H1474.7 V954.5 H1472" fill="none" stroke="#2a2a2a" stroke-width="2.1"/>
<circle cx="1466.3" cy="948.5" r="0.9" fill="#2a2a2a"/><circle cx="1469.7" cy="948.5" r="0.9" fill="#2a2a2a"/>
<path d="M1524.5,948.5 C1521,944 1515.5,944.5 1515.5,948.5 C1515.5,952.5 1521,953 1524.5,948.5 C1528,944 1533.5,944.5 1533.5,948.5 C1533.5,952.5 1528,953 1524.5,948.5 Z" fill="none" stroke="#2e2e2e" stroke-width="2.2"/>
<path d="M1575,947 A6.5,6.5 0 0 1 1586.5,944" fill="none" stroke="#2e2e2e" stroke-width="2.4"/><path d="M1588,939.5 L1588,946.5 L1581.5,945 Z" fill="#2e2e2e"/>
<path d="M1586,950 A6.5,6.5 0 0 1 1574.5,953" fill="none" stroke="#2e2e2e" stroke-width="2.4"/><path d="M1573,957.5 L1573,950.5 L1579.5,952 Z" fill="#2e2e2e"/>
<rect x="1325" y="968" width="170.5" height="35" fill="url(#cbg)"/>
<rect x="1497" y="968" width="160" height="35" fill="url(#cbg)"/>
<circle cx="1364" cy="987" r="12" fill="url(#icg)"/>
<circle cx="1630.5" cy="987" r="12" fill="url(#icg)"/>
<text x="1364" y="995" font-size="24" fill="#333" text-anchor="middle">&#171;</text>
<text x="1630.5" y="995" font-size="24" fill="#333" text-anchor="middle">&#187;</text>
<text x="1398.0" y="997.5" font-size="26" fill="#363636" text-anchor="start" font-weight="bold" >Back</text>
<text x="1531.0" y="997.5" font-size="26" fill="#363636" text-anchor="start" font-weight="bold" >Next</text>
<g transform="translate(1634.8,947.5)" fill="#200000" opacity="0.7" filter="url(#ash)">
<g transform="rotate(0)"><path d="M-2.6,0 L-3.6,-14.5 Q-3.6,-17 0,-17 Q3.6,-17 3.6,-14.5 L2.6,0 Z"/></g>
<g transform="rotate(60)"><path d="M-2.6,0 L-3.6,-14.5 Q-3.6,-17 0,-17 Q3.6,-17 3.6,-14.5 L2.6,0 Z"/></g>
<g transform="rotate(120)"><path d="M-2.6,0 L-3.6,-14.5 Q-3.6,-17 0,-17 Q3.6,-17 3.6,-14.5 L2.6,0 Z"/></g>
<g transform="rotate(180)"><path d="M-2.6,0 L-3.6,-14.5 Q-3.6,-17 0,-17 Q3.6,-17 3.6,-14.5 L2.6,0 Z"/></g>
<g transform="rotate(240)"><path d="M-2.6,0 L-3.6,-14.5 Q-3.6,-17 0,-17 Q3.6,-17 3.6,-14.5 L2.6,0 Z"/></g>
<g transform="rotate(300)"><path d="M-2.6,0 L-3.6,-14.5 Q-3.6,-17 0,-17 Q3.6,-17 3.6,-14.5 L2.6,0 Z"/></g>
</g>
<g transform="translate(1636,946.5)" fill="#e00808">
<g transform="rotate(0)"><path d="M-2.6,0 L-3.6,-14.5 Q-3.6,-17 0,-17 Q3.6,-17 3.6,-14.5 L2.6,0 Z"/></g>
<g transform="rotate(60)"><path d="M-2.6,0 L-3.6,-14.5 Q-3.6,-17 0,-17 Q3.6,-17 3.6,-14.5 L2.6,0 Z"/></g>
<g transform="rotate(120)"><path d="M-2.6,0 L-3.6,-14.5 Q-3.6,-17 0,-17 Q3.6,-17 3.6,-14.5 L2.6,0 Z"/></g>
<g transform="rotate(180)"><path d="M-2.6,0 L-3.6,-14.5 Q-3.6,-17 0,-17 Q3.6,-17 3.6,-14.5 L2.6,0 Z"/></g>
<g transform="rotate(240)"><path d="M-2.6,0 L-3.6,-14.5 Q-3.6,-17 0,-17 Q3.6,-17 3.6,-14.5 L2.6,0 Z"/></g>
<g transform="rotate(300)"><path d="M-2.6,0 L-3.6,-14.5 Q-3.6,-17 0,-17 Q3.6,-17 3.6,-14.5 L2.6,0 Z"/></g>
<circle r="4"/></g>
</svg>
</body></html>
